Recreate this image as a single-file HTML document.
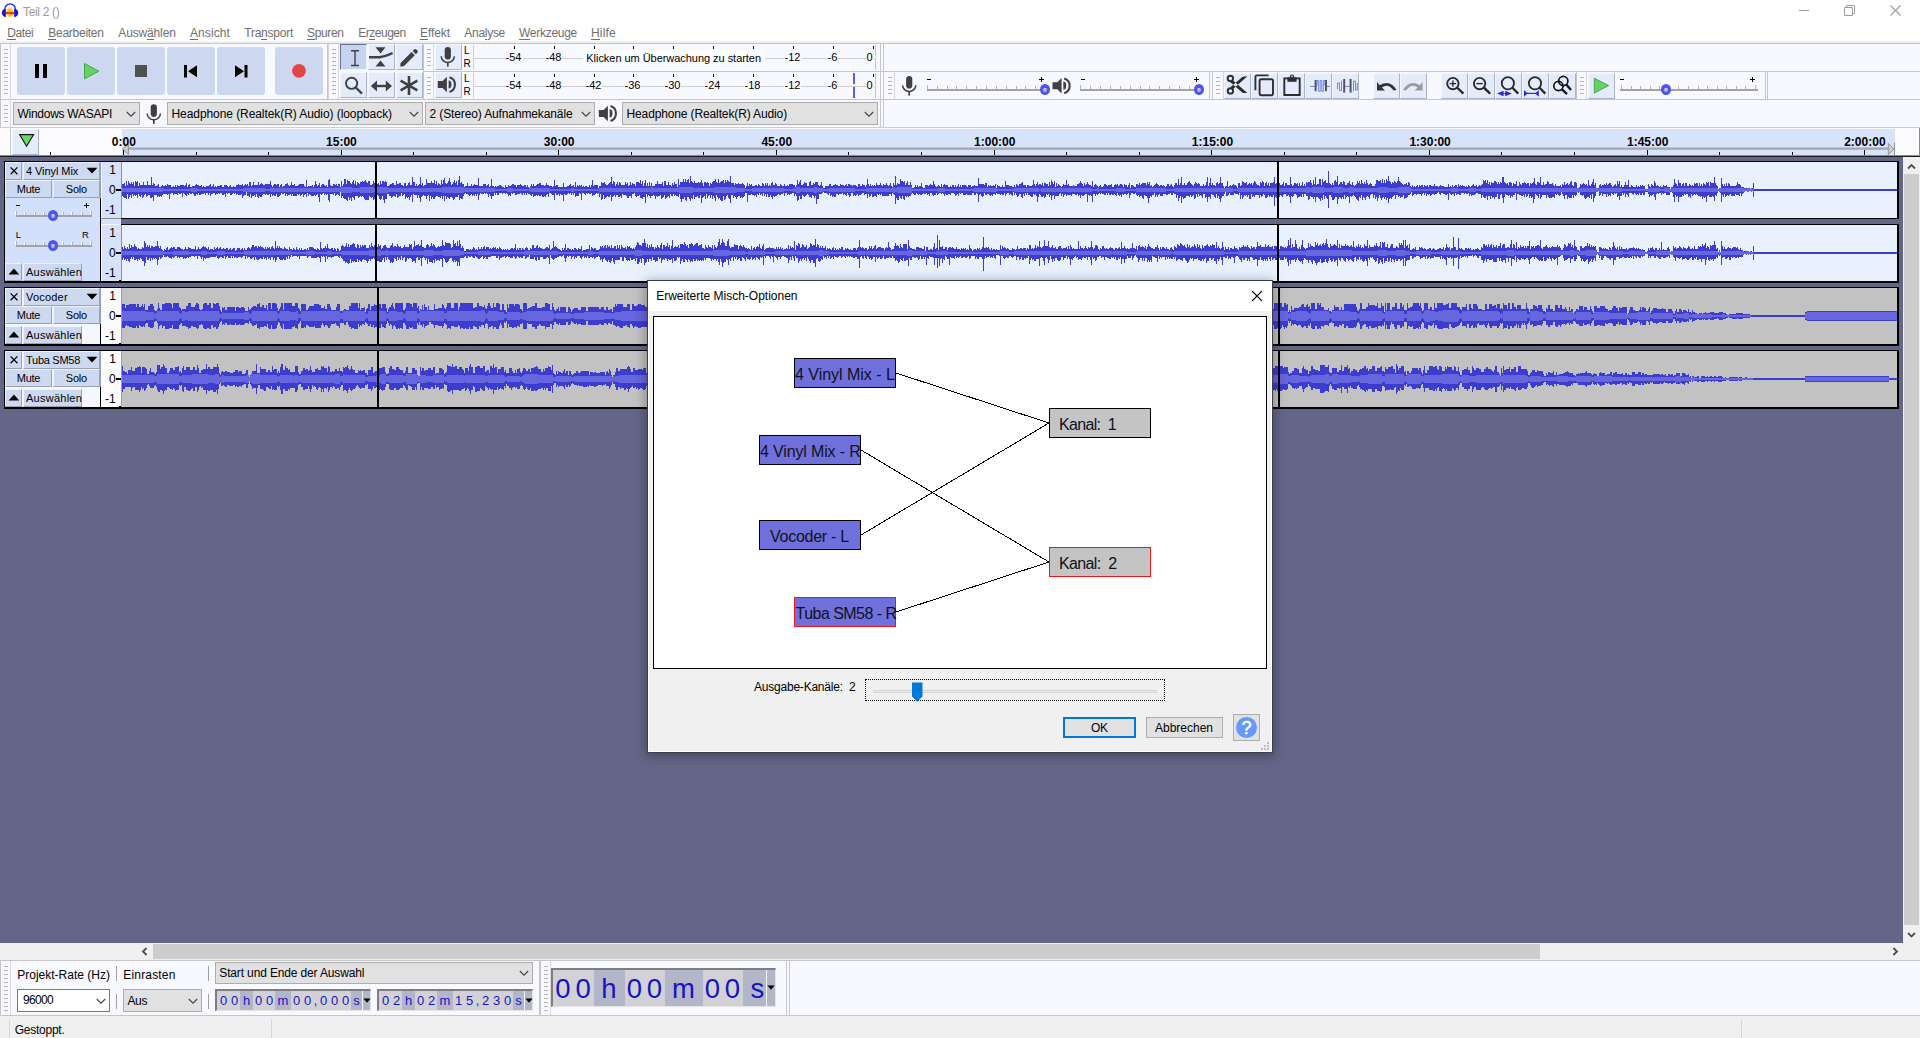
<!DOCTYPE html><html><head><meta charset="utf-8"><title>Teil 2</title><style>
html,body{margin:0;padding:0;}
body{width:1920px;height:1038px;overflow:hidden;position:relative;background:#fff;font-family:"Liberation Sans",sans-serif;}
div,span,svg{position:absolute;box-sizing:border-box;}
span{white-space:pre;}
</style></head><body><div style="left:0px;top:0px;width:1920px;height:23px;background:#fff"></div>
<svg style="left:0;top:0" width="20" height="20" viewBox="0 0 20 20">
<defs><radialGradient id="ag" cx="0.5" cy="0.5" r="0.55"><stop offset="0" stop-color="#f7a21a"/><stop offset="0.6" stop-color="#fbc52c"/><stop offset="1" stop-color="#fff3b0"/></radialGradient></defs>
<ellipse cx="10" cy="12.6" rx="4.4" ry="4.7" fill="url(#ag)"/>
<path d="M5.6 12.2 L8 11.9 L9 12.4 L11 12 L14.4 12.2 V13.9 L11 14.2 L9.4 13.8 L5.6 14 Z" fill="#ff2200"/>
<path d="M4.7 9.6 A5.4 5.8 0 0 1 15.5 9.6" fill="none" stroke="#2222ea" stroke-width="1.25"/>
<path d="M5.9 8.7 V16.9 C3.4 17.4 1.9 14.9 1.9 12.8 C1.9 10.5 3.5 8.5 5.9 8.7 Z" fill="#1414e0"/>
<path d="M14.1 8.7 V16.9 C16.6 17.4 18.2 14.9 18.2 12.8 C18.2 10.5 16.5 8.5 14.1 8.7 Z" fill="#1414e0"/>
</svg>
<span style="left:23px;top:6.34px;font-size:12px;line-height:12px;color:#9a9a9a;font-weight:normal;letter-spacing:-0.338px;">Teil 2 ()</span>
<svg style="left:1790px;top:0" width="130" height="23" viewBox="0 0 130 23">
<path d="M9 10.5 H19" stroke="#9c9c9c" stroke-width="1"/>
<path d="M54.5 7.5 H62.5 V15.5 H54.5 Z M56.5 7.5 V5.5 H64.5 V13.5 H62.5" fill="none" stroke="#9c9c9c" stroke-width="1"/>
<path d="M100.5 5.5 L110.5 15.5 M110.5 5.5 L100.5 15.5" stroke="#9c9c9c" stroke-width="1.1"/>
</svg>
<div style="left:0px;top:23px;width:1920px;height:19px;background:#fff"></div>
<span style="left:7.3px;top:27.24px;font-size:12px;line-height:12px;color:#6e6e6e;font-weight:normal;letter-spacing:-0.403px;">Datei</span>
<div style="left:7.3px;top:38.6px;width:8.3px;height:1px;background:#6e6e6e"></div>
<span style="left:48.3px;top:27.24px;font-size:12px;line-height:12px;color:#6e6e6e;font-weight:normal;letter-spacing:-0.265px;">Bearbeiten</span>
<div style="left:48.3px;top:38.6px;width:7.8px;height:1px;background:#6e6e6e"></div>
<span style="left:118.3px;top:27.24px;font-size:12px;line-height:12px;color:#6e6e6e;font-weight:normal;letter-spacing:-0.147px;">Auswählen</span>
<div style="left:147.1px;top:38.6px;width:6.5px;height:1px;background:#6e6e6e"></div>
<span style="left:190px;top:27.24px;font-size:12px;line-height:12px;color:#6e6e6e;font-weight:normal;letter-spacing:0.092px;">Ansicht</span>
<div style="left:190.0px;top:38.6px;width:8.1px;height:1px;background:#6e6e6e"></div>
<span style="left:244.3px;top:27.24px;font-size:12px;line-height:12px;color:#6e6e6e;font-weight:normal;letter-spacing:-0.245px;">Transport</span>
<div style="left:261.1px;top:38.6px;width:6.4px;height:1px;background:#6e6e6e"></div>
<span style="left:307px;top:27.24px;font-size:12px;line-height:12px;color:#6e6e6e;font-weight:normal;letter-spacing:-0.334px;">Spuren</span>
<div style="left:307.0px;top:38.6px;width:7.7px;height:1px;background:#6e6e6e"></div>
<span style="left:358.3px;top:27.24px;font-size:12px;line-height:12px;color:#6e6e6e;font-weight:normal;letter-spacing:-0.497px;">Erzeugen</span>
<div style="left:369.3px;top:38.6px;width:5.5px;height:1px;background:#6e6e6e"></div>
<span style="left:420px;top:27.24px;font-size:12px;line-height:12px;color:#6e6e6e;font-weight:normal;letter-spacing:-0.078px;">Effekt</span>
<div style="left:420.0px;top:38.6px;width:7.9px;height:1px;background:#6e6e6e"></div>
<span style="left:464.3px;top:27.24px;font-size:12px;line-height:12px;color:#6e6e6e;font-weight:normal;letter-spacing:-0.286px;">Analyse</span>
<div style="left:484.8px;top:38.6px;width:2.4px;height:1px;background:#6e6e6e"></div>
<span style="left:519px;top:27.24px;font-size:12px;line-height:12px;color:#6e6e6e;font-weight:normal;letter-spacing:-0.276px;">Werkzeuge</span>
<div style="left:519.0px;top:38.6px;width:11.1px;height:1px;background:#6e6e6e"></div>
<span style="left:591px;top:27.24px;font-size:12px;line-height:12px;color:#6e6e6e;font-weight:normal;letter-spacing:0.197px;">Hilfe</span>
<div style="left:591.0px;top:38.6px;width:8.9px;height:1px;background:#6e6e6e"></div>
<div style="left:0px;top:42px;width:1920px;height:86px;background:#f8f9fe"></div>
<div style="left:0px;top:41px;width:1920px;height:2px;background:#efefef"></div>
<div style="left:0px;top:43px;width:329px;height:57px;border:1px solid #c6c6c9;background:#f8f9fe"></div>
<div style="left:4px;top:49px;width:4px;height:47px;"><div style="left:0;top:0px;width:4px;height:1px;background:#b4b4b8"></div><div style="left:0;top:4px;width:4px;height:1px;background:#b4b4b8"></div><div style="left:0;top:8px;width:4px;height:1px;background:#b4b4b8"></div><div style="left:0;top:12px;width:4px;height:1px;background:#b4b4b8"></div><div style="left:0;top:16px;width:4px;height:1px;background:#b4b4b8"></div><div style="left:0;top:20px;width:4px;height:1px;background:#b4b4b8"></div><div style="left:0;top:24px;width:4px;height:1px;background:#b4b4b8"></div><div style="left:0;top:28px;width:4px;height:1px;background:#b4b4b8"></div><div style="left:0;top:32px;width:4px;height:1px;background:#b4b4b8"></div><div style="left:0;top:36px;width:4px;height:1px;background:#b4b4b8"></div><div style="left:0;top:40px;width:4px;height:1px;background:#b4b4b8"></div><div style="left:0;top:44px;width:4px;height:1px;background:#b4b4b8"></div></div>
<div style="left:10px;top:44px;width:1px;height:55px;background:#dadade"></div>
<div style="left:17px;top:47px;width:48px;height:48px;background:#cdd8f0;border-radius:3px"></div>
<div style="left:67px;top:47px;width:48px;height:48px;background:#cdd8f0;border-radius:3px"></div>
<div style="left:117px;top:47px;width:48px;height:48px;background:#cdd8f0;border-radius:3px"></div>
<div style="left:167px;top:47px;width:48px;height:48px;background:#cdd8f0;border-radius:3px"></div>
<div style="left:217px;top:47px;width:48px;height:48px;background:#cdd8f0;border-radius:3px"></div>
<div style="left:275px;top:47px;width:48px;height:48px;background:#cdd8f0;border-radius:3px"></div>
<svg style="left:0;top:43px" width="330" height="56" viewBox="0 43 330 56">
<rect x="35" y="64" width="4" height="14" fill="#000"/><rect x="43" y="64" width="4" height="14" fill="#000"/>
<path d="M84.5 63.5 L98.8 71.2 L84.5 78.8 Z" fill="#63d463" stroke="#3f9e3f" stroke-width="0.9" stroke-linejoin="round"/>
<rect x="135" y="65" width="12" height="12" fill="#505050"/>
<rect x="184" y="65" width="3" height="12.5" fill="#000"/><path d="M197 65.2 V77.2 L188 71.2 Z" fill="#000"/>
<rect x="244.5" y="65" width="3" height="12.5" fill="#000"/><path d="M235 65.2 V77.2 L244 71.2 Z" fill="#000"/>
<circle cx="299" cy="70.8" r="6.9" fill="#e04646"/>
</svg>
<div style="left:327px;top:43px;width:97px;height:57px;border:1px solid #c6c6c9;background:#f8f9fe"></div>
<div style="left:332px;top:49px;width:4px;height:47px;"><div style="left:0;top:0px;width:4px;height:1px;background:#b4b4b8"></div><div style="left:0;top:4px;width:4px;height:1px;background:#b4b4b8"></div><div style="left:0;top:8px;width:4px;height:1px;background:#b4b4b8"></div><div style="left:0;top:12px;width:4px;height:1px;background:#b4b4b8"></div><div style="left:0;top:16px;width:4px;height:1px;background:#b4b4b8"></div><div style="left:0;top:20px;width:4px;height:1px;background:#b4b4b8"></div><div style="left:0;top:24px;width:4px;height:1px;background:#b4b4b8"></div><div style="left:0;top:28px;width:4px;height:1px;background:#b4b4b8"></div><div style="left:0;top:32px;width:4px;height:1px;background:#b4b4b8"></div><div style="left:0;top:36px;width:4px;height:1px;background:#b4b4b8"></div><div style="left:0;top:40px;width:4px;height:1px;background:#b4b4b8"></div><div style="left:0;top:44px;width:4px;height:1px;background:#b4b4b8"></div></div>
<div style="left:338px;top:44px;width:1px;height:55px;background:#dadade"></div>
<div style="left:328px;top:44px;width:1px;height:55px;background:#d2d2d6"></div>
<div style="left:340px;top:44px;width:27px;height:26px;background:#c6d4f1;border-top:1px solid #66708f;border-left:1px solid #66708f;border-right:1px solid #eef3fd;border-bottom:1px solid #eef3fd"></div>
<div style="left:368px;top:44px;width:27px;height:26px;background:#e4ecfc;border-top:1px solid #f4f7fe;border-left:1px solid #f4f7fe;border-right:1px solid #a9b3cb;border-bottom:1px solid #a9b3cb"></div>
<div style="left:396px;top:44px;width:27px;height:26px;background:#e4ecfc;border-top:1px solid #f4f7fe;border-left:1px solid #f4f7fe;border-right:1px solid #a9b3cb;border-bottom:1px solid #a9b3cb"></div>
<div style="left:340px;top:72px;width:27px;height:26px;background:#e4ecfc;border-top:1px solid #f4f7fe;border-left:1px solid #f4f7fe;border-right:1px solid #a9b3cb;border-bottom:1px solid #a9b3cb"></div>
<div style="left:368px;top:72px;width:27px;height:26px;background:#e4ecfc;border-top:1px solid #f4f7fe;border-left:1px solid #f4f7fe;border-right:1px solid #a9b3cb;border-bottom:1px solid #a9b3cb"></div>
<div style="left:396px;top:72px;width:27px;height:26px;background:#e4ecfc;border-top:1px solid #f4f7fe;border-left:1px solid #f4f7fe;border-right:1px solid #a9b3cb;border-bottom:1px solid #a9b3cb"></div>
<svg style="left:338px;top:43px" width="90" height="57" viewBox="338 43 90 57">
<g fill="none" stroke="#404040">
<path d="M351 50.8 H359 M351 65.5 H359 M355 50.8 V65.5" stroke-width="1.4"/>
<path d="M369 57.2 H379.5 Q385 56.6 392.6 53" stroke-width="2.4"/>
<circle cx="351.6" cy="83.3" r="5.6" stroke-width="1.9"/><path d="M355.8 87.5 L362 93.6" stroke-width="2.3"/>
<path d="M374 86 H389" stroke-width="2.4"/>
<path d="M409 76 V95 M400.6 80.6 L417.4 90.4 M417.4 80.6 L400.6 90.4" stroke-width="2.6"/>
</g>
<g fill="#404040">
<path d="M375.5 47.2 H385.5 L380.5 53.4 Z M375.5 66.6 H385.5 L380.5 60.4 Z"/>
<path d="M400.6 63 L411.6 52 L414.8 55.2 L403.8 66.2 L400.2 66.6 Z M412.6 51 L414.4 49.3 Q415.4 48.6 416.4 49.5 L417.5 50.6 Q418.3 51.6 417.5 52.5 L415.8 54.2 Z"/>
<path d="M370.8 86 L377 80.6 V91.4 Z M392 86 L385.8 80.6 V91.4 Z"/>
</g></svg>
<div style="left:423px;top:43px;width:458px;height:29px;border:1px solid #c6c6c9;background:#f8f9fe"></div>
<div style="left:427px;top:49px;width:4px;height:19px;"><div style="left:0;top:0px;width:4px;height:1px;background:#b4b4b8"></div><div style="left:0;top:4px;width:4px;height:1px;background:#b4b4b8"></div><div style="left:0;top:8px;width:4px;height:1px;background:#b4b4b8"></div><div style="left:0;top:12px;width:4px;height:1px;background:#b4b4b8"></div><div style="left:0;top:16px;width:4px;height:1px;background:#b4b4b8"></div></div>
<div style="left:433px;top:44px;width:1px;height:27px;background:#dadade"></div>
<div style="left:435px;top:44px;width:27px;height:26px;background:#e4ecfc;border-top:1px solid #f4f7fe;border-left:1px solid #f4f7fe;border-right:1px solid #a9b3cb;border-bottom:1px solid #a9b3cb"></div>
<div style="left:473px;top:45px;width:403px;height:12px;border-left:1px solid #d0d0d4;border-right:1px solid #c4c4c8"></div>
<div style="left:473px;top:58px;width:403px;height:12px;border-top:1px solid #cfcfd3;border-left:1px solid #d0d0d4;border-right:1px solid #c4c4c8"></div>
<span style="left:464px;top:45.73px;font-size:10px;line-height:10px;color:#000;font-weight:normal;">L</span>
<span style="left:463.6px;top:59.13px;font-size:10px;line-height:10px;color:#000;font-weight:normal;">R</span>
<div style="left:514px;top:46px;width:1px;height:3px;background:#000"></div>
<span style="left:505.6px;top:52.29px;font-size:11px;line-height:11px;color:#000;font-weight:normal;background:#f8f9fe;padding:0 1px;margin-left:-1px;">-54</span>
<div style="left:554px;top:46px;width:1px;height:3px;background:#000"></div>
<span style="left:545.5px;top:52.29px;font-size:11px;line-height:11px;color:#000;font-weight:normal;background:#f8f9fe;padding:0 1px;margin-left:-1px;">-48</span>
<div style="left:594px;top:46px;width:1px;height:3px;background:#000"></div>
<div style="left:633px;top:46px;width:1px;height:3px;background:#000"></div>
<div style="left:673px;top:46px;width:1px;height:3px;background:#000"></div>
<div style="left:713px;top:46px;width:1px;height:3px;background:#000"></div>
<div style="left:753px;top:46px;width:1px;height:3px;background:#000"></div>
<div style="left:793px;top:46px;width:1px;height:3px;background:#000"></div>
<span style="left:784.5px;top:52.29px;font-size:11px;line-height:11px;color:#000;font-weight:normal;background:#f8f9fe;padding:0 1px;margin-left:-1px;">-12</span>
<div style="left:833px;top:46px;width:1px;height:3px;background:#000"></div>
<span style="left:827.6px;top:52.29px;font-size:11px;line-height:11px;color:#000;font-weight:normal;background:#f8f9fe;padding:0 1px;margin-left:-1px;">-6</span>
<div style="left:873px;top:46px;width:1px;height:3px;background:#000"></div>
<span style="left:866.5px;top:52.29px;font-size:11px;line-height:11px;color:#000;font-weight:normal;background:#f8f9fe;padding:0 1px;margin-left:-1px;">0</span>
<div style="left:423px;top:71px;width:458px;height:29px;border:1px solid #c6c6c9;background:#f8f9fe"></div>
<div style="left:427px;top:77px;width:4px;height:19px;"><div style="left:0;top:0px;width:4px;height:1px;background:#b4b4b8"></div><div style="left:0;top:4px;width:4px;height:1px;background:#b4b4b8"></div><div style="left:0;top:8px;width:4px;height:1px;background:#b4b4b8"></div><div style="left:0;top:12px;width:4px;height:1px;background:#b4b4b8"></div><div style="left:0;top:16px;width:4px;height:1px;background:#b4b4b8"></div></div>
<div style="left:433px;top:72px;width:1px;height:27px;background:#dadade"></div>
<div style="left:435px;top:72px;width:27px;height:26px;background:#e4ecfc;border-top:1px solid #f4f7fe;border-left:1px solid #f4f7fe;border-right:1px solid #a9b3cb;border-bottom:1px solid #a9b3cb"></div>
<div style="left:473px;top:73px;width:403px;height:12px;border-left:1px solid #d0d0d4;border-right:1px solid #c4c4c8"></div>
<div style="left:473px;top:86px;width:403px;height:12px;border-top:1px solid #cfcfd3;border-left:1px solid #d0d0d4;border-right:1px solid #c4c4c8"></div>
<span style="left:464px;top:73.73px;font-size:10px;line-height:10px;color:#000;font-weight:normal;">L</span>
<span style="left:463.6px;top:87.13px;font-size:10px;line-height:10px;color:#000;font-weight:normal;">R</span>
<div style="left:514px;top:74px;width:1px;height:3px;background:#000"></div>
<span style="left:505.6px;top:80.29px;font-size:11px;line-height:11px;color:#000;font-weight:normal;background:#f8f9fe;padding:0 1px;margin-left:-1px;">-54</span>
<div style="left:554px;top:74px;width:1px;height:3px;background:#000"></div>
<span style="left:545.5px;top:80.29px;font-size:11px;line-height:11px;color:#000;font-weight:normal;background:#f8f9fe;padding:0 1px;margin-left:-1px;">-48</span>
<div style="left:594px;top:74px;width:1px;height:3px;background:#000"></div>
<span style="left:585.5px;top:80.29px;font-size:11px;line-height:11px;color:#000;font-weight:normal;background:#f8f9fe;padding:0 1px;margin-left:-1px;">-42</span>
<div style="left:633px;top:74px;width:1px;height:3px;background:#000"></div>
<span style="left:624.5px;top:80.29px;font-size:11px;line-height:11px;color:#000;font-weight:normal;background:#f8f9fe;padding:0 1px;margin-left:-1px;">-36</span>
<div style="left:673px;top:74px;width:1px;height:3px;background:#000"></div>
<span style="left:664.5px;top:80.29px;font-size:11px;line-height:11px;color:#000;font-weight:normal;background:#f8f9fe;padding:0 1px;margin-left:-1px;">-30</span>
<div style="left:713px;top:74px;width:1px;height:3px;background:#000"></div>
<span style="left:704.5px;top:80.29px;font-size:11px;line-height:11px;color:#000;font-weight:normal;background:#f8f9fe;padding:0 1px;margin-left:-1px;">-24</span>
<div style="left:753px;top:74px;width:1px;height:3px;background:#000"></div>
<span style="left:744.5px;top:80.29px;font-size:11px;line-height:11px;color:#000;font-weight:normal;background:#f8f9fe;padding:0 1px;margin-left:-1px;">-18</span>
<div style="left:793px;top:74px;width:1px;height:3px;background:#000"></div>
<span style="left:784.5px;top:80.29px;font-size:11px;line-height:11px;color:#000;font-weight:normal;background:#f8f9fe;padding:0 1px;margin-left:-1px;">-12</span>
<div style="left:833px;top:74px;width:1px;height:3px;background:#000"></div>
<span style="left:827.6px;top:80.29px;font-size:11px;line-height:11px;color:#000;font-weight:normal;background:#f8f9fe;padding:0 1px;margin-left:-1px;">-6</span>
<div style="left:873px;top:74px;width:1px;height:3px;background:#000"></div>
<span style="left:866.5px;top:80.29px;font-size:11px;line-height:11px;color:#000;font-weight:normal;background:#f8f9fe;padding:0 1px;margin-left:-1px;">0</span>
<svg style="left:435px;top:43px" width="28" height="57" viewBox="435 43 28 57"><g transform="translate(447.8,58) scale(1.0)"><rect x="-3.1" y="-11" width="6.2" height="12.6" rx="3.1" fill="#404040"/><path d="M-6.6 -1.8 A6.6 6.3 0 0 0 6.6 -1.8" fill="none" stroke="#404040" stroke-width="1.5"/><path d="M0 4.4 V8.6" stroke="#404040" stroke-width="1.7"/></g><g transform="translate(446.9,84.6) scale(1.0)"><path d="M-9.1 -3.5 H-4.3 L0 -7.8 V7.7 L-4.3 3.5 H-9.1 Z" fill="#404040"/><path d="M1.7 -4.2 A2.9 4.1 0 0 1 1.7 4.0 Z" fill="#404040"/><path d="M2.6 -7.4 A7.5 7.7 0 0 1 2.6 7.4" fill="none" stroke="#404040" stroke-width="2.1"/></g></svg>
<div style="left:583px;top:50px;width:182px;height:15px;background:#fbfcff"></div>
<span style="left:586.3px;top:52.29px;font-size:11px;line-height:11px;color:#000;font-weight:normal;letter-spacing:-0.042px;background:#fbfcff;padding:1px 2px;margin-left:-2px;">Klicken um Überwachung zu starten</span>
<div style="left:853px;top:73px;width:2px;height:11px;background:#5a5aec"></div>
<div style="left:853px;top:87px;width:2px;height:11px;background:#5a5aec"></div>
<div style="left:881px;top:43px;width:1039px;height:1px;background:none"></div>
<div style="left:883px;top:71px;width:327px;height:29px;border:1px solid #c6c6c9;background:#f8f9fe"></div>
<div style="left:888px;top:77px;width:4px;height:19px;"><div style="left:0;top:0px;width:4px;height:1px;background:#b4b4b8"></div><div style="left:0;top:4px;width:4px;height:1px;background:#b4b4b8"></div><div style="left:0;top:8px;width:4px;height:1px;background:#b4b4b8"></div><div style="left:0;top:12px;width:4px;height:1px;background:#b4b4b8"></div><div style="left:0;top:16px;width:4px;height:1px;background:#b4b4b8"></div></div>
<div style="left:894px;top:72px;width:1px;height:27px;background:#dadade"></div>
<div style="left:927px;top:89px;width:119px;height:2px;background:#a3a3a3"></div>
<div style="left:926px;top:85px;width:1px;height:4px;background:rgba(255,255,255,0.85)"></div>
<div style="left:927px;top:85px;width:1px;height:4px;background:#b4b4b4"></div>
<div style="left:936px;top:86px;width:1px;height:3px;background:rgba(255,255,255,0.85)"></div>
<div style="left:937px;top:86px;width:1px;height:3px;background:#b4b4b4"></div>
<div style="left:946px;top:86px;width:1px;height:3px;background:rgba(255,255,255,0.85)"></div>
<div style="left:947px;top:86px;width:1px;height:3px;background:#b4b4b4"></div>
<div style="left:955px;top:86px;width:1px;height:3px;background:rgba(255,255,255,0.85)"></div>
<div style="left:956px;top:86px;width:1px;height:3px;background:#b4b4b4"></div>
<div style="left:965px;top:86px;width:1px;height:3px;background:rgba(255,255,255,0.85)"></div>
<div style="left:966px;top:86px;width:1px;height:3px;background:#b4b4b4"></div>
<div style="left:975px;top:86px;width:1px;height:3px;background:rgba(255,255,255,0.85)"></div>
<div style="left:976px;top:86px;width:1px;height:3px;background:#b4b4b4"></div>
<div style="left:985px;top:86px;width:1px;height:3px;background:rgba(255,255,255,0.85)"></div>
<div style="left:986px;top:86px;width:1px;height:3px;background:#b4b4b4"></div>
<div style="left:995px;top:86px;width:1px;height:3px;background:rgba(255,255,255,0.85)"></div>
<div style="left:996px;top:86px;width:1px;height:3px;background:#b4b4b4"></div>
<div style="left:1005px;top:86px;width:1px;height:3px;background:rgba(255,255,255,0.85)"></div>
<div style="left:1006px;top:86px;width:1px;height:3px;background:#b4b4b4"></div>
<div style="left:1015px;top:86px;width:1px;height:3px;background:rgba(255,255,255,0.85)"></div>
<div style="left:1016px;top:86px;width:1px;height:3px;background:#b4b4b4"></div>
<div style="left:1024px;top:86px;width:1px;height:3px;background:rgba(255,255,255,0.85)"></div>
<div style="left:1025px;top:86px;width:1px;height:3px;background:#b4b4b4"></div>
<div style="left:1034px;top:86px;width:1px;height:3px;background:rgba(255,255,255,0.85)"></div>
<div style="left:1035px;top:86px;width:1px;height:3px;background:#b4b4b4"></div>
<div style="left:1044px;top:85px;width:1px;height:4px;background:rgba(255,255,255,0.85)"></div>
<div style="left:1045px;top:85px;width:1px;height:4px;background:#b4b4b4"></div>
<div style="left:1039.9px;top:83.9px;width:10.2px;height:11.2px;border-radius:50%;background:#4e54ec"></div>
<div style="left:1043.0px;top:87.6px;width:4.0px;height:4.2px;border-radius:50%;background:linear-gradient(#f0f0f4,#b0b0b8 50%,#b8b8c4)"></div>
<div style="left:927px;top:79px;width:4px;height:1px;background:#000"></div>
<div style="left:1039px;top:79px;width:5px;height:1px;background:#000"></div>
<div style="left:1041px;top:77px;width:1px;height:5px;background:#000"></div>
<div style="left:1080px;top:89px;width:120px;height:2px;background:#a3a3a3"></div>
<div style="left:1079px;top:85px;width:1px;height:4px;background:rgba(255,255,255,0.85)"></div>
<div style="left:1080px;top:85px;width:1px;height:4px;background:#b4b4b4"></div>
<div style="left:1089px;top:86px;width:1px;height:3px;background:rgba(255,255,255,0.85)"></div>
<div style="left:1090px;top:86px;width:1px;height:3px;background:#b4b4b4"></div>
<div style="left:1099px;top:86px;width:1px;height:3px;background:rgba(255,255,255,0.85)"></div>
<div style="left:1100px;top:86px;width:1px;height:3px;background:#b4b4b4"></div>
<div style="left:1109px;top:86px;width:1px;height:3px;background:rgba(255,255,255,0.85)"></div>
<div style="left:1110px;top:86px;width:1px;height:3px;background:#b4b4b4"></div>
<div style="left:1119px;top:86px;width:1px;height:3px;background:rgba(255,255,255,0.85)"></div>
<div style="left:1120px;top:86px;width:1px;height:3px;background:#b4b4b4"></div>
<div style="left:1129px;top:86px;width:1px;height:3px;background:rgba(255,255,255,0.85)"></div>
<div style="left:1130px;top:86px;width:1px;height:3px;background:#b4b4b4"></div>
<div style="left:1139px;top:86px;width:1px;height:3px;background:rgba(255,255,255,0.85)"></div>
<div style="left:1140px;top:86px;width:1px;height:3px;background:#b4b4b4"></div>
<div style="left:1148px;top:86px;width:1px;height:3px;background:rgba(255,255,255,0.85)"></div>
<div style="left:1149px;top:86px;width:1px;height:3px;background:#b4b4b4"></div>
<div style="left:1158px;top:86px;width:1px;height:3px;background:rgba(255,255,255,0.85)"></div>
<div style="left:1159px;top:86px;width:1px;height:3px;background:#b4b4b4"></div>
<div style="left:1168px;top:86px;width:1px;height:3px;background:rgba(255,255,255,0.85)"></div>
<div style="left:1169px;top:86px;width:1px;height:3px;background:#b4b4b4"></div>
<div style="left:1178px;top:86px;width:1px;height:3px;background:rgba(255,255,255,0.85)"></div>
<div style="left:1179px;top:86px;width:1px;height:3px;background:#b4b4b4"></div>
<div style="left:1188px;top:86px;width:1px;height:3px;background:rgba(255,255,255,0.85)"></div>
<div style="left:1189px;top:86px;width:1px;height:3px;background:#b4b4b4"></div>
<div style="left:1198px;top:85px;width:1px;height:4px;background:rgba(255,255,255,0.85)"></div>
<div style="left:1199px;top:85px;width:1px;height:4px;background:#b4b4b4"></div>
<div style="left:1193.9px;top:83.9px;width:10.2px;height:11.2px;border-radius:50%;background:#4e54ec"></div>
<div style="left:1197.0px;top:87.6px;width:4.0px;height:4.2px;border-radius:50%;background:linear-gradient(#f0f0f4,#b0b0b8 50%,#b8b8c4)"></div>
<div style="left:1081px;top:79px;width:4px;height:1px;background:#000"></div>
<div style="left:1194px;top:79px;width:5px;height:1px;background:#000"></div>
<div style="left:1196px;top:77px;width:1px;height:5px;background:#000"></div>
<svg style="left:895px;top:72px" width="200" height="28" viewBox="895 72 200 28"><g transform="translate(909.2,87) scale(1.0)"><rect x="-3.1" y="-11" width="6.2" height="12.6" rx="3.1" fill="#404040"/><path d="M-6.6 -1.8 A6.6 6.3 0 0 0 6.6 -1.8" fill="none" stroke="#404040" stroke-width="1.5"/><path d="M0 4.4 V8.6" stroke="#404040" stroke-width="1.7"/></g><g transform="translate(1061.6,85.8) scale(1.0)"><path d="M-9.1 -3.5 H-4.3 L0 -7.8 V7.7 L-4.3 3.5 H-9.1 Z" fill="#404040"/><path d="M1.7 -4.2 A2.9 4.1 0 0 1 1.7 4.0 Z" fill="#404040"/><path d="M2.6 -7.4 A7.5 7.7 0 0 1 2.6 7.4" fill="none" stroke="#404040" stroke-width="2.1"/></g></svg>
<div style="left:1212px;top:71px;width:366px;height:29px;border:1px solid #c6c6c9;background:#f8f9fe"></div>
<div style="left:1216px;top:77px;width:4px;height:19px;"><div style="left:0;top:0px;width:4px;height:1px;background:#b4b4b8"></div><div style="left:0;top:4px;width:4px;height:1px;background:#b4b4b8"></div><div style="left:0;top:8px;width:4px;height:1px;background:#b4b4b8"></div><div style="left:0;top:12px;width:4px;height:1px;background:#b4b4b8"></div><div style="left:0;top:16px;width:4px;height:1px;background:#b4b4b8"></div></div>
<div style="left:1223px;top:72px;width:1px;height:27px;background:#dadade"></div>
<div style="left:1224px;top:73px;width:27px;height:26px;background:#e4ecfc;border-top:1px solid #f4f7fe;border-left:1px solid #f4f7fe;border-right:1px solid #a9b3cb;border-bottom:1px solid #a9b3cb"></div>
<div style="left:1251px;top:73px;width:27px;height:26px;background:#e4ecfc;border-top:1px solid #f4f7fe;border-left:1px solid #f4f7fe;border-right:1px solid #a9b3cb;border-bottom:1px solid #a9b3cb"></div>
<div style="left:1278px;top:73px;width:27px;height:26px;background:#e4ecfc;border-top:1px solid #f4f7fe;border-left:1px solid #f4f7fe;border-right:1px solid #a9b3cb;border-bottom:1px solid #a9b3cb"></div>
<div style="left:1305px;top:73px;width:27px;height:26px;background:#e4ecfc;border-top:1px solid #f4f7fe;border-left:1px solid #f4f7fe;border-right:1px solid #a9b3cb;border-bottom:1px solid #a9b3cb"></div>
<div style="left:1332px;top:73px;width:27px;height:26px;background:#e4ecfc;border-top:1px solid #f4f7fe;border-left:1px solid #f4f7fe;border-right:1px solid #a9b3cb;border-bottom:1px solid #a9b3cb"></div>
<div style="left:1373px;top:73px;width:27px;height:26px;background:#e4ecfc;border-top:1px solid #f4f7fe;border-left:1px solid #f4f7fe;border-right:1px solid #a9b3cb;border-bottom:1px solid #a9b3cb"></div>
<div style="left:1400px;top:73px;width:27px;height:26px;background:#e4ecfc;border-top:1px solid #f4f7fe;border-left:1px solid #f4f7fe;border-right:1px solid #a9b3cb;border-bottom:1px solid #a9b3cb"></div>
<div style="left:1441px;top:73px;width:27px;height:26px;background:#e4ecfc;border-top:1px solid #f4f7fe;border-left:1px solid #f4f7fe;border-right:1px solid #a9b3cb;border-bottom:1px solid #a9b3cb"></div>
<div style="left:1468px;top:73px;width:27px;height:26px;background:#e4ecfc;border-top:1px solid #f4f7fe;border-left:1px solid #f4f7fe;border-right:1px solid #a9b3cb;border-bottom:1px solid #a9b3cb"></div>
<div style="left:1495px;top:73px;width:27px;height:26px;background:#e4ecfc;border-top:1px solid #f4f7fe;border-left:1px solid #f4f7fe;border-right:1px solid #a9b3cb;border-bottom:1px solid #a9b3cb"></div>
<div style="left:1522px;top:73px;width:27px;height:26px;background:#e4ecfc;border-top:1px solid #f4f7fe;border-left:1px solid #f4f7fe;border-right:1px solid #a9b3cb;border-bottom:1px solid #a9b3cb"></div>
<div style="left:1549px;top:73px;width:27px;height:26px;background:#e4ecfc;border-top:1px solid #f4f7fe;border-left:1px solid #f4f7fe;border-right:1px solid #a9b3cb;border-bottom:1px solid #a9b3cb"></div>
<svg style="left:1211px;top:71px" width="367" height="29" viewBox="1211 71 367 29">
<g fill="none" stroke="#2e2e2e">
<circle cx="1230.4" cy="78.5" r="2.7" stroke-width="1.9"/><circle cx="1230.4" cy="90.9" r="2.7" stroke-width="1.9"/>
</g>
<path d="M1232.6 80 L1247.4 92.9 L1242.8 92.9 L1230.6 82.4 Z M1232.6 89.4 L1247.4 76.3 L1242.6 76.8 L1230.6 87 Z" fill="#2e2e2e"/>
<g fill="none" stroke="#2e2e2e" stroke-width="1.9">
<path d="M1268.6 75.4 H1257 Q1255.4 75.4 1255.4 77 V90.2"/>
<rect x="1259.6" y="79.2" width="13.4" height="16" rx="1.6"/>
<path d="M1284.3 78.4 H1299.7 V95 H1284.3 Z"/>
</g>
<path d="M1287.4 77.4 H1296.6 V81.8 H1287.4 Z" fill="#2e2e2e"/>
<circle cx="1292" cy="76.6" r="2.1" fill="#2e2e2e"/><circle cx="1292" cy="76.4" r="0.8" fill="#e4ecfc"/>
<g fill="none" stroke="#6f86f2" stroke-width="1">
<path d="M1310 86.4 H1315 M1327 86.4 H1330"/>
<path d="M1317 86 V80.5 H1318.6 V91.4 H1320.2 V80.5 H1321.8 V91.4 H1323.4 V80.5 H1325 V86"/>
<path d="M1337.5 89 V83 H1339.5 V90.6 H1341.5 V80.5"/>
<path d="M1345 86.4 H1350"/>
<path d="M1353.5 91.4 V81 H1355.5 V90 H1357.3 V83"/>
</g>
<g fill="#555">
<rect x="1314.6" y="80" width="2" height="11.2"/><rect x="1325" y="80" width="2" height="11.2"/>
<rect x="1343.2" y="79" width="2" height="13.6"/><rect x="1349.6" y="79" width="2" height="13.6"/>
</g>
<path d="M1377 82 V90.6 H1385 L1381.9 87.6 Q1388 82.6 1393.6 90.4 L1396.6 90 Q1390 79 1379.8 85.2 Z" fill="#333"/>
<path d="M1422.6 82 V90.6 H1414.6 L1417.7 87.6 Q1411.6 82.6 1406 90.4 L1403 90 Q1409.6 79 1419.8 85.2 Z" fill="#9a9a9a"/>
<circle cx="1452.9" cy="83.6" r="5.7" fill="none" stroke="#2a2a2a" stroke-width="1.9"/><path d="M1457.0 87.5 L1463.4 93.6" stroke="#2a2a2a" stroke-width="2.4"/>
<path d="M1449.7 83.6 H1456.1 M1452.9 80.4 V86.8" stroke="#2a2a2a" stroke-width="1.4"/>
<circle cx="1479.6" cy="83.6" r="5.7" fill="none" stroke="#2a2a2a" stroke-width="1.9"/><path d="M1483.7 87.5 L1490.2 93.6" stroke="#2a2a2a" stroke-width="2.4"/>
<path d="M1476.4 83.6 H1482.8" stroke="#2a2a2a" stroke-width="1.4"/>
<circle cx="1507.9" cy="83.2" r="6.1" fill="none" stroke="#2a2a2a" stroke-width="1.8"/><path d="M1512.2 87.5 L1518.2 93.6" stroke="#2a2a2a" stroke-width="2.3"/>
<circle cx="1535" cy="83.2" r="6.1" fill="none" stroke="#2a2a2a" stroke-width="1.8"/><path d="M1539.3 87.5 L1545.3 93.6" stroke="#2a2a2a" stroke-width="2.3"/>
<path d="M1497 93.5 L1503.6 90.8 V96.2 Z M1511.8 93.5 L1505.2 90.8 V96.2 Z" fill="#2a2ad2"/>
<path d="M1500 93.5 H1509" stroke="#2a2ad2" stroke-width="1"/>
<path d="M1524 90 L1527.6 93.4 L1524 96.8 Z M1538.8 90 L1535.2 93.4 L1538.8 96.8 Z" fill="#2a2ad2"/>
<path d="M1526 93.4 H1537" stroke="#2a2ad2" stroke-width="1.2"/>
<circle cx="1563.3" cy="81" r="4.6" fill="none" stroke="#111" stroke-width="1.7"/><path d="M1566.3 84.5 L1571 90" stroke="#111" stroke-width="2.3"/>
<circle cx="1558.4" cy="86" r="4.6" fill="none" stroke="#111" stroke-width="1.7"/><path d="M1561.7 89.2 L1567 94.2" stroke="#111" stroke-width="2.3"/>
</svg>
<div style="left:1576px;top:71px;width:190px;height:29px;border:1px solid #c6c6c9;background:#f8f9fe"></div>
<div style="left:1580px;top:77px;width:4px;height:19px;"><div style="left:0;top:0px;width:4px;height:1px;background:#b4b4b8"></div><div style="left:0;top:4px;width:4px;height:1px;background:#b4b4b8"></div><div style="left:0;top:8px;width:4px;height:1px;background:#b4b4b8"></div><div style="left:0;top:12px;width:4px;height:1px;background:#b4b4b8"></div><div style="left:0;top:16px;width:4px;height:1px;background:#b4b4b8"></div></div>
<div style="left:1586px;top:72px;width:1px;height:27px;background:#dadade"></div>
<div style="left:1588px;top:73px;width:27px;height:26px;background:#e4ecfc;border-top:1px solid #f4f7fe;border-left:1px solid #f4f7fe;border-right:1px solid #a9b3cb;border-bottom:1px solid #a9b3cb"></div>
<svg style="left:1588px;top:72px" width="27" height="27" viewBox="1588 72 27 27"><path d="M1594.3 78.2 L1608.6 85.6 L1594.3 93 Z" fill="#63d463" stroke="#3f9e3f" stroke-width="0.9" stroke-linejoin="round"/></svg>
<div style="left:1620px;top:89px;width:138px;height:2px;background:#a3a3a3"></div>
<div style="left:1620px;top:85px;width:1px;height:4px;background:rgba(255,255,255,0.85)"></div>
<div style="left:1621px;top:85px;width:1px;height:4px;background:#b4b4b4"></div>
<div style="left:1630px;top:86px;width:1px;height:3px;background:rgba(255,255,255,0.85)"></div>
<div style="left:1631px;top:86px;width:1px;height:3px;background:#b4b4b4"></div>
<div style="left:1639px;top:86px;width:1px;height:3px;background:rgba(255,255,255,0.85)"></div>
<div style="left:1640px;top:86px;width:1px;height:3px;background:#b4b4b4"></div>
<div style="left:1649px;top:86px;width:1px;height:3px;background:rgba(255,255,255,0.85)"></div>
<div style="left:1650px;top:86px;width:1px;height:3px;background:#b4b4b4"></div>
<div style="left:1658px;top:86px;width:1px;height:3px;background:rgba(255,255,255,0.85)"></div>
<div style="left:1659px;top:86px;width:1px;height:3px;background:#b4b4b4"></div>
<div style="left:1668px;top:86px;width:1px;height:3px;background:rgba(255,255,255,0.85)"></div>
<div style="left:1669px;top:86px;width:1px;height:3px;background:#b4b4b4"></div>
<div style="left:1677px;top:86px;width:1px;height:3px;background:rgba(255,255,255,0.85)"></div>
<div style="left:1678px;top:86px;width:1px;height:3px;background:#b4b4b4"></div>
<div style="left:1687px;top:86px;width:1px;height:3px;background:rgba(255,255,255,0.85)"></div>
<div style="left:1688px;top:86px;width:1px;height:3px;background:#b4b4b4"></div>
<div style="left:1697px;top:86px;width:1px;height:3px;background:rgba(255,255,255,0.85)"></div>
<div style="left:1698px;top:86px;width:1px;height:3px;background:#b4b4b4"></div>
<div style="left:1706px;top:86px;width:1px;height:3px;background:rgba(255,255,255,0.85)"></div>
<div style="left:1707px;top:86px;width:1px;height:3px;background:#b4b4b4"></div>
<div style="left:1716px;top:86px;width:1px;height:3px;background:rgba(255,255,255,0.85)"></div>
<div style="left:1717px;top:86px;width:1px;height:3px;background:#b4b4b4"></div>
<div style="left:1725px;top:86px;width:1px;height:3px;background:rgba(255,255,255,0.85)"></div>
<div style="left:1726px;top:86px;width:1px;height:3px;background:#b4b4b4"></div>
<div style="left:1735px;top:86px;width:1px;height:3px;background:rgba(255,255,255,0.85)"></div>
<div style="left:1736px;top:86px;width:1px;height:3px;background:#b4b4b4"></div>
<div style="left:1744px;top:86px;width:1px;height:3px;background:rgba(255,255,255,0.85)"></div>
<div style="left:1745px;top:86px;width:1px;height:3px;background:#b4b4b4"></div>
<div style="left:1754px;top:85px;width:1px;height:4px;background:rgba(255,255,255,0.85)"></div>
<div style="left:1755px;top:85px;width:1px;height:4px;background:#b4b4b4"></div>
<div style="left:1660.9px;top:83.9px;width:10.2px;height:11.2px;border-radius:50%;background:#4e54ec"></div>
<div style="left:1664.0px;top:87.6px;width:4.0px;height:4.2px;border-radius:50%;background:linear-gradient(#f0f0f4,#b0b0b8 50%,#b8b8c4)"></div>
<div style="left:1620px;top:79px;width:4px;height:1px;background:#000"></div>
<div style="left:1750px;top:79px;width:5px;height:1px;background:#000"></div>
<div style="left:1752px;top:77px;width:1px;height:5px;background:#000"></div>
<div style="left:1767px;top:71px;width:153px;height:29px;border:1px solid #c6c6c9;border-right:none;background:#f8f9fe"></div>
<div style="left:883px;top:43px;width:1037px;height:29px;border:1px solid #c6c6c9;border-right:none;background:#f8f9fe"></div>
<div style="left:0px;top:99px;width:881px;height:29px;border:1px solid #c6c6c9;background:#f8f9fe"></div>
<div style="left:4px;top:105px;width:4px;height:19px;"><div style="left:0;top:0px;width:4px;height:1px;background:#b4b4b8"></div><div style="left:0;top:4px;width:4px;height:1px;background:#b4b4b8"></div><div style="left:0;top:8px;width:4px;height:1px;background:#b4b4b8"></div><div style="left:0;top:12px;width:4px;height:1px;background:#b4b4b8"></div><div style="left:0;top:16px;width:4px;height:1px;background:#b4b4b8"></div></div>
<div style="left:10px;top:100px;width:1px;height:27px;background:#dadade"></div>
<div style="left:883px;top:99px;width:1037px;height:29px;border:1px solid #c6c6c9;border-right:none;background:#f8f9fe"></div>
<div style="left:13px;top:102px;width:127px;height:23px;background:#e1e1e1;border:1px solid #adadad"></div>
<svg style="left:124.5px;top:109.8px" width="12" height="8" viewBox="-6 -4 12 8"><path d="M-4.2 -2 L0 2.2 L4.2 -2" fill="none" stroke="#444" stroke-width="1.1"/></svg>
<span style="left:17.5px;top:107.74px;font-size:12px;line-height:12px;color:#000;font-weight:normal;letter-spacing:-0.268px;">Windows WASAPI</span>
<div style="left:167px;top:102px;width:256px;height:23px;background:#e1e1e1;border:1px solid #adadad"></div>
<svg style="left:407.5px;top:109.8px" width="12" height="8" viewBox="-6 -4 12 8"><path d="M-4.2 -2 L0 2.2 L4.2 -2" fill="none" stroke="#444" stroke-width="1.1"/></svg>
<span style="left:171.5px;top:107.74px;font-size:12px;line-height:12px;color:#000;font-weight:normal;letter-spacing:-0.076px;">Headphone (Realtek(R) Audio) (loopback)</span>
<div style="left:425px;top:102px;width:170px;height:23px;background:#e1e1e1;border:1px solid #adadad"></div>
<svg style="left:579.5px;top:109.8px" width="12" height="8" viewBox="-6 -4 12 8"><path d="M-4.2 -2 L0 2.2 L4.2 -2" fill="none" stroke="#444" stroke-width="1.1"/></svg>
<span style="left:429.5px;top:107.74px;font-size:12px;line-height:12px;color:#000;font-weight:normal;letter-spacing:-0.124px;">2 (Stereo) Aufnahmekanäle</span>
<div style="left:622px;top:102px;width:256px;height:23px;background:#e1e1e1;border:1px solid #adadad"></div>
<svg style="left:862.5px;top:109.8px" width="12" height="8" viewBox="-6 -4 12 8"><path d="M-4.2 -2 L0 2.2 L4.2 -2" fill="none" stroke="#444" stroke-width="1.1"/></svg>
<span style="left:626.5px;top:107.74px;font-size:12px;line-height:12px;color:#000;font-weight:normal;letter-spacing:-0.128px;">Headphone (Realtek(R) Audio)</span>
<svg style="left:140px;top:100px" width="490" height="27" viewBox="140 100 490 27"><g transform="translate(153.8,115.3) scale(1.0)"><rect x="-3.1" y="-11" width="6.2" height="12.6" rx="3.1" fill="#404040"/><path d="M-6.6 -1.8 A6.6 6.3 0 0 0 6.6 -1.8" fill="none" stroke="#404040" stroke-width="1.5"/><path d="M0 4.4 V8.6" stroke="#404040" stroke-width="1.7"/></g><g transform="translate(607.9,113.5) scale(1.0)"><path d="M-9.1 -3.5 H-4.3 L0 -7.8 V7.7 L-4.3 3.5 H-9.1 Z" fill="#404040"/><path d="M1.7 -4.2 A2.9 4.1 0 0 1 1.7 4.0 Z" fill="#404040"/><path d="M2.6 -7.4 A7.5 7.7 0 0 1 2.6 7.4" fill="none" stroke="#404040" stroke-width="2.1"/></g></svg>
<div style="left:881px;top:43px;width:2px;height:1px;background:#c6c6c9"></div>
<div style="left:881px;top:71px;width:2px;height:1px;background:#c6c6c9"></div>
<div style="left:881px;top:99px;width:2px;height:1px;background:#c6c6c9"></div>
<div style="left:0px;top:128px;width:1920px;height:27px;background:#fbfbfe"></div>
<div style="left:0px;top:127px;width:1920px;height:1px;background:#cdcdd0"></div>
<div style="left:1919px;top:128px;width:1px;height:27px;background:#8a8a8a"></div>
<div style="left:122px;top:129px;width:1773px;height:26px;background:#d7e3fb"></div>
<div style="left:10px;top:128px;width:1px;height:27px;background:#c9c9cc"></div>
<div style="left:12px;top:129px;width:27px;height:26px;background:#e4ecfc;border-right:1px solid #a9b3cb;border-bottom:1px solid #a9b3cb;border-top:1px solid #f4f7fe;border-left:1px solid #f4f7fe"></div>
<svg style="left:12px;top:129px" width="27" height="26" viewBox="12 129 27 26"><path d="M19.6 134.6 H33.6 L26.6 146.2 Z" fill="#6ad66a" stroke="#151515" stroke-width="1.1" stroke-linejoin="miter"/></svg>
<div style="left:128px;top:147px;width:1762px;height:1px;background:#c4c4c9"></div>
<div style="left:128px;top:148px;width:1762px;height:1px;background:#a6a6a6"></div>
<div style="left:128px;top:149px;width:1762px;height:1px;background:#b6b6ba"></div>
<svg style="left:118px;top:143px" width="14" height="13" viewBox="118 143 14 13"><path d="M122.5 149 L128.5 144 V154.5 Z" fill="#c9c9c9" stroke="#8a8a8a" stroke-width="0.8"/></svg>
<svg style="left:1884px;top:141px" width="16" height="15" viewBox="1884 141 16 15"><path d="M1894 149 L1888.3 143.4 V154.6 Z" fill="#c9c9c9" stroke="#8a8a8a" stroke-width="0.8"/><path d="M1894.5 142.5 V155" stroke="#8a8a8a" stroke-width="0.9"/></svg>
<div style="left:50px;top:152px;width:1px;height:3px;background:#000"></div>
<div style="left:123px;top:150px;width:1px;height:5px;background:#000"></div>
<div style="left:196px;top:152px;width:1px;height:3px;background:#000"></div>
<div style="left:268px;top:152px;width:1px;height:3px;background:#000"></div>
<div style="left:341px;top:150px;width:1px;height:5px;background:#000"></div>
<div style="left:413px;top:152px;width:1px;height:3px;background:#000"></div>
<div style="left:486px;top:152px;width:1px;height:3px;background:#000"></div>
<div style="left:558px;top:150px;width:1px;height:5px;background:#000"></div>
<div style="left:631px;top:152px;width:1px;height:3px;background:#000"></div>
<div style="left:703px;top:152px;width:1px;height:3px;background:#000"></div>
<div style="left:776px;top:150px;width:1px;height:5px;background:#000"></div>
<div style="left:848px;top:152px;width:1px;height:3px;background:#000"></div>
<div style="left:921px;top:152px;width:1px;height:3px;background:#000"></div>
<div style="left:994px;top:150px;width:1px;height:5px;background:#000"></div>
<div style="left:1066px;top:152px;width:1px;height:3px;background:#000"></div>
<div style="left:1139px;top:152px;width:1px;height:3px;background:#000"></div>
<div style="left:1211px;top:150px;width:1px;height:5px;background:#000"></div>
<div style="left:1284px;top:152px;width:1px;height:3px;background:#000"></div>
<div style="left:1356px;top:152px;width:1px;height:3px;background:#000"></div>
<div style="left:1429px;top:150px;width:1px;height:5px;background:#000"></div>
<div style="left:1501px;top:152px;width:1px;height:3px;background:#000"></div>
<div style="left:1574px;top:152px;width:1px;height:3px;background:#000"></div>
<div style="left:1647px;top:150px;width:1px;height:5px;background:#000"></div>
<div style="left:1719px;top:152px;width:1px;height:3px;background:#000"></div>
<div style="left:1792px;top:152px;width:1px;height:3px;background:#000"></div>
<div style="left:1864px;top:150px;width:1px;height:5px;background:#000"></div>
<span style="left:111.8px;top:136.04px;font-size:12px;line-height:12px;color:#000;font-weight:bold;">0:00</span>
<span style="left:326.1px;top:136.04px;font-size:12px;line-height:12px;color:#000;font-weight:bold;">15:00</span>
<span style="left:543.8px;top:136.04px;font-size:12px;line-height:12px;color:#000;font-weight:bold;">30:00</span>
<span style="left:761.4px;top:136.04px;font-size:12px;line-height:12px;color:#000;font-weight:bold;">45:00</span>
<span style="left:974.1px;top:136.04px;font-size:12px;line-height:12px;color:#000;font-weight:bold;">1:00:00</span>
<span style="left:1191.8px;top:136.04px;font-size:12px;line-height:12px;color:#000;font-weight:bold;">1:15:00</span>
<span style="left:1409.4px;top:136.04px;font-size:12px;line-height:12px;color:#000;font-weight:bold;">1:30:00</span>
<span style="left:1627.0px;top:136.04px;font-size:12px;line-height:12px;color:#000;font-weight:bold;">1:45:00</span>
<span style="left:1844.2px;top:136.04px;font-size:12px;line-height:12px;color:#000;font-weight:bold;">2:00:00</span>
<div style="left:0px;top:155px;width:1920px;height:2px;background:#1c1c1c"></div>
<div style="left:0px;top:155px;width:1920px;height:1px;background:#8c8c8c"></div>
<div style="left:0px;top:157px;width:1903px;height:786px;background:#646688"></div>
<div style="left:1903px;top:157px;width:17px;height:786px;background:#f0f0f0"></div>
<div style="left:1904px;top:174px;width:15px;height:751px;background:#cdcdcd"></div>
<svg style="left:1903px;top:157px" width="17" height="786" viewBox="0 0 17 786"><path d="M5 11.5 L8.5 8 L12 11.5" fill="none" stroke="#505050" stroke-width="1.8"/><path d="M5 776 L8.5 779.5 L12 776" fill="none" stroke="#505050" stroke-width="1.8"/></svg>
<div style="left:4px;top:161px;width:1895px;height:122px;background:#000"></div>
<div style="left:5px;top:162px;width:96px;height:119px;background:#d3e0fb"></div>
<div style="left:5px;top:162px;width:17px;height:18px;background:#cdd9f1;border-top:1px solid #eef2fc;border-left:1px solid #eef2fc;border-right:1px solid #9aa1b5;border-bottom:1px solid #9aa1b5"></div>
<svg style="left:5px;top:162px" width="17" height="18" viewBox="0 0 17 18"><path d="M5.6 5.4 L12.4 12.2 M12.4 5.4 L5.6 12.2" stroke="#000" stroke-width="1.3"/></svg>
<div style="left:23px;top:162px;width:77px;height:18px;background:#cdd9f1;border-top:1px solid #eef2fc;border-left:1px solid #eef2fc;border-right:1px solid #9aa1b5;border-bottom:1px solid #9aa1b5"></div>
<span style="left:26px;top:165.69px;font-size:11px;line-height:11px;color:#000;font-weight:normal;letter-spacing:-0.071px;">4 Vinyl Mix</span>
<svg style="left:86px;top:167px" width="12" height="8" viewBox="0 0 12 8"><path d="M0.6 0.8 H11.4 L6 6.6 Z" fill="#000"/></svg>
<div style="left:5px;top:180px;width:47px;height:18px;background:#cdd9f1;border-top:1px solid #eef2fc;border-left:1px solid #eef2fc;border-right:1px solid #9aa1b5;border-bottom:1px solid #9aa1b5"></div>
<span style="left:16.8px;top:183.89px;font-size:11px;line-height:11px;color:#000;font-weight:normal;letter-spacing:-0.317px;">Mute</span>
<div style="left:53px;top:180px;width:47px;height:18px;background:#cdd9f1;border-top:1px solid #eef2fc;border-left:1px solid #eef2fc;border-right:1px solid #9aa1b5;border-bottom:1px solid #9aa1b5"></div>
<span style="left:65.8px;top:183.89px;font-size:11px;line-height:11px;color:#000;font-weight:normal;letter-spacing:-0.258px;">Solo</span>
<div style="left:100px;top:198px;width:1px;height:83px;background:#000"></div>
<div style="left:100px;top:162px;width:1px;height:36px;background:#9aa1b5"></div>
<div style="left:5px;top:263px;width:17px;height:18px;background:#cdd9f1;border-top:1px solid #eef2fc;border-left:1px solid #eef2fc;border-right:1px solid #9aa1b5;border-bottom:1px solid #9aa1b5"></div>
<svg style="left:5px;top:263px" width="17" height="18" viewBox="0 0 17 18"><path d="M3.6 11.6 H14.2 L8.9 5.6 Z" fill="#000"/></svg>
<div style="left:23px;top:263px;width:59px;height:18px;background:#cdd9f1;border-top:1px solid #eef2fc;border-left:1px solid #eef2fc;border-right:1px solid #9aa1b5;border-bottom:1px solid #9aa1b5"><span style="left:2px;top:2.4px;font-size:11px;line-height:12px;letter-spacing:0.25px;color:#000">Auswählen</span></div>
<div style="left:16px;top:215px;width:76px;height:2px;background:#a3a3a3"></div>
<div style="left:15px;top:211px;width:1px;height:4px;background:rgba(255,255,255,0.85)"></div>
<div style="left:16px;top:211px;width:1px;height:4px;background:#b4b4b4"></div>
<div style="left:24px;top:212px;width:1px;height:3px;background:rgba(255,255,255,0.85)"></div>
<div style="left:25px;top:212px;width:1px;height:3px;background:#b4b4b4"></div>
<div style="left:34px;top:212px;width:1px;height:3px;background:rgba(255,255,255,0.85)"></div>
<div style="left:35px;top:212px;width:1px;height:3px;background:#b4b4b4"></div>
<div style="left:43px;top:212px;width:1px;height:3px;background:rgba(255,255,255,0.85)"></div>
<div style="left:44px;top:212px;width:1px;height:3px;background:#b4b4b4"></div>
<div style="left:53px;top:212px;width:1px;height:3px;background:rgba(255,255,255,0.85)"></div>
<div style="left:54px;top:212px;width:1px;height:3px;background:#b4b4b4"></div>
<div style="left:62px;top:212px;width:1px;height:3px;background:rgba(255,255,255,0.85)"></div>
<div style="left:63px;top:212px;width:1px;height:3px;background:#b4b4b4"></div>
<div style="left:71px;top:212px;width:1px;height:3px;background:rgba(255,255,255,0.85)"></div>
<div style="left:72px;top:212px;width:1px;height:3px;background:#b4b4b4"></div>
<div style="left:81px;top:212px;width:1px;height:3px;background:rgba(255,255,255,0.85)"></div>
<div style="left:82px;top:212px;width:1px;height:3px;background:#b4b4b4"></div>
<div style="left:90px;top:211px;width:1px;height:4px;background:rgba(255,255,255,0.85)"></div>
<div style="left:91px;top:211px;width:1px;height:4px;background:#b4b4b4"></div>
<div style="left:47.9px;top:209.9px;width:10.2px;height:11.2px;border-radius:50%;background:#4e54ec"></div>
<div style="left:51.0px;top:213.6px;width:4.0px;height:4.2px;border-radius:50%;background:linear-gradient(#f0f0f4,#b0b0b8 50%,#b8b8c4)"></div>
<div style="left:16px;top:205px;width:4px;height:1px;background:#000"></div>
<div style="left:84px;top:205px;width:5px;height:1px;background:#000"></div>
<div style="left:86px;top:203px;width:1px;height:5px;background:#000"></div>
<div style="left:16px;top:245px;width:76px;height:2px;background:#a3a3a3"></div>
<div style="left:15px;top:241px;width:1px;height:4px;background:rgba(255,255,255,0.85)"></div>
<div style="left:16px;top:241px;width:1px;height:4px;background:#b4b4b4"></div>
<div style="left:24px;top:242px;width:1px;height:3px;background:rgba(255,255,255,0.85)"></div>
<div style="left:25px;top:242px;width:1px;height:3px;background:#b4b4b4"></div>
<div style="left:34px;top:242px;width:1px;height:3px;background:rgba(255,255,255,0.85)"></div>
<div style="left:35px;top:242px;width:1px;height:3px;background:#b4b4b4"></div>
<div style="left:43px;top:242px;width:1px;height:3px;background:rgba(255,255,255,0.85)"></div>
<div style="left:44px;top:242px;width:1px;height:3px;background:#b4b4b4"></div>
<div style="left:53px;top:242px;width:1px;height:3px;background:rgba(255,255,255,0.85)"></div>
<div style="left:54px;top:242px;width:1px;height:3px;background:#b4b4b4"></div>
<div style="left:62px;top:242px;width:1px;height:3px;background:rgba(255,255,255,0.85)"></div>
<div style="left:63px;top:242px;width:1px;height:3px;background:#b4b4b4"></div>
<div style="left:71px;top:242px;width:1px;height:3px;background:rgba(255,255,255,0.85)"></div>
<div style="left:72px;top:242px;width:1px;height:3px;background:#b4b4b4"></div>
<div style="left:81px;top:242px;width:1px;height:3px;background:rgba(255,255,255,0.85)"></div>
<div style="left:82px;top:242px;width:1px;height:3px;background:#b4b4b4"></div>
<div style="left:90px;top:241px;width:1px;height:4px;background:rgba(255,255,255,0.85)"></div>
<div style="left:91px;top:241px;width:1px;height:4px;background:#b4b4b4"></div>
<div style="left:47.9px;top:239.9px;width:10.2px;height:11.2px;border-radius:50%;background:#4e54ec"></div>
<div style="left:51.0px;top:243.6px;width:4.0px;height:4.2px;border-radius:50%;background:linear-gradient(#f0f0f4,#b0b0b8 50%,#b8b8c4)"></div>
<span style="left:15.8px;top:229.76px;font-size:9.5px;line-height:9.5px;color:#000;font-weight:normal;">L</span>
<span style="left:82px;top:229.76px;font-size:9.5px;line-height:9.5px;color:#000;font-weight:normal;">R</span>
<div style="left:101px;top:162px;width:20px;height:119px;background:#d6e2fb"></div>
<div style="left:101px;top:218px;width:20px;height:7px;background:#d6e2fb"></div>
<div style="left:101px;top:162px;width:21px;height:56px;background:#d6e2fb"></div>
<span style="left:109.3px;top:163.64px;font-size:12px;line-height:12px;color:#000;font-weight:normal;">1</span>
<span style="left:109px;top:184.44px;font-size:12px;line-height:12px;color:#000;font-weight:normal;">0</span>
<span style="left:105px;top:203.64px;font-size:12px;line-height:12px;color:#000;font-weight:normal;">-1</span>
<div style="left:116px;top:189px;width:5px;height:2px;background:#000"></div>
<div style="left:101px;top:225px;width:21px;height:56px;background:#d6e2fb"></div>
<span style="left:109.3px;top:226.64px;font-size:12px;line-height:12px;color:#000;font-weight:normal;">1</span>
<span style="left:109px;top:247.44px;font-size:12px;line-height:12px;color:#000;font-weight:normal;">0</span>
<span style="left:105px;top:266.64px;font-size:12px;line-height:12px;color:#000;font-weight:normal;">-1</span>
<div style="left:116px;top:252px;width:5px;height:2px;background:#000"></div>
<div style="left:119px;top:280px;width:2px;height:1px;background:#000"></div>
<div style="left:121px;top:162px;width:1px;height:56px;background:#909090"></div>
<div style="left:121px;top:225px;width:1px;height:56px;background:#909090"></div>
<div style="left:122px;top:162px;width:1775px;height:56px;background:#e9f0fe"></div>
<div style="left:122px;top:225px;width:1775px;height:56px;background:#e9f0fe"></div>
<div style="left:121px;top:219px;width:1778px;height:5px;background:#646688"></div>
<div style="left:101px;top:218px;width:20px;height:1px;background:#8c8c8c"></div>
<div style="left:101px;top:224px;width:20px;height:1px;background:#f4f8ff"></div>
<div style="left:101px;top:162px;width:1px;height:56px;background:#f4f8ff"></div>
<div style="left:101px;top:225px;width:1px;height:56px;background:#f4f8ff"></div>
<svg style="left:122px;top:162px" width="1775" height="56" viewBox="0 0 1775 56" shape-rendering="crispEdges"><path d="M0 28V22h1h1V21h1V24h1V19h1V23h1V19h1V21h1V22h1V20h1V22h1V20h1V24h1V19h1V20h1V19h1V24h1V21h1V23h1h1h1V20h1V23h1h1h1V19h1V23h1h1h1V15h1V23h1V21h1V22h1V24h1h1V23h1V22h1V25h1h1V24h1V23h1V24h1h1V23h1V24h1V22h1V23h1h1h1V25h1h1V24h1V25h1V23h1V25h1V23h1V24h1h1V23h1h1h1h1V24h1V23h1V21h1V25h1V23h1V22h1V25h1h1V24h1h1h1V23h1V22h1V23h1h1V24h1h1V23h1V25h1V24h1V25h1h1V24h1h1h1V23h1V22h1V25h1V24h1V22h1V25h1V24h1V25h1V24h1h1h1V23h1h1V25h1h1V23h1h1h1V24h1V25h1V24h1V23h1V25h1h1V24h1V25h1h1V23h1h1V22h1V23h1h1h1V22h1V24h1V23h1V22h1V23h1V22h1V24h1V20h1h1V24h1V23h1V20h1V23h1h1h1h1V20h1V23h1V22h1V21h1V22h1V23h1h1V22h1h1h1h1h1V19h1V23h1V25h1V23h1V22h1h1V23h1V22h1h1V25h1V23h1V22h1V25h1V24h1h1V22h1h1V21h1V23h1V24h1V23h1V20h1V23h1h1V22h1V24h1h1h1V23h1V22h1h1h1h1h1V24h1V25h1V18h1V25h1V24h1h1h1h1V23h1V25h1V23h1V19h1V22h1V24h1V23h1V21h1V25h1V23h1V22h1h1V23h1V24h1V23h1V25h1V18h1V17h1V23h1V24h1h1V22h1h1V23h1V22h1V24h1V22h1h1V25h1V19h1V24h1V22h1V17h1h1V22h1V18h1V19h1h1V21h1V22h1V20h1V18h1V22h1V19h1V23h1V20h1V21h1V22h1V20h1h1V19h1V20h1V19h1V18h1V20h1V21h1V19h1h1V23h1h1V22h1V19h1V21h1h1V14h1V22h1V21h1V23h1V19h1V22h1V19h1h1V20h1V19h1V20h1V24h1h1V23h1V22h1h1V21h1h1V23h1h1V19h1V22h1h1V21h1h1V23h1h1V24h1V21h1h1V24h1V23h1V21h1V20h1V23h1h1V15h1V20h1h1V24h1V22h1V24h1V23h1V22h1V15h1V23h1V21h1V24h1V23h1h1V17h1V21h1h1h1h1V19h1V21h1h1V18h1V22h1V19h1V23h1V21h1V22h1V23h1V18h1V22h1V18h1V16h1V21h1V22h1V21h1V19h1V16h1V20h1V23h1V22h1V20h1V18h1V21h1V19h1V23h1V18h1V14h1V21h1V20h1V22h1h1V25h1V24h1h1V21h1V24h1h1h1V22h1V24h1V23h1V22h1V23h1h1h1V16h1V24h1h1h1h1V22h1h1h1V24h1V23h1V22h1V25h1V24h1V17h1V24h1h1V25h1V24h1V25h1V24h1h1V23h1h1V24h1V25h1h1V26h1V23h1V25h1h1V23h1V24h1h1V23h1V22h1h1V23h1h1V25h1V23h1h1h1V22h1V23h1V24h1h1V23h1h1V25h1V23h1V25h1V26h1V24h1V22h1V24h1V22h1V24h1h1V23h1V22h1h1V21h1h1V23h1h1h1V24h1V23h1V21h1V23h1h1V24h1h1h1V25h1V24h1V18h1V24h1V23h1h1V25h1h1h1h1h1V21h1V25h1h1h1V24h1h1V23h1V22h1V24h1h1V23h1V25h1V20h1V25h1V23h1V24h1V23h1V24h1V23h1V25h1V24h1V25h1V24h1h1V25h1h1V23h1V25h1V23h1V18h1V24h1V23h1h1h1h1V26h1V24h1h1V20h1V21h1h1V20h1V22h1V23h1h1V22h1V21h1V20h1V15h1V22h1V19h1V20h1V24h1V22h1V20h1V23h1V20h1V21h1V23h1h1h1h1V20h1V22h1V21h1V24h1V23h1V20h1V23h1V21h1V22h1h1V24h1V20h1h1h1V21h1V18h1V22h1V19h1V24h1V21h1V18h1V24h1V21h1V24h1V20h1V24h1V21h1V24h1h1h1V22h1h1V19h1V22h1h1h1h1V20h1V24h1V19h1h1V23h1h1V20h1V23h1h1V24h1V21h1V23h1V20h1V22h1h1V25h1V17h1V23h1V20h1h1h1V17h1V20h1V17h1V20h1V18h1V17h1V21h1V14h1V19h1V20h1V21h1V19h1V21h1h1h1V20h1V21h1V20h1V18h1V21h1V24h1V20h1h1V21h1V20h1V21h1V24h1V21h1V22h1V20h1V19h1h1V17h1V20h1V21h1V17h1V21h1V20h1V19h1h1V18h1V21h1V18h1V20h1V18h1V19h1V20h1V14h1V21h1h1h1V23h1V21h1V22h1h1V21h1V22h1h1h1V21h1V22h1V23h1V26h1V24h1V21h1V24h1V22h1V23h1V22h1V24h1h1h1V23h1h1V24h1V22h1V23h1V24h1h1V21h1V22h1V24h1V21h1V23h1V21h1V24h1V23h1V24h1V21h1V20h1V23h1h1V21h1V22h1V24h1h1h1V22h1V23h1V24h1h1V22h1V24h1h1V23h1V24h1V22h1h1h1h1V23h1h1V25h1V23h1V18h1V22h1V20h1V18h1V23h1h1V22h1V20h1V21h1h1V24h1h1V20h1V19h1V23h1h1V21h1V22h1V20h1h1h1V23h1V24h1V23h1V20h1V24h1V26h1h1V24h1h1h1h1V22h1h1V24h1h1V23h1h1V22h1V23h1h1V24h1h1V22h1V23h1h1h1V24h1V23h1V22h1V24h1V22h1h1V23h1h1V24h1V23h1h1h1V24h1V25h1V22h1h1V24h1h1V22h1V23h1h1V25h1V23h1V17h1V22h1V24h1V22h1V24h1V23h1V24h1V23h1V24h1V21h1V23h1h1h1V21h1V23h1V24h1V22h1V23h1h1V21h1V23h1V24h1V23h1V21h1V24h1V25h1V21h1V23h1V14h1V23h1V21h1V22h1h1V17h1V19h1h1V20h1V19h1V23h1V21h1V19h1V23h1h1V20h1V23h1V26h1h1V25h1V23h1V25h1V23h1V25h1V24h1h1V21h1V25h1V26h1h1V23h1h1h1V24h1V23h1V22h1V23h1h1V19h1V22h1V24h1V25h1V24h1V23h1V24h1V25h1V22h1V25h1V23h1V22h1V23h1h1h1V25h1h1V24h1V25h1V23h1h1V25h1V23h1V25h1V24h1V22h1V25h1V23h1V25h1V23h1h1h1h1V24h1V25h1V23h1h1h1V25h1V24h1h1V23h1V24h1h1h1V16h1V22h1h1h1h1h1V23h1V21h1h1V25h1V23h1V24h1V23h1V24h1h1V23h1V24h1V22h1V26h1V23h1V24h1h1V25h1h1V23h1V25h1h1V19h1V23h1h1h1V24h1h1h1V25h1h1V23h1V25h1V22h1V23h1V24h1V22h1h1V21h1V20h1V23h1h1h1V25h1V23h1h1V24h1h1h1V23h1V18h1V22h1V24h1V22h1V20h1V23h1V22h1h1V23h1V21h1V24h1V21h1h1V22h1h1V24h1V20h1V23h1V18h1V20h1V22h1V19h1V25h1V21h1V24h1V22h1V23h1V24h1V25h1V24h1V22h1V23h1h1V18h1V23h1V22h1V24h1h1h1h1V23h1V24h1h1h1V22h1h1V21h1V19h1V21h1V22h1V24h1V21h1V23h1V22h1V20h1V22h1V23h1h1V24h1V19h1V25h1V23h1V22h1V23h1V24h1V25h1V24h1V23h1V25h1h1V24h1V22h1h1V23h1V24h1V23h1h1h1V22h1V25h1h1V23h1V22h1V23h1V22h1V24h1V23h1V22h1h1V23h1V25h1V22h1V23h1h1V25h1V23h1V21h1V26h1V23h1h1V24h1V25h1h1V22h1h1V23h1V21h1V23h1V22h1V21h1h1h1h1V23h1V20h1V22h1V20h1V24h1V23h1V25h1V24h1V23h1V22h1V21h1V22h1V23h1V24h1V23h1h1V24h1V23h1V24h1V25h1V24h1V22h1h1V24h1V23h1V22h1V24h1V25h1V23h1V21h1h1V23h1V17h1V23h1V21h1V15h1V23h1h1V21h1V23h1h1V21h1V20h1V19h1V21h1V22h1V23h1V24h1V22h1V20h1V21h1V22h1V21h1V22h1V24h1h1h1V22h1V24h1V23h1V20h1V15h1V24h1V21h1V16h1V23h1V21h1V23h1h1V24h1V21h1V20h1V22h1V21h1V15h1V21h1h1V24h1V26h1V24h1h1V19h1V25h1V24h1V23h1V24h1V23h1V22h1V23h1h1V24h1V26h1V21h1h1V24h1V23h1V19h1V20h1V21h1h1V20h1V23h1V22h1V21h1V22h1V21h1V23h1V21h1V19h1V20h1V22h1V23h1h1V24h1V20h1V21h1V19h1V20h1V24h1V21h1V20h1V23h1V21h1V24h1V21h1h1h1V20h1V15h1V22h1V21h1V22h1V20h1V21h1V23h1h1V22h1V20h1V24h1V21h1h1V23h1h1h1V15h1V22h1V24h1V23h1V21h1h1V22h1V21h1V24h1V21h1V24h1V23h1V20h1V24h1V22h1V24h1V20h1V21h1V20h1h1V18h1V21h1V23h1V18h1V22h1V15h1V23h1V22h1h1V17h1h1V23h1V17h1V20h1V19h1V18h1V21h1h1V9h1V21h1V22h1V23h1V21h1V23h1V19h1V18h1V20h1V14h1V23h1V22h1V20h1h1V22h1V19h1V20h1V23h1h1V21h1h1V19h1V22h1V23h1V20h1V23h1V24h1V23h1V22h1V19h1V21h1V19h1V22h1V18h1V21h1V22h1V20h1V22h1V18h1V21h1V23h1V22h1V21h1V22h1V24h1h1h1V22h1V18h1h1V19h1h1V18h1V21h1V17h1V21h1V18h1V21h1V17h1V19h1V14h1V19h1V20h1V22h1V20h1V21h1V19h1V20h1V21h1V19h1V15h1V19h1V20h1V21h1V22h1V23h1V22h1h1V21h1V23h1V20h1V21h1V24h1V25h1V23h1V25h1V24h1V25h1V24h1V23h1V25h1V23h1V24h1V23h1h1V25h1V23h1V24h1h1V23h1V25h1V23h1h1V24h1h1h1V22h1V24h1h1h1V25h1V24h1V23h1V24h1h1h1V25h1h1h1h1V22h1V25h1V24h1V25h1V23h1V25h1V24h1V23h1h1V25h1V22h1V24h1V23h1V24h1V23h1V24h1h1V25h1V24h1V25h1V23h1V24h1V25h1V24h1V23h1V22h1V24h1h1V23h1V25h1V24h1V23h1V24h1V23h1V22h1V18h1V19h1V18h1V21h1V18h1V22h1V20h1V23h1V20h1V21h1h1V19h1h1V20h1V22h1V20h1V22h1V20h1V21h1V15h1h1V20h1V21h1V22h1V21h1V23h1V20h1h1V21h1V24h1V21h1V22h1h1V19h1V24h1h1V20h1V22h1V23h1V21h1h1V20h1V21h1V22h1V21h1h1V24h1V21h1V22h1V21h1V20h1V16h1V22h1V23h1V20h1h1V21h1V15h1V23h1h1V20h1V23h1V22h1h1V19h1V20h1V22h1h1h1V21h1V23h1V24h1V22h1V24h1h1h1h1V23h1V25h1V22h1V23h1V20h1V23h1V22h1V21h1V23h1V22h1V20h1V19h1V23h1V24h1V20h1h1V21h1V26h1h1V25h1V22h1V23h1V22h1V21h1V22h1V23h1V22h1V24h1V18h1V23h1V24h1V22h1V20h1V17h1V23h1V21h1V26h1h1h1V23h1V22h1V24h1V23h1h1V22h1V23h1V21h1V23h1V22h1V21h1h1V23h1V25h1V24h1V23h1V22h1V24h1V19h1V22h1V19h1V25h1V23h1V25h1h1V23h1V20h1V23h1h1V18h1V25h1h1V23h1V24h1V25h1h1h1V23h1V25h1V24h1V25h1V23h1V24h1V23h1V24h1h1V27h1h1h1V22h1V24h1V25h1V22h1V23h1V24h1V19h1V21h1V24h1V23h1V24h1V25h1V24h1V25h1h1V23h1V24h1h1V23h1V25h1h1h1V27h1V25h1h1V23h1V17h1V21h1V22h1V24h1V18h1V21h1h1V24h1V22h1V21h1V24h1V21h1h1V24h1h1V22h1V23h1V24h1V23h1V24h1V21h1V22h1V21h1h1V24h1V21h1V24h1V22h1V24h1V21h1V22h1V23h1V20h1V21h1V20h1V24h1V20h1V21h1h1h1V15h1V21h1V23h1V24h1V27h1V26h1h1V16h1V22h1V24h1V22h1V24h1V21h1V24h1V21h1V22h1V24h1h1h1h1h1h1V23h1V20h1V22h1h1V23h1V25h1h1h1V26h1h1h1h1h1h1V27h1V26h1h1V21h1V27h1h1h1h1h1h1h1h1h1h1h1h1h1h1h1h1h1h1h1h1h1h1h1h1h1h1h1h1h1h1h1h1h1h1h1h1h1h1h1h1h1h1h1h1h1h1h1h1h1h1h1h1h1h1h1h1h1h1h1h1h1h1h1h1h1h1h1h1h1h1h1h1h1h1h1h1h1h1h1h1h1h1h1h1h1h1h1h1h1h1h1h1h1h1h1h1h1h1h1h1h1h1h1h1h1h1h1h1h1h1h1h1h1h1h1h1h1h1h1h1h1h1h1h1h1h1h1h1h1h1h1h1h1h1h1h1h1h1h1h1h1h1h1V28V29h-1h-1h-1h-1h-1h-1h-1h-1h-1h-1h-1h-1h-1h-1h-1h-1h-1h-1h-1h-1h-1h-1h-1h-1h-1h-1h-1h-1h-1h-1h-1h-1h-1h-1h-1h-1h-1h-1h-1h-1h-1h-1h-1h-1h-1h-1h-1h-1h-1h-1h-1h-1h-1h-1h-1h-1h-1h-1h-1h-1h-1h-1h-1h-1h-1h-1h-1h-1h-1h-1h-1h-1h-1h-1h-1h-1h-1h-1h-1h-1h-1h-1h-1h-1h-1h-1h-1h-1h-1h-1h-1h-1h-1h-1h-1h-1h-1h-1h-1h-1h-1h-1h-1h-1h-1h-1h-1h-1h-1h-1h-1h-1h-1h-1h-1h-1h-1h-1h-1h-1h-1h-1h-1h-1h-1h-1h-1h-1h-1h-1h-1h-1h-1h-1h-1h-1h-1h-1h-1h-1h-1h-1h-1V35h-1V29h-1V30h-1V29h-1h-1V30h-1h-1V29h-1h-1V30h-1V31h-1V32h-1V34h-1V31h-1V34h-1V33h-1h-1h-1V32h-1V34h-1h-1h-1h-1V32h-1V33h-1V34h-1V33h-1V34h-1V35h-1V32h-1V35h-1V33h-1V40h-1V31h-1V30h-1V29h-1V31h-1V34h-1V33h-1V39h-1V35h-1V34h-1V35h-1h-1h-1V33h-1V34h-1V40h-1V35h-1V36h-1V35h-1V37h-1V34h-1V35h-1V34h-1h-1V33h-1V32h-1V33h-1V32h-1V33h-1V34h-1V32h-1V36h-1V34h-1V35h-1V32h-1h-1V33h-1V32h-1V34h-1V33h-1V35h-1h-1h-1V40h-1V34h-1V35h-1V33h-1V40h-1V35h-1V31h-1V30h-1h-1V33h-1h-1h-1h-1V31h-1h-1V32h-1V31h-1V33h-1V31h-1h-1V32h-1V31h-1V32h-1V38h-1V35h-1V32h-1V33h-1V34h-1V33h-1V35h-1V32h-1V30h-1h-1h-1V33h-1h-1V31h-1V33h-1h-1V31h-1V33h-1V32h-1V33h-1V32h-1V31h-1V33h-1V32h-1V31h-1h-1h-1V35h-1V33h-1V32h-1V35h-1V31h-1V33h-1V31h-1V34h-1h-1V38h-1V34h-1V35h-1V31h-1V32h-1V31h-1V33h-1V32h-1V31h-1V34h-1V33h-1V34h-1V32h-1V35h-1V32h-1h-1h-1V34h-1V31h-1V33h-1V34h-1V29h-1V30h-1h-1V34h-1V36h-1V40h-1V32h-1V37h-1V33h-1V36h-1V35h-1h-1V36h-1V37h-1V36h-1V33h-1V34h-1V33h-1h-1V30h-1V31h-1V30h-1V33h-1V34h-1V33h-1V36h-1V33h-1V36h-1h-1h-1V35h-1V37h-1V33h-1h-1V37h-1V34h-1V32h-1V30h-1V33h-1V34h-1V33h-1V32h-1V33h-1V32h-1V36h-1V35h-1h-1V36h-1h-1h-1V35h-1V33h-1V36h-1V33h-1h-1h-1h-1V35h-1V37h-1V32h-1V36h-1V34h-1V33h-1V32h-1V37h-1V41h-1V35h-1V36h-1V34h-1V36h-1V32h-1V34h-1V35h-1V32h-1V35h-1V33h-1V34h-1h-1V33h-1h-1V32h-1h-1V38h-1V31h-1V33h-1h-1V35h-1V34h-1V36h-1V33h-1V34h-1V33h-1h-1V32h-1V35h-1V41h-1V36h-1V32h-1V33h-1V37h-1h-1V32h-1V35h-1h-1V37h-1V35h-1V36h-1V34h-1V37h-1V34h-1h-1V38h-1V34h-1V36h-1h-1V35h-1V33h-1V36h-1V32h-1h-1h-1V31h-1h-1V32h-1V33h-1h-1h-1V34h-1V32h-1V34h-1V31h-1V32h-1h-1V31h-1V32h-1V31h-1h-1h-1V33h-1h-1V32h-1h-1V33h-1V31h-1V34h-1V32h-1h-1V33h-1V32h-1V31h-1V38h-1V32h-1V33h-1h-1V32h-1h-1V31h-1h-1V33h-1V32h-1V30h-1V31h-1V32h-1h-1V33h-1V32h-1h-1V33h-1V34h-1V32h-1V33h-1V32h-1V34h-1V31h-1V33h-1V31h-1V32h-1V34h-1V32h-1h-1h-1h-1V33h-1V32h-1h-1V33h-1V34h-1V30h-1V32h-1V33h-1h-1V35h-1V36h-1h-1V37h-1V33h-1V35h-1h-1V36h-1V34h-1V35h-1V33h-1h-1V37h-1V33h-1V34h-1V35h-1V37h-1V36h-1V37h-1V41h-1V36h-1V38h-1V35h-1V37h-1V35h-1V36h-1V38h-1V36h-1V33h-1V36h-1V39h-1V35h-1V37h-1V33h-1V36h-1V32h-1h-1V33h-1V37h-1V35h-1V34h-1V35h-1V38h-1V36h-1V35h-1V38h-1V33h-1V36h-1V35h-1V39h-1V38h-1V37h-1V35h-1V34h-1V33h-1V34h-1V35h-1V34h-1V41h-1V35h-1V34h-1V35h-1V37h-1V33h-1V37h-1V35h-1V37h-1V36h-1V35h-1V37h-1V42h-1V35h-1h-1V37h-1V38h-1h-1V35h-1V33h-1h-1V46h-1V37h-1V36h-1V34h-1V37h-1V33h-1V38h-1V36h-1V39h-1V37h-1V36h-1V35h-1h-1V40h-1V35h-1V37h-1V35h-1h-1V34h-1V37h-1V38h-1V34h-1h-1V32h-1h-1V35h-1V32h-1V35h-1V34h-1V35h-1h-1V36h-1V33h-1V32h-1h-1V34h-1V35h-1V34h-1V41h-1V35h-1V33h-1V34h-1h-1V32h-1h-1V33h-1V35h-1V34h-1V33h-1V35h-1V36h-1V34h-1V36h-1V35h-1V44h-1V33h-1V35h-1h-1V34h-1V35h-1V33h-1V35h-1V36h-1h-1V33h-1V32h-1V34h-1V35h-1V33h-1V36h-1V33h-1h-1h-1h-1V35h-1V34h-1V35h-1V32h-1V37h-1h-1V33h-1V35h-1V33h-1V34h-1V33h-1V35h-1V37h-1V33h-1V37h-1V31h-1V33h-1V32h-1h-1h-1V31h-1V33h-1h-1h-1h-1V31h-1V33h-1V34h-1h-1V30h-1V32h-1V34h-1h-1V36h-1V40h-1V37h-1V34h-1V36h-1V32h-1V36h-1V35h-1V33h-1h-1V32h-1V37h-1V35h-1h-1V40h-1V35h-1V36h-1V32h-1h-1V36h-1V34h-1V33h-1V34h-1V32h-1V35h-1V32h-1V36h-1V37h-1V33h-1V34h-1V35h-1V33h-1V35h-1V34h-1h-1h-1V36h-1h-1V37h-1V35h-1V41h-1V34h-1V36h-1V39h-1V33h-1V36h-1V32h-1h-1V31h-1V33h-1h-1V31h-1V32h-1h-1V33h-1h-1V32h-1h-1h-1V34h-1h-1h-1V32h-1V33h-1V35h-1V33h-1V35h-1V31h-1V33h-1h-1V35h-1V34h-1V36h-1V41h-1V36h-1V34h-1h-1V33h-1V37h-1V36h-1V34h-1h-1V35h-1V33h-1V34h-1V33h-1V31h-1V32h-1h-1V31h-1h-1V33h-1V36h-1V31h-1V32h-1V33h-1V32h-1h-1V33h-1V32h-1V35h-1V33h-1V34h-1V33h-1V31h-1V34h-1V33h-1V32h-1V33h-1h-1V32h-1V33h-1h-1V31h-1V33h-1V31h-1V33h-1h-1V32h-1h-1V31h-1V32h-1V31h-1V32h-1V33h-1V32h-1V34h-1V32h-1h-1V40h-1V34h-1V33h-1V34h-1V33h-1V40h-1V32h-1h-1V33h-1V34h-1h-1V33h-1V36h-1V33h-1V34h-1V32h-1V33h-1h-1V32h-1h-1h-1V34h-1V33h-1h-1h-1h-1V34h-1V32h-1V33h-1V35h-1V32h-1V34h-1V31h-1V32h-1V34h-1h-1h-1h-1V37h-1V33h-1V34h-1V38h-1V33h-1V35h-1V32h-1V33h-1V32h-1V35h-1V36h-1V34h-1V35h-1h-1V33h-1V32h-1V35h-1V40h-1V34h-1V32h-1V33h-1V32h-1V35h-1h-1V34h-1V33h-1h-1V31h-1V33h-1V31h-1V34h-1V32h-1V36h-1V35h-1V32h-1h-1V34h-1V35h-1V33h-1V31h-1V33h-1V30h-1V34h-1V33h-1V32h-1V33h-1V31h-1h-1V32h-1V34h-1V31h-1V33h-1h-1V32h-1V33h-1V32h-1h-1h-1V31h-1V33h-1V32h-1h-1V34h-1V33h-1V34h-1V33h-1V32h-1h-1V33h-1h-1V31h-1V34h-1V35h-1V34h-1V32h-1V33h-1V40h-1V32h-1V31h-1V33h-1h-1V31h-1h-1V33h-1h-1h-1h-1h-1V32h-1V33h-1h-1h-1V31h-1h-1V32h-1V31h-1V34h-1V32h-1V33h-1V34h-1V32h-1V31h-1h-1h-1V33h-1V32h-1h-1V33h-1h-1V32h-1V34h-1V32h-1V31h-1V32h-1V31h-1h-1V32h-1V33h-1V31h-1V33h-1h-1V34h-1V33h-1V31h-1h-1V34h-1V32h-1V33h-1V31h-1V32h-1h-1V31h-1V32h-1V33h-1h-1V32h-1V33h-1V32h-1V31h-1V33h-1h-1V32h-1V31h-1V32h-1V34h-1h-1V35h-1V34h-1V35h-1V34h-1V38h-1V37h-1V34h-1V37h-1V36h-1V34h-1V38h-1h-1V36h-1V42h-1V33h-1V32h-1V31h-1V34h-1V32h-1h-1V34h-1h-1h-1h-1h-1h-1h-1V32h-1V33h-1V32h-1V33h-1V32h-1V35h-1V34h-1h-1V35h-1h-1V32h-1V34h-1V35h-1V32h-1V36h-1V32h-1h-1V33h-1V31h-1h-1V32h-1V33h-1h-1V34h-1V32h-1V33h-1V34h-1V33h-1V34h-1V31h-1h-1V34h-1V35h-1V33h-1V31h-1V34h-1V33h-1V32h-1V33h-1V31h-1V32h-1h-1h-1V33h-1V32h-1h-1V35h-1h-1V34h-1V35h-1V33h-1V34h-1V31h-1V33h-1V32h-1V31h-1h-1h-1V30h-1V31h-1V32h-1h-1h-1V37h-1h-1V42h-1V34h-1V36h-1V34h-1V33h-1V36h-1V35h-1h-1V33h-1V32h-1V33h-1V34h-1V35h-1V34h-1V33h-1V37h-1h-1V34h-1V38h-1V39h-1V34h-1V32h-1V34h-1V31h-1h-1V32h-1h-1V33h-1V32h-1V33h-1V31h-1h-1V34h-1V31h-1V32h-1h-1V33h-1h-1V32h-1V33h-1V34h-1h-1V35h-1V34h-1V37h-1V35h-1V33h-1V35h-1h-1V32h-1V35h-1V32h-1V34h-1V31h-1V34h-1V32h-1V33h-1V31h-1V33h-1V32h-1V35h-1V33h-1V34h-1V33h-1h-1V32h-1V33h-1h-1h-1V40h-1V31h-1h-1V34h-1V35h-1V36h-1V35h-1V36h-1V34h-1h-1V35h-1V37h-1V35h-1V34h-1V36h-1V33h-1h-1V41h-1V37h-1V36h-1V33h-1V34h-1V37h-1V38h-1V34h-1V39h-1h-1V38h-1V36h-1V37h-1V35h-1V33h-1V39h-1V36h-1V34h-1V37h-1V33h-1V36h-1V33h-1V34h-1V36h-1V32h-1V37h-1V34h-1V35h-1V36h-1V41h-1V33h-1V36h-1h-1V34h-1V35h-1h-1V37h-1V33h-1V37h-1V36h-1V39h-1V37h-1V35h-1h-1V39h-1V38h-1V35h-1V37h-1h-1V40h-1V37h-1V32h-1V35h-1V34h-1h-1V33h-1V34h-1V32h-1V34h-1h-1V32h-1V36h-1V34h-1V35h-1V36h-1V37h-1V33h-1V35h-1V36h-1V37h-1V33h-1V34h-1h-1V35h-1V34h-1V37h-1V34h-1V33h-1V34h-1h-1V36h-1V34h-1V33h-1V35h-1V32h-1V41h-1V35h-1h-1V37h-1V36h-1h-1V33h-1V34h-1h-1V35h-1V34h-1V31h-1V32h-1h-1V36h-1V34h-1h-1V36h-1h-1V34h-1V33h-1h-1h-1V32h-1V36h-1V34h-1V35h-1h-1V33h-1h-1V35h-1V33h-1V34h-1V35h-1V39h-1V33h-1V35h-1h-1V34h-1V35h-1V36h-1V37h-1V33h-1V37h-1V38h-1V32h-1V35h-1V31h-1V32h-1V31h-1V32h-1V33h-1h-1V34h-1V31h-1V32h-1h-1V31h-1V32h-1V31h-1V33h-1V32h-1V31h-1h-1V38h-1V32h-1V31h-1V34h-1h-1h-1V35h-1V31h-1V33h-1V31h-1V33h-1V31h-1V32h-1V31h-1V32h-1V33h-1h-1V32h-1V39h-1V33h-1h-1V32h-1V34h-1V32h-1V33h-1h-1V31h-1V38h-1V33h-1h-1V32h-1V31h-1h-1V35h-1V32h-1V33h-1V35h-1V34h-1V35h-1h-1V33h-1V34h-1h-1V33h-1V34h-1V33h-1V34h-1h-1V35h-1V32h-1V34h-1V33h-1V32h-1h-1V31h-1V33h-1V31h-1V33h-1V31h-1V33h-1V32h-1V31h-1V32h-1h-1h-1V33h-1h-1V31h-1h-1V32h-1V31h-1V34h-1V33h-1V34h-1V32h-1V31h-1V32h-1V31h-1h-1V32h-1V31h-1h-1h-1V33h-1h-1V31h-1V33h-1V31h-1V34h-1h-1V37h-1V34h-1V32h-1V35h-1V32h-1V31h-1V32h-1V31h-1V32h-1h-1h-1V31h-1V33h-1V38h-1V32h-1V34h-1V32h-1V34h-1V33h-1V34h-1V32h-1V33h-1V34h-1V33h-1V32h-1h-1V31h-1V32h-1V34h-1V37h-1h-1V36h-1V38h-1V33h-1V35h-1h-1h-1V37h-1V38h-1V36h-1V35h-1h-1V37h-1V36h-1V35h-1V37h-1V34h-1V39h-1V34h-1V37h-1V34h-1V36h-1V35h-1h-1V34h-1h-1V35h-1V37h-1h-1V35h-1V37h-1V34h-1V39h-1V33h-1V34h-1V37h-1V34h-1h-1V33h-1V34h-1V35h-1V40h-1V36h-1V33h-1V36h-1V33h-1h-1h-1V32h-1V40h-1V33h-1V35h-1V38h-1V35h-1V36h-1V35h-1V37h-1V32h-1V33h-1V34h-1V31h-1V34h-1h-1V35h-1V36h-1V32h-1V35h-1V34h-1h-1V35h-1V36h-1V34h-1h-1V32h-1h-1V37h-1h-1V41h-1V38h-1V34h-1V37h-1V38h-1V37h-1V34h-1V33h-1V41h-1V37h-1h-1V38h-1V35h-1V36h-1V35h-1V34h-1V38h-1h-1h-1h-1V37h-1V35h-1V34h-1V35h-1V34h-1V35h-1V36h-1V34h-1h-1h-1V38h-1V36h-1V35h-1V39h-1V36h-1V38h-1V35h-1V39h-1V38h-1V37h-1h-1V36h-1V34h-1V36h-1V30h-1V34h-1V33h-1V32h-1V33h-1V34h-1V31h-1V33h-1V32h-1h-1h-1V40h-1V38h-1V32h-1V33h-1V32h-1V33h-1V31h-1V32h-1V33h-1V32h-1V40h-1V35h-1V32h-1V33h-1V34h-1V33h-1V34h-1h-1h-1V33h-1V32h-1V34h-1V31h-1V35h-1V32h-1V33h-1V35h-1V32h-1V33h-1V34h-1V32h-1V33h-1V32h-1V34h-1h-1h-1h-1V32h-1V34h-1V32h-1V33h-1h-1V34h-1V32h-1V34h-1V31h-1V32h-1h-1V31h-1V33h-1V34h-1V35h-1h-1V32h-1V34h-1h-1V33h-1V34h-1V32h-1V35h-1V32h-1V33h-1h-1V32h-1V33h-1V32h-1h-1V33h-1V35h-1h-1V34h-1V36h-1V35h-1V32h-1V35h-1V33h-1V34h-1h-1V36h-1V32h-1V35h-1V34h-1h-1V30h-1V33h-1h-1V34h-1V36h-1V32h-1V33h-1h-1h-1V32h-1V33h-1V31h-1V32h-1V31h-1V32h-1V33h-1h-1V31h-1h-1V32h-1V31h-1V35h-1V32h-1V33h-1h-1V31h-1h-1V32h-1V31h-1V32h-1h-1V33h-1V31h-1h-1V32h-1h-1V34h-1V31h-1V33h-1V31h-1h-1V33h-1V31h-1V32h-1h-1h-1V33h-1h-1V31h-1V33h-1V32h-1V34h-1h-1V32h-1V31h-1V32h-1h-1V31h-1V33h-1V32h-1V34h-1V33h-1V32h-1V31h-1V35h-1V31h-1V32h-1h-1V31h-1V33h-1V32h-1h-1h-1V33h-1V31h-1h-1V32h-1V37h-1V32h-1V33h-1V32h-1h-1h-1h-1V33h-1V35h-1V34h-1V35h-1V34h-1V35h-1V33h-1h-1h-1V39h-1V35h-1V36h-1h-1V33h-1h-1V34h-1V35h-1V32h-1V33h-1V35h-1V36h-1V33h-1V35h-1V34h-1V32h-1V36h-1V33h-1V34h-1V33h-1V34h-1V32h-1V36h-1V33h-1V35h-1V37h-1V32h-1V37h-1V36h-1h-1V35h-1V34h-1Z" fill="#3c3cce"/><path d="M0 28V26h1h1h1h1h1h1h1h1h1h1h1h1h1h1h1h1h1h1h1h1h1h1h1h1h1h1h1h1h1h1h1h1h1h1h1h1h1h1h1h1h1V27h1h1h1h1h1h1h1h1h1h1h1h1h1h1h1h1h1h1h1h1h1h1h1h1h1h1h1h1V26h1h1h1h1h1h1V27h1h1h1h1h1h1h1h1h1h1h1h1h1h1h1h1h1h1h1h1h1h1h1h1h1h1h1h1h1h1h1h1h1h1h1h1h1h1h1h1h1h1h1h1h1h1V26h1h1h1h1h1h1h1h1h1h1h1h1h1h1h1h1h1h1h1h1h1h1V27h1h1h1h1h1V26h1h1h1h1h1h1h1h1h1h1h1h1h1h1h1h1h1h1h1h1h1h1h1h1h1h1h1h1h1h1h1h1h1h1h1h1h1h1h1h1h1h1h1h1h1h1h1h1h1h1h1h1h1h1h1h1h1h1h1h1h1h1h1h1h1h1h1h1h1h1h1V25h1h1h1h1h1h1h1h1h1h1h1V26h1h1h1h1h1h1h1h1V25h1h1h1h1h1h1h1h1h1h1h1h1h1h1V26h1V25h1h1h1h1h1h1h1h1h1h1h1h1h1V26h1h1h1h1h1h1h1h1h1h1h1h1h1h1h1h1h1h1h1h1h1h1h1h1h1h1h1h1h1h1h1h1h1h1h1h1h1h1h1h1h1h1h1h1h1h1h1h1h1h1h1h1h1h1V25h1h1h1h1h1h1h1h1h1h1h1h1h1h1h1h1h1h1h1h1h1h1V26h1h1h1h1h1h1h1h1h1h1h1h1h1h1h1h1h1h1h1h1h1h1h1h1h1h1h1h1h1h1h1V27h1h1h1h1h1h1h1h1h1h1h1h1V26h1h1h1h1h1h1V27h1h1h1h1h1h1h1h1h1h1h1h1h1h1h1h1h1V26h1h1h1h1h1h1h1h1h1h1h1h1h1h1h1h1h1h1h1h1V27h1h1h1h1h1h1h1h1h1h1h1h1h1h1h1h1h1h1h1h1h1V26h1h1h1V27h1h1h1h1h1h1h1h1h1h1h1h1h1h1h1h1h1h1h1h1h1h1h1h1h1V26h1h1h1h1h1h1h1h1h1h1h1h1h1h1h1h1h1h1h1h1h1h1h1h1h1h1h1h1h1h1h1h1h1h1h1h1h1h1h1h1h1h1h1h1h1h1h1h1h1h1h1h1V25h1h1V26h1h1h1h1h1h1h1h1h1h1h1h1h1h1h1h1h1h1h1h1h1h1h1h1h1h1V25h1h1h1h1h1h1h1h1h1h1h1h1h1h1V26h1h1h1h1h1h1h1h1h1h1h1h1h1h1h1h1h1h1h1h1h1V25h1h1h1h1h1h1h1h1h1h1h1h1h1h1h1h1h1h1h1h1h1h1V26h1h1h1h1h1h1h1h1h1V27h1h1h1h1h1h1h1V26h1h1h1h1h1h1h1h1h1h1h1h1h1h1h1h1h1h1h1h1h1h1h1h1h1h1h1h1h1h1h1h1V27h1h1h1h1h1h1h1h1h1V26h1h1h1V25h1h1h1h1V26h1h1h1h1h1h1h1h1h1h1h1h1h1h1V25h1h1h1V26h1h1h1h1h1h1V27h1h1h1h1h1h1V26h1h1h1h1h1h1h1h1h1h1h1h1h1h1h1h1h1h1h1h1h1h1h1h1h1h1V27h1h1h1h1h1h1h1h1h1h1h1V26h1h1h1h1h1h1h1h1h1h1h1h1h1h1h1h1h1h1h1h1h1h1h1h1h1h1h1V25h1h1V26h1h1V25h1h1h1h1h1h1h1h1h1h1h1h1h1h1h1V27h1h1h1h1h1h1h1h1h1h1h1h1h1h1h1h1h1h1h1h1h1h1h1h1h1h1V26h1h1h1h1h1h1h1V27h1h1h1h1h1h1h1h1h1h1h1h1h1h1h1h1h1h1h1h1h1h1h1h1h1h1h1h1V26h1h1h1h1h1h1h1h1h1h1h1h1h1h1h1h1h1h1h1h1h1h1h1h1V27h1h1h1h1h1h1h1h1h1h1h1h1h1h1h1h1h1V26h1h1h1h1h1h1h1h1h1h1h1h1h1h1h1h1h1h1h1h1h1h1h1h1h1V27h1h1V26h1h1h1h1h1h1h1h1h1h1h1h1h1h1h1h1h1h1h1h1h1h1h1h1h1h1h1h1h1h1h1h1h1h1h1h1h1h1h1h1h1h1h1h1h1h1h1h1h1h1h1V27h1h1h1h1h1V26h1h1V27h1h1h1h1h1h1h1h1h1h1h1h1h1h1h1h1h1V26h1h1h1h1h1h1h1h1h1V27h1h1h1h1h1h1h1h1h1h1h1V26h1h1h1h1h1h1h1h1h1h1h1h1h1h1h1h1h1h1h1h1h1h1h1h1h1h1h1h1h1h1V27h1h1h1h1h1h1h1h1V26h1h1h1h1h1h1h1h1h1h1h1h1h1h1h1h1h1h1h1h1h1h1h1h1h1h1h1h1h1h1h1h1h1h1h1h1h1h1h1h1h1h1h1h1h1h1h1h1h1h1h1h1h1h1h1h1h1h1h1V27h1h1h1h1h1V26h1h1h1h1h1h1h1h1h1h1h1h1h1h1h1h1h1h1h1h1h1h1h1h1h1h1h1h1h1h1h1h1h1h1h1h1h1h1h1h1h1h1h1h1h1h1h1h1h1h1h1h1h1h1h1h1h1h1h1h1h1h1h1h1h1h1h1h1V25h1h1h1V26h1h1h1V25h1h1h1h1h1h1h1h1h1h1h1h1V26h1h1h1h1h1h1h1h1h1V25h1h1h1h1h1h1h1h1h1h1V26h1h1h1h1h1h1V25h1h1h1h1h1V26h1h1h1h1h1h1h1h1h1h1h1h1h1h1h1h1h1h1h1h1h1h1h1h1V25h1h1h1h1h1h1h1h1h1h1V26h1h1h1h1h1h1h1h1h1h1V25h1h1h1h1h1h1h1h1h1h1h1h1V26h1V27h1h1h1h1h1h1h1h1h1h1h1h1h1h1h1h1h1h1h1h1h1h1h1h1h1h1h1h1h1h1h1h1h1h1h1h1h1h1h1h1V26h1h1h1h1h1h1h1V27h1h1h1h1h1h1h1h1h1h1h1V26h1h1h1h1h1h1h1V27h1h1h1h1h1V26h1h1h1h1h1h1h1h1h1h1h1h1h1h1h1h1h1h1h1h1h1h1h1h1h1h1h1h1h1h1h1h1h1h1h1h1h1h1h1h1h1h1h1h1h1h1h1h1h1h1h1h1h1h1h1h1h1h1h1h1h1h1h1h1h1h1h1h1h1h1h1h1h1h1h1h1h1h1h1h1h1h1h1h1h1h1h1h1h1h1h1h1h1h1h1h1h1h1h1h1h1h1h1h1h1h1h1h1h1h1h1h1h1h1h1h1h1V27h1V26h1h1h1h1h1h1h1h1h1h1h1h1h1h1h1h1h1h1h1h1h1h1h1V27h1h1h1h1h1h1h1h1h1h1h1h1h1h1h1h1h1h1h1h1h1h1h1h1h1h1V26h1h1h1h1h1h1h1h1h1h1h1h1V27h1h1h1h1V26h1h1h1h1h1h1V27h1V26h1h1h1h1h1h1h1h1h1h1h1h1h1h1h1h1h1h1h1h1h1h1h1h1h1h1h1h1h1h1h1h1h1h1h1h1h1h1h1h1h1h1h1h1h1h1h1V27h1V26h1h1h1h1h1h1h1h1h1h1h1h1h1h1h1h1h1h1h1h1h1h1h1h1h1h1V27h1h1V26h1h1V27h1h1V26h1V27h1V26h1V28h1h1h1h1h1h1h1h1h1h1h1h1h1h1h1h1h1h1h1h1h1h1h1h1h1h1h1h1h1h1h1h1h1h1h1h1h1h1h1h1h1h1h1h1h1h1h1h1h1h1h1h1h1h1h1h1h1h1h1h1h1h1h1h1h1h1h1h1h1h1h1h1h1h1h1h1h1h1h1h1h1h1h1h1h1h1h1h1h1h1h1h1h1h1h1h1h1h1h1h1h1h1h1h1h1h1h1h1h1h1h1h1h1h1h1h1h1h1h1h1h1h1h1h1h1h1h1h1h1h1h1h1h1h1h1h1h1h1h1h1h1h1h1V28V28h-1h-1h-1h-1h-1h-1h-1h-1h-1h-1h-1h-1h-1h-1h-1h-1h-1h-1h-1h-1h-1h-1h-1h-1h-1h-1h-1h-1h-1h-1h-1h-1h-1h-1h-1h-1h-1h-1h-1h-1h-1h-1h-1h-1h-1h-1h-1h-1h-1h-1h-1h-1h-1h-1h-1h-1h-1h-1h-1h-1h-1h-1h-1h-1h-1h-1h-1h-1h-1h-1h-1h-1h-1h-1h-1h-1h-1h-1h-1h-1h-1h-1h-1h-1h-1h-1h-1h-1h-1h-1h-1h-1h-1h-1h-1h-1h-1h-1h-1h-1h-1h-1h-1h-1h-1h-1h-1h-1h-1h-1h-1h-1h-1h-1h-1h-1h-1h-1h-1h-1h-1h-1h-1h-1h-1h-1h-1h-1h-1h-1h-1h-1h-1h-1h-1h-1h-1h-1h-1h-1h-1h-1h-1V30h-1V29h-1V30h-1V29h-1h-1V30h-1h-1V29h-1h-1V30h-1h-1h-1h-1h-1h-1h-1h-1h-1h-1h-1h-1h-1h-1h-1h-1h-1h-1h-1h-1h-1h-1h-1h-1h-1h-1V29h-1V30h-1h-1h-1h-1h-1h-1h-1h-1h-1h-1h-1h-1h-1h-1h-1h-1h-1h-1h-1h-1h-1h-1h-1h-1h-1h-1h-1h-1h-1h-1h-1h-1h-1h-1h-1h-1h-1h-1h-1h-1h-1h-1h-1h-1h-1h-1h-1V29h-1V30h-1h-1h-1h-1h-1h-1V29h-1h-1h-1h-1V30h-1h-1h-1h-1h-1h-1h-1h-1h-1h-1h-1h-1V29h-1h-1h-1h-1h-1h-1h-1h-1h-1h-1h-1h-1h-1h-1h-1h-1h-1h-1h-1h-1h-1h-1h-1h-1h-1h-1V30h-1h-1h-1h-1h-1h-1h-1h-1h-1h-1h-1h-1h-1h-1h-1h-1h-1h-1h-1h-1h-1h-1h-1V29h-1V30h-1h-1h-1h-1h-1h-1h-1h-1h-1h-1h-1h-1h-1h-1h-1h-1h-1h-1h-1h-1h-1h-1h-1h-1h-1h-1h-1h-1h-1h-1h-1h-1h-1h-1h-1h-1h-1h-1h-1h-1h-1h-1h-1h-1h-1h-1h-1h-1h-1h-1h-1h-1h-1h-1h-1h-1h-1h-1h-1h-1h-1h-1h-1h-1h-1h-1h-1h-1h-1h-1h-1h-1h-1h-1h-1h-1h-1h-1h-1h-1h-1h-1h-1h-1h-1h-1h-1h-1h-1h-1h-1h-1h-1h-1h-1h-1h-1h-1h-1h-1h-1h-1h-1h-1h-1h-1h-1h-1h-1h-1h-1h-1h-1h-1h-1h-1h-1V29h-1h-1h-1h-1h-1V30h-1h-1h-1h-1h-1h-1h-1V29h-1h-1h-1h-1h-1h-1h-1h-1h-1h-1h-1V30h-1h-1h-1h-1h-1h-1h-1V29h-1h-1h-1h-1h-1h-1h-1h-1h-1h-1h-1h-1h-1h-1h-1h-1h-1h-1h-1h-1h-1h-1h-1h-1h-1h-1h-1h-1h-1h-1h-1h-1h-1h-1h-1h-1h-1h-1h-1h-1V30h-1V31h-1h-1h-1h-1h-1h-1h-1h-1h-1h-1h-1h-1V30h-1h-1h-1h-1h-1h-1h-1h-1h-1h-1V31h-1h-1h-1h-1h-1h-1h-1h-1h-1h-1V30h-1h-1h-1h-1h-1h-1h-1h-1h-1h-1h-1h-1h-1h-1h-1h-1h-1h-1h-1h-1h-1h-1h-1h-1V31h-1h-1h-1h-1h-1V30h-1h-1h-1h-1h-1h-1V31h-1h-1h-1h-1h-1h-1h-1h-1h-1h-1V30h-1h-1h-1h-1h-1h-1h-1h-1h-1V31h-1h-1h-1h-1h-1h-1h-1h-1h-1h-1h-1h-1V30h-1h-1h-1V31h-1h-1h-1V30h-1h-1h-1h-1h-1h-1h-1h-1h-1h-1h-1h-1h-1h-1h-1h-1h-1h-1h-1h-1h-1h-1h-1h-1h-1h-1h-1h-1h-1h-1h-1h-1h-1h-1h-1h-1h-1h-1h-1h-1h-1h-1h-1h-1h-1h-1h-1h-1h-1h-1h-1h-1h-1h-1h-1h-1h-1h-1h-1h-1h-1h-1h-1h-1h-1h-1h-1h-1V29h-1h-1h-1h-1h-1V30h-1h-1h-1h-1h-1h-1h-1h-1h-1h-1h-1h-1h-1h-1h-1h-1h-1h-1h-1h-1h-1h-1h-1h-1h-1h-1h-1h-1h-1h-1h-1h-1h-1h-1h-1h-1h-1h-1h-1h-1h-1h-1h-1h-1h-1h-1h-1h-1h-1h-1h-1h-1h-1h-1h-1h-1h-1h-1h-1V29h-1h-1h-1h-1h-1h-1h-1h-1V30h-1h-1h-1h-1h-1h-1h-1h-1h-1h-1h-1h-1h-1h-1h-1h-1h-1h-1h-1h-1h-1h-1h-1h-1h-1h-1h-1h-1h-1h-1V29h-1h-1h-1h-1h-1h-1h-1h-1h-1h-1h-1V30h-1h-1h-1h-1h-1h-1h-1h-1h-1V29h-1h-1h-1h-1h-1h-1h-1h-1h-1h-1h-1h-1h-1h-1h-1h-1h-1V30h-1h-1V29h-1h-1h-1h-1h-1V30h-1h-1h-1h-1h-1h-1h-1h-1h-1h-1h-1h-1h-1h-1h-1h-1h-1h-1h-1h-1h-1h-1h-1h-1h-1h-1h-1h-1h-1h-1h-1h-1h-1h-1h-1h-1h-1h-1h-1h-1h-1h-1h-1h-1h-1h-1h-1h-1h-1h-1h-1V29h-1h-1V30h-1h-1h-1h-1h-1h-1h-1h-1h-1h-1h-1h-1h-1h-1h-1h-1h-1h-1h-1h-1h-1h-1h-1h-1h-1V29h-1h-1h-1h-1h-1h-1h-1h-1h-1h-1h-1h-1h-1h-1h-1h-1h-1V30h-1h-1h-1h-1h-1h-1h-1h-1h-1h-1h-1h-1h-1h-1h-1h-1h-1h-1h-1h-1h-1h-1h-1h-1V29h-1h-1h-1h-1h-1h-1h-1h-1h-1h-1h-1h-1h-1h-1h-1h-1h-1h-1h-1h-1h-1h-1h-1h-1h-1h-1h-1h-1V30h-1h-1h-1h-1h-1h-1h-1V29h-1h-1h-1h-1h-1h-1h-1h-1h-1h-1h-1h-1h-1h-1h-1h-1h-1h-1h-1h-1h-1h-1h-1h-1h-1h-1V31h-1h-1h-1h-1h-1h-1h-1h-1h-1h-1h-1h-1h-1h-1h-1V30h-1h-1V31h-1h-1V30h-1h-1h-1h-1h-1h-1h-1h-1h-1h-1h-1h-1h-1h-1h-1h-1h-1h-1h-1h-1h-1h-1h-1h-1h-1h-1h-1V29h-1h-1h-1h-1h-1h-1h-1h-1h-1h-1h-1V30h-1h-1h-1h-1h-1h-1h-1h-1h-1h-1h-1h-1h-1h-1h-1h-1h-1h-1h-1h-1h-1h-1h-1h-1h-1h-1V29h-1h-1h-1h-1h-1h-1V30h-1h-1h-1h-1h-1h-1V31h-1h-1h-1V30h-1h-1h-1h-1h-1h-1h-1h-1h-1h-1h-1h-1h-1h-1V31h-1h-1h-1h-1V30h-1h-1h-1V29h-1h-1h-1h-1h-1h-1h-1h-1h-1V30h-1h-1h-1h-1h-1h-1h-1h-1h-1h-1h-1h-1h-1h-1h-1h-1h-1h-1h-1h-1h-1h-1h-1h-1h-1h-1h-1h-1h-1h-1h-1h-1V29h-1h-1h-1h-1h-1h-1h-1V30h-1h-1h-1h-1h-1h-1h-1h-1h-1V31h-1h-1h-1h-1h-1h-1h-1h-1h-1h-1h-1h-1h-1h-1h-1h-1h-1h-1h-1h-1h-1h-1V30h-1h-1h-1h-1h-1h-1h-1h-1h-1h-1h-1h-1h-1h-1h-1h-1h-1h-1h-1h-1h-1V31h-1h-1h-1h-1h-1h-1h-1h-1h-1h-1h-1h-1h-1h-1V30h-1h-1h-1h-1h-1h-1h-1h-1h-1h-1h-1h-1h-1h-1h-1h-1h-1h-1h-1h-1h-1h-1h-1h-1h-1h-1V31h-1h-1V30h-1h-1h-1h-1h-1h-1h-1h-1h-1h-1h-1h-1h-1h-1h-1h-1h-1h-1h-1h-1h-1h-1h-1h-1h-1h-1h-1h-1h-1h-1h-1h-1h-1h-1h-1h-1h-1h-1h-1h-1h-1h-1h-1h-1h-1h-1h-1h-1h-1h-1h-1h-1V29h-1h-1h-1h-1h-1h-1h-1h-1h-1h-1h-1h-1h-1h-1h-1h-1h-1h-1h-1h-1h-1h-1h-1h-1h-1V30h-1h-1h-1V29h-1h-1h-1h-1h-1h-1h-1h-1h-1h-1h-1h-1h-1h-1h-1h-1h-1h-1h-1h-1h-1V30h-1h-1h-1h-1h-1h-1h-1h-1h-1h-1h-1h-1h-1h-1h-1h-1h-1h-1h-1h-1V29h-1h-1h-1h-1h-1h-1h-1h-1h-1h-1h-1h-1h-1h-1h-1h-1h-1V30h-1h-1h-1h-1h-1h-1V29h-1h-1h-1h-1h-1h-1h-1h-1h-1h-1h-1h-1V30h-1h-1h-1h-1h-1h-1h-1h-1h-1h-1h-1h-1h-1h-1h-1h-1h-1h-1h-1h-1h-1h-1h-1h-1h-1h-1h-1h-1h-1h-1h-1V31h-1h-1h-1h-1h-1h-1h-1h-1h-1h-1h-1h-1h-1h-1h-1h-1h-1h-1h-1h-1h-1h-1V30h-1h-1h-1h-1h-1h-1h-1h-1h-1h-1h-1h-1h-1h-1h-1h-1h-1h-1h-1h-1h-1h-1h-1h-1h-1h-1h-1h-1h-1h-1h-1h-1h-1h-1h-1h-1h-1h-1h-1h-1h-1h-1h-1h-1h-1h-1h-1h-1h-1h-1h-1h-1h-1h-1V31h-1h-1h-1h-1h-1h-1h-1h-1h-1h-1h-1h-1h-1V30h-1V31h-1h-1h-1h-1h-1h-1h-1h-1h-1h-1h-1h-1h-1h-1V30h-1h-1h-1h-1h-1h-1h-1h-1V31h-1h-1h-1h-1h-1h-1h-1h-1h-1h-1h-1V30h-1h-1h-1h-1h-1h-1h-1h-1h-1h-1h-1h-1h-1h-1h-1h-1h-1h-1h-1h-1h-1h-1h-1h-1h-1h-1h-1h-1h-1h-1h-1h-1h-1h-1h-1h-1h-1h-1h-1h-1h-1h-1h-1h-1h-1h-1h-1h-1h-1h-1h-1h-1h-1h-1h-1h-1h-1h-1h-1h-1h-1h-1h-1h-1h-1h-1h-1h-1h-1h-1h-1V29h-1h-1h-1h-1h-1V30h-1h-1h-1h-1h-1h-1h-1h-1h-1h-1h-1h-1h-1h-1h-1h-1h-1h-1h-1h-1h-1h-1V29h-1h-1h-1h-1h-1h-1h-1h-1h-1h-1h-1h-1h-1h-1h-1h-1h-1h-1h-1h-1h-1h-1h-1h-1h-1h-1h-1h-1h-1h-1h-1h-1h-1h-1h-1h-1h-1h-1h-1h-1h-1h-1h-1h-1h-1h-1V30h-1h-1h-1h-1h-1h-1V29h-1h-1h-1h-1h-1h-1h-1h-1h-1h-1h-1h-1h-1h-1h-1h-1h-1h-1h-1h-1h-1h-1h-1h-1h-1h-1h-1h-1V30h-1h-1h-1h-1h-1h-1h-1h-1h-1h-1h-1h-1h-1h-1h-1h-1h-1h-1h-1h-1h-1h-1h-1h-1h-1h-1h-1h-1h-1h-1h-1h-1h-1h-1h-1h-1h-1h-1h-1h-1h-1Z" fill="#6666de"/><rect x="253" y="0" width="2" height="56" fill="#000"/><rect x="1155" y="0" width="2" height="56" fill="#000"/></svg>
<svg style="left:122px;top:225px" width="1775" height="56" viewBox="0 0 1775 56" shape-rendering="crispEdges"><path d="M0 28V22h1V24h1V21h1V23h1V24h1V22h1V24h1V19h1V23h1V20h1V22h1h1V19h1V21h1V22h1V24h1V23h1V24h1h1h1V22h1V23h1V16h1V18h1V22h1V20h1V22h1V20h1V23h1V21h1h1V22h1h1V21h1h1V16h1V21h1V23h1V21h1V24h1V25h1V26h1V24h1V25h1V23h1V22h1V25h1V24h1V23h1V22h1V23h1V22h1h1V24h1h1V22h1h1h1V23h1V24h1h1V25h1V24h1V22h1V24h1h1V22h1V23h1h1V24h1h1h1h1V21h1V25h1V24h1V22h1V24h1h1V23h1V22h1V21h1V22h1h1V23h1V24h1V22h1V25h1V24h1h1h1V25h1V22h1V24h1V23h1V22h1V24h1V23h1V22h1V24h1h1V23h1V24h1h1V23h1h1V25h1V24h1V23h1V25h1V24h1V23h1h1V26h1V25h1V23h1h1h1V25h1V24h1V23h1V25h1V23h1V25h1h1V23h1V22h1V23h1V24h1V22h1V20h1h1V22h1V21h1h1V23h1V21h1V22h1V21h1V22h1h1V23h1V24h1V22h1V24h1V22h1V23h1V22h1V24h1V22h1V21h1V23h1V24h1V16h1V23h1V21h1V23h1V21h1V23h1h1V24h1h1V22h1V23h1V24h1h1V25h1V22h1V24h1h1V25h1V23h1V24h1V25h1V22h1V24h1V25h1V23h1V25h1V23h1V25h1h1V24h1h1V25h1V23h1V25h1V22h1h1h1h1V23h1V24h1h1V25h1V23h1V24h1V25h1V17h1V23h1V24h1V23h1h1V21h1V23h1V19h1V23h1V24h1h1V23h1h1V25h1V23h1V24h1V26h1V23h1V24h1V26h1V25h1V21h1V20h1V21h1V22h1V21h1V18h1V22h1V19h1V22h1V20h1h1V19h1V18h1V19h1V22h1V23h1V19h1V20h1V23h1V20h1V22h1V20h1V21h1V20h1h1V23h1h1h1V20h1V22h1V18h1V21h1V22h1V20h1h1V21h1V22h1V19h1V21h1V20h1V24h1V23h1V21h1V20h1h1V22h1V23h1h1h1V21h1V20h1V18h1V22h1V21h1h1V22h1V19h1V21h1V22h1V21h1V23h1h1V22h1V20h1V22h1h1h1h1V19h1V20h1V19h1V24h1V22h1V16h1V21h1V20h1h1V19h1V21h1V20h1V15h1V22h1h1V23h1h1V20h1V19h1V20h1V22h1V21h1V18h1V21h1V19h1V20h1V22h1V23h1V22h1V21h1V22h1V21h1h1V15h1V20h1V21h1V17h1V18h1h1h1h1V19h1V23h1V22h1V15h1V19h1V18h1V21h1V16h1V21h1V15h1V19h1V23h1V21h1V23h1V26h1h1V24h1h1h1V25h1V24h1V25h1V24h1V22h1V23h1V25h1V24h1V25h1V22h1V24h1h1V22h1V24h1V22h1V21h1V24h1V22h1h1h1V24h1V23h1V24h1V23h1V22h1V23h1V22h1V24h1V23h1V24h1V22h1V23h1V24h1V25h1V24h1V25h1V24h1V25h1V24h1V25h1h1V24h1V23h1h1V24h1V23h1V19h1V25h1V23h1V25h1V23h1h1V25h1V23h1V24h1V25h1V23h1V22h1V23h1V25h1h1V23h1V24h1V20h1h1V23h1h1V21h1V20h1V23h1V22h1V23h1h1V24h1h1h1V23h1V22h1h1V23h1V20h1V25h1V24h1V23h1V16h1V22h1V21h1V22h1V23h1V24h1h1V25h1V26h1V23h1V25h1V23h1V19h1V25h1V23h1h1V24h1h1V25h1V24h1V25h1V23h1h1V24h1V25h1V23h1V24h1h1V21h1V26h1V25h1h1h1V24h1h1h1V20h1V25h1V22h1V23h1V24h1V23h1h1V25h1h1h1V24h1V21h1V22h1V21h1V23h1V21h1V20h1V23h1V20h1V22h1V21h1V23h1V20h1V23h1h1V21h1h1V24h1V20h1V23h1V20h1V24h1V20h1V22h1V23h1h1V22h1V24h1V21h1V22h1V21h1V23h1h1V24h1V23h1V24h1V22h1V20h1V17h1V18h1V20h1h1V21h1V18h1h1V14h1V18h1V22h1V19h1V23h1V20h1V22h1V19h1V22h1h1V24h1V22h1V23h1V20h1V22h1V23h1V20h1V18h1V24h1V20h1h1V22h1V21h1V18h1V22h1V20h1V24h1V21h1V15h1V23h1V22h1V21h1V22h1h1V20h1V23h1V19h1h1h1V20h1V17h1V19h1V21h1V20h1V23h1V19h1h1V18h1V19h1V21h1V20h1V19h1V18h1h1V21h1V20h1h1V19h1V23h1h1V24h1V20h1V22h1V23h1V20h1V22h1h1V23h1V20h1V24h1V20h1V22h1V23h1V21h1V17h1V14h1V20h1V18h1V14h1V17h1V18h1V21h1h1V16h1V14h1V21h1V23h1V22h1h1h1V19h1V20h1h1h1V24h1V21h1V20h1V21h1V22h1V20h1V22h1V23h1h1V24h1V23h1V24h1V25h1V21h1V25h1V23h1V22h1V24h1V22h1V21h1V22h1V19h1V23h1V24h1V21h1V19h1V25h1V24h1V23h1h1h1V22h1V23h1h1h1h1V24h1h1V22h1V24h1V22h1V24h1V22h1V24h1V23h1V25h1V24h1h1V23h1V24h1V20h1V24h1V21h1V23h1V22h1V23h1V16h1V25h1V20h1V21h1V18h1V19h1V23h1V22h1V19h1V20h1V22h1h1V20h1V24h1V23h1V22h1V18h1V19h1V21h1V20h1h1V14h1V22h1V19h1V20h1V23h1V21h1V23h1V21h1V23h1h1V21h1V25h1V23h1V24h1V23h1V24h1V25h1V23h1V22h1V25h1V23h1V25h1V24h1V25h1V23h1V24h1V22h1h1V25h1h1V23h1V24h1V23h1V24h1V25h1V24h1V25h1h1V23h1h1h1V25h1V23h1V22h1V15h1V22h1V23h1V22h1V23h1V24h1V23h1h1V25h1V24h1V21h1V23h1V21h1V24h1V23h1V21h1V20h1V24h1V23h1V22h1h1h1V23h1h1h1V25h1V23h1V22h1V23h1V17h1V22h1V23h1V25h1V24h1h1V21h1V18h1V21h1V20h1V21h1V23h1V19h1V22h1V23h1V19h1h1h1h1V24h1V15h1V21h1V23h1h1V24h1h1h1V25h1V22h1h1h1V23h1h1h1V24h1h1V21h1V26h1V22h1h1V25h1h1V24h1h1V25h1V22h1V18h1V24h1V23h1V10h1V25h1V15h1V22h1h1V21h1V24h1h1V22h1h1V25h1V23h1V22h1h1V23h1V22h1V23h1V24h1h1V22h1V24h1h1h1V25h1V23h1V24h1V23h1V24h1V23h1V25h1V24h1V25h1V20h1V23h1V24h1V26h1V25h1V24h1h1V25h1V23h1V24h1V23h1V25h1V24h1V22h1V12h1V23h1h1V22h1V23h1V22h1V24h1V25h1V23h1V25h1V24h1h1V25h1V24h1V25h1h1h1V20h1V24h1V21h1V23h1V22h1V23h1V24h1V23h1V24h1V25h1h1h1V23h1V24h1h1V25h1V24h1V21h1V24h1h1V23h1h1V24h1V23h1h1h1V25h1V23h1V24h1V20h1h1V24h1V23h1V24h1V23h1V20h1V23h1V21h1V22h1V16h1V22h1V23h1V22h1V21h1V15h1V21h1h1h1V16h1V22h1V23h1V22h1V20h1V23h1h1V22h1V24h1h1V22h1V21h1h1V23h1V24h1V23h1h1h1V22h1V24h1V21h1V24h1V20h1V22h1V24h1V23h1V24h1h1h1h1V16h1V24h1V21h1V23h1h1V24h1V23h1V21h1V23h1V24h1V22h1V23h1V22h1V16h1V22h1V24h1V23h1V20h1h1V21h1V24h1V25h1V23h1V24h1V21h1h1V23h1V24h1V23h1V24h1h1V23h1V22h1V23h1h1V24h1V25h1V23h1h1V24h1V23h1V22h1V24h1V17h1V23h1h1V21h1V23h1V24h1V23h1V24h1h1V23h1h1V18h1V23h1h1V24h1V21h1V25h1V21h1V20h1V22h1h1V21h1V22h1V23h1V21h1V24h1V22h1V19h1V21h1V22h1V23h1h1V24h1h1V22h1h1V20h1V23h1V25h1V22h1V24h1V22h1h1V23h1V24h1V22h1V24h1h1V25h1V23h1V22h1V24h1V25h1V21h1V22h1V23h1V19h1V20h1V21h1V18h1V19h1V20h1V21h1V20h1V22h1V23h1V19h1V22h1V20h1V23h1V22h1V21h1V22h1V19h1V21h1V23h1V19h1V22h1V20h1V23h1V24h1V20h1V23h1V21h1h1V20h1V19h1V21h1V22h1V20h1V21h1V19h1V20h1h1V23h1V17h1V23h1V21h1V23h1V24h1V23h1V17h1V22h1V25h1V22h1V24h1h1V22h1V25h1V23h1h1V24h1h1V21h1V23h1h1V24h1V25h1V22h1V23h1V22h1h1V20h1V22h1V21h1V22h1V20h1V22h1V23h1V24h1V21h1V23h1V22h1h1V24h1V22h1V17h1V21h1h1V20h1V22h1h1h1h1V19h1V22h1V21h1V20h1V22h1h1h1V21h1V24h1V21h1h1h1V23h1h1V24h1V21h1h1V22h1h1V23h1V22h1V23h1V21h1V15h1V20h1V13h1V23h1V19h1V22h1h1V15h1V19h1V23h1V24h1V22h1V24h1V20h1V15h1V22h1V23h1V24h1V23h1h1V18h1V22h1V19h1V21h1h1V22h1h1V17h1V20h1V18h1V21h1V20h1V19h1V21h1V19h1V18h1V20h1V18h1V14h1V19h1V22h1V23h1V19h1V21h1h1V20h1V19h1V20h1V21h1V15h1V23h1V19h1V23h1V20h1V21h1h1h1V19h1V21h1V20h1V21h1V22h1V21h1V20h1V22h1V16h1V22h1V23h1V21h1V22h1V19h1V22h1V20h1V23h1V22h1V23h1V19h1V21h1h1V15h1V23h1V20h1V22h1h1h1h1V20h1V21h1V18h1V21h1V22h1V21h1V17h1V23h1V17h1V18h1V17h1V22h1h1V19h1V23h1h1V21h1V19h1h1V23h1h1h1V21h1V22h1V23h1V18h1V20h1V18h1V20h1V15h1V23h1V15h1V21h1V20h1V23h1V19h1V25h1h1V24h1V23h1V24h1V22h1V25h1h1h1V22h1V23h1V22h1V23h1V24h1V23h1V24h1V25h1V24h1h1V23h1h1V25h1V24h1V23h1V24h1V25h1h1V24h1h1V23h1h1V24h1h1V22h1V25h1V23h1V19h1V22h1V23h1V22h1V25h1V23h1h1V12h1V22h1h1V25h1h1V13h1V23h1V24h1V23h1V24h1V25h1h1V23h1h1V24h1V23h1V24h1V23h1V25h1h1V24h1V25h1V24h1h1V23h1V24h1V25h1h1V22h1V23h1V19h1h1V21h1V20h1V22h1V19h1V22h1V20h1V19h1V23h1V20h1V22h1h1V20h1V23h1V21h1h1V18h1V23h1V20h1V19h1h1V23h1h1V22h1h1V23h1V19h1V15h1V23h1V19h1V20h1V23h1V17h1V24h1V22h1V23h1V20h1V22h1h1V21h1V23h1V21h1V23h1V21h1h1V16h1V24h1V21h1V22h1V21h1V23h1V21h1h1V20h1h1V21h1V15h1V23h1V24h1V22h1h1V21h1V20h1V22h1V23h1V22h1V23h1V22h1V21h1V22h1h1h1h1V20h1V22h1V21h1V23h1V25h1h1V23h1V19h1V20h1V22h1V21h1V18h1V19h1V18h1V22h1V20h1V23h1V15h1V21h1V22h1V25h1h1V26h1V21h1h1V23h1h1V22h1V21h1h1V18h1V21h1V19h1V22h1V20h1V22h1V21h1V22h1V21h1V25h1V27h1h1V22h1h1V23h1V24h1V23h1V24h1V23h1V24h1h1V25h1V22h1V23h1V25h1V22h1V17h1V21h1V23h1V24h1V22h1V25h1V21h1V24h1V22h1V24h1h1h1h1V23h1V25h1V24h1V23h1h1h1h1V22h1V23h1V24h1V23h1V24h1V23h1V24h1h1V25h1V24h1V25h1h1V27h1h1V26h1V23h1V25h1V23h1h1V22h1V24h1V25h1V23h1h1V25h1h1V23h1V25h1V17h1V25h1V24h1V25h1h1h1V23h1V22h1V24h1V27h1V26h1h1V21h1V23h1V22h1V24h1V23h1h1V21h1V22h1V23h1V24h1V22h1V23h1h1V24h1V23h1V21h1V22h1V24h1h1V23h1V24h1V21h1V24h1h1h1V21h1V22h1V21h1V22h1V19h1V21h1V20h1V18h1V23h1V21h1V22h1V24h1V20h1V21h1V20h1h1V16h1V20h1V24h1V23h1V27h1V25h1V27h1V16h1V21h1V24h1V22h1V24h1h1V23h1V22h1V23h1h1V24h1V23h1V22h1h1h1V23h1V22h1V24h1V25h1V23h1V25h1h1V26h1h1h1h1h1h1V27h1V26h1h1V27h1V21h1V27h1h1h1h1h1h1h1h1h1h1h1h1h1h1h1h1h1h1h1h1h1h1h1h1h1h1h1h1h1h1h1h1h1h1h1h1h1h1h1h1h1h1h1h1h1h1h1h1h1h1h1h1h1h1h1h1h1h1h1h1h1h1h1h1h1h1h1h1h1h1h1h1h1h1h1h1h1h1h1h1h1h1h1h1h1h1h1h1h1h1h1h1h1h1h1h1h1h1h1h1h1h1h1h1h1h1h1h1h1h1h1h1h1h1h1h1h1h1h1h1h1h1h1h1h1h1h1h1h1h1h1h1h1h1h1h1h1h1h1h1h1h1h1V28V29h-1h-1h-1h-1h-1h-1h-1h-1h-1h-1h-1h-1h-1h-1h-1h-1h-1h-1h-1h-1h-1h-1h-1h-1h-1h-1h-1h-1h-1h-1h-1h-1h-1h-1h-1h-1h-1h-1h-1h-1h-1h-1h-1h-1h-1h-1h-1h-1h-1h-1h-1h-1h-1h-1h-1h-1h-1h-1h-1h-1h-1h-1h-1h-1h-1h-1h-1h-1h-1h-1h-1h-1h-1h-1h-1h-1h-1h-1h-1h-1h-1h-1h-1h-1h-1h-1h-1h-1h-1h-1h-1h-1h-1h-1h-1h-1h-1h-1h-1h-1h-1h-1h-1h-1h-1h-1h-1h-1h-1h-1h-1h-1h-1h-1h-1h-1h-1h-1h-1h-1h-1h-1h-1h-1h-1h-1h-1h-1h-1h-1h-1h-1h-1h-1h-1h-1h-1h-1h-1h-1h-1h-1h-1V35h-1V29h-1h-1V30h-1V29h-1V30h-1V29h-1V30h-1V29h-1h-1V30h-1V32h-1h-1h-1h-1V33h-1V32h-1V33h-1h-1V32h-1h-1V33h-1V32h-1V35h-1h-1V32h-1V33h-1V34h-1h-1V32h-1h-1V33h-1V40h-1V30h-1V31h-1V30h-1V33h-1V32h-1V34h-1h-1V36h-1V34h-1V35h-1V34h-1V36h-1V35h-1V32h-1V35h-1V40h-1V34h-1h-1h-1V37h-1V34h-1h-1V35h-1h-1V32h-1V34h-1V33h-1V35h-1h-1V32h-1V33h-1V34h-1V35h-1h-1V34h-1V33h-1V34h-1h-1V35h-1V32h-1V33h-1V34h-1V33h-1h-1V32h-1V36h-1V33h-1V32h-1V30h-1h-1V29h-1V33h-1V31h-1V32h-1h-1V33h-1h-1h-1V32h-1h-1V34h-1h-1V33h-1V32h-1V31h-1V33h-1h-1V31h-1h-1h-1V33h-1V31h-1V33h-1V29h-1h-1h-1V31h-1h-1V32h-1V31h-1V33h-1h-1V32h-1V31h-1V33h-1V32h-1V31h-1V34h-1V31h-1V33h-1V32h-1V33h-1h-1V32h-1V33h-1h-1h-1V32h-1h-1V33h-1h-1V34h-1V32h-1h-1h-1V35h-1h-1V40h-1V33h-1h-1V35h-1V34h-1V33h-1h-1V32h-1V31h-1h-1V33h-1V35h-1h-1V31h-1V33h-1V30h-1V29h-1V30h-1V36h-1V33h-1V35h-1V37h-1V34h-1V36h-1V37h-1V39h-1V34h-1V35h-1V36h-1V37h-1V36h-1V34h-1V36h-1V33h-1V31h-1h-1V30h-1V34h-1V36h-1h-1V32h-1V34h-1h-1V38h-1V33h-1h-1V34h-1V35h-1h-1V36h-1V33h-1V30h-1h-1V31h-1V32h-1h-1V40h-1V33h-1V34h-1V35h-1V34h-1V33h-1V36h-1V34h-1V32h-1V34h-1V33h-1V35h-1V36h-1h-1V32h-1V36h-1h-1V35h-1V36h-1V35h-1V34h-1V33h-1V32h-1V34h-1V32h-1h-1V33h-1V34h-1V39h-1V35h-1V33h-1h-1V34h-1V35h-1V34h-1h-1V33h-1V35h-1h-1V34h-1V33h-1V37h-1V31h-1V35h-1V34h-1h-1V41h-1V33h-1h-1V37h-1V33h-1h-1V38h-1V35h-1h-1V37h-1V36h-1V33h-1V36h-1V33h-1h-1V37h-1h-1h-1h-1V34h-1V35h-1h-1h-1V34h-1h-1V37h-1V34h-1V36h-1V38h-1V35h-1h-1V31h-1h-1V33h-1h-1V31h-1V30h-1V31h-1V32h-1V30h-1V31h-1h-1h-1h-1V33h-1V31h-1V32h-1V31h-1V32h-1h-1V33h-1V31h-1V34h-1V44h-1V32h-1V33h-1h-1h-1V41h-1V33h-1V34h-1V32h-1V33h-1h-1V32h-1V40h-1V35h-1V34h-1V33h-1V34h-1V31h-1V34h-1V32h-1h-1h-1h-1h-1V31h-1V33h-1h-1h-1V34h-1V32h-1V33h-1V34h-1V31h-1V34h-1V32h-1h-1V33h-1h-1V34h-1V32h-1V31h-1h-1h-1V32h-1h-1V33h-1V34h-1V31h-1h-1V35h-1h-1h-1V36h-1V41h-1V33h-1V41h-1V34h-1V35h-1V36h-1V34h-1h-1V36h-1h-1V34h-1V37h-1V35h-1V34h-1V37h-1V33h-1V36h-1V37h-1V33h-1V36h-1h-1V38h-1V33h-1V39h-1V37h-1V35h-1V38h-1V39h-1V33h-1V36h-1V37h-1V35h-1V34h-1V32h-1V33h-1V32h-1V35h-1V33h-1V41h-1V36h-1V34h-1V36h-1V37h-1V36h-1V34h-1V35h-1V32h-1V35h-1V34h-1V36h-1V32h-1V33h-1V37h-1V36h-1V35h-1V34h-1V35h-1V36h-1V34h-1V33h-1V37h-1V36h-1V35h-1V33h-1h-1V36h-1V35h-1V33h-1V41h-1V35h-1V36h-1V37h-1V34h-1V36h-1V37h-1V35h-1V33h-1V36h-1V38h-1V37h-1V34h-1V37h-1h-1V38h-1h-1V34h-1V37h-1h-1V38h-1V40h-1V38h-1V36h-1V35h-1V39h-1V37h-1V35h-1h-1V38h-1V35h-1h-1V34h-1V33h-1V35h-1V39h-1V36h-1V37h-1V36h-1V35h-1V33h-1V35h-1V37h-1V34h-1V35h-1h-1h-1V39h-1V35h-1V41h-1V37h-1V33h-1V34h-1V32h-1V35h-1h-1h-1h-1V33h-1V34h-1h-1V35h-1h-1V33h-1V34h-1V35h-1V32h-1V36h-1V34h-1V32h-1V36h-1V34h-1V36h-1V34h-1V36h-1V35h-1h-1V32h-1V35h-1h-1V41h-1V34h-1h-1V35h-1h-1V33h-1V32h-1h-1V36h-1V34h-1V36h-1V33h-1h-1V35h-1h-1V33h-1V37h-1V35h-1V34h-1V32h-1V31h-1h-1V32h-1V38h-1V33h-1V32h-1h-1V34h-1V33h-1V34h-1V31h-1V33h-1h-1V32h-1h-1V40h-1V35h-1V32h-1V34h-1V36h-1V34h-1V39h-1V36h-1h-1V33h-1V34h-1V35h-1V33h-1h-1V36h-1h-1V38h-1V33h-1V34h-1V36h-1V34h-1V36h-1h-1V35h-1h-1V33h-1V34h-1h-1h-1V36h-1V33h-1V34h-1V33h-1V35h-1V37h-1V38h-1V36h-1V35h-1V33h-1h-1V36h-1V35h-1h-1V34h-1h-1V35h-1V36h-1V32h-1V34h-1V32h-1V34h-1h-1V33h-1V34h-1V32h-1V34h-1V32h-1V35h-1V32h-1h-1h-1V33h-1V32h-1V34h-1V31h-1V37h-1V33h-1h-1V32h-1h-1V31h-1V37h-1V35h-1V37h-1V35h-1V37h-1V33h-1h-1V36h-1V33h-1V36h-1V33h-1h-1V35h-1V37h-1V33h-1V32h-1V30h-1V31h-1V33h-1V35h-1V31h-1V33h-1h-1h-1V31h-1V34h-1h-1V38h-1V34h-1h-1V39h-1V32h-1V34h-1V33h-1V35h-1h-1V32h-1V34h-1V32h-1V33h-1V32h-1V34h-1h-1V33h-1h-1V32h-1h-1V35h-1V32h-1h-1V33h-1V31h-1h-1V32h-1h-1V35h-1V36h-1V33h-1V34h-1V32h-1V40h-1V35h-1V32h-1h-1V35h-1V32h-1V33h-1h-1V32h-1V33h-1V35h-1V34h-1h-1V35h-1V32h-1V33h-1V31h-1V32h-1V33h-1V35h-1V34h-1V40h-1V34h-1V32h-1V34h-1V31h-1V33h-1h-1V35h-1V32h-1h-1V35h-1V36h-1h-1V35h-1V33h-1h-1V36h-1V34h-1V37h-1V34h-1V31h-1V35h-1V38h-1V34h-1V32h-1V33h-1V40h-1V36h-1V33h-1V32h-1V33h-1V41h-1V34h-1h-1h-1V36h-1h-1V34h-1V35h-1V33h-1V35h-1V39h-1V31h-1V33h-1h-1V34h-1V33h-1V35h-1h-1V32h-1V34h-1V35h-1V32h-1h-1V35h-1V31h-1h-1V32h-1V33h-1V32h-1V31h-1h-1V33h-1h-1V32h-1V33h-1V34h-1V33h-1V31h-1h-1V40h-1V31h-1V30h-1h-1h-1V34h-1V33h-1V31h-1V33h-1V32h-1V33h-1V31h-1V32h-1h-1V33h-1V31h-1V34h-1V46h-1V34h-1V32h-1h-1h-1V34h-1h-1V32h-1V34h-1V31h-1h-1h-1h-1V33h-1V34h-1V31h-1V32h-1V33h-1h-1V32h-1h-1V33h-1h-1V31h-1V32h-1V33h-1V32h-1V33h-1V31h-1V34h-1V33h-1h-1h-1V32h-1V40h-1V34h-1h-1V32h-1V31h-1V35h-1V34h-1V38h-1V33h-1V34h-1V41h-1V33h-1V43h-1V33h-1h-1V40h-1V33h-1V32h-1h-1h-1V31h-1V34h-1V33h-1V40h-1V32h-1V34h-1V32h-1V34h-1h-1V31h-1V34h-1V35h-1V33h-1V32h-1V33h-1h-1V32h-1h-1V35h-1h-1V33h-1V41h-1V35h-1h-1V36h-1h-1V33h-1V36h-1V35h-1V34h-1V37h-1V38h-1V36h-1V35h-1V36h-1V33h-1h-1V31h-1V33h-1h-1V32h-1V33h-1h-1h-1V34h-1h-1V31h-1V33h-1V34h-1h-1V32h-1V33h-1V34h-1V32h-1V37h-1V32h-1h-1V34h-1V35h-1V33h-1V34h-1V32h-1V31h-1V34h-1V33h-1V31h-1V34h-1V33h-1V31h-1V32h-1V43h-1V34h-1h-1V32h-1h-1V33h-1h-1V32h-1h-1V31h-1V32h-1V31h-1V32h-1V31h-1V33h-1V32h-1V31h-1V32h-1V33h-1V31h-1h-1V32h-1V33h-1V32h-1h-1V31h-1V34h-1V32h-1V33h-1V34h-1V31h-1V33h-1V31h-1V34h-1V32h-1V33h-1V31h-1V35h-1V34h-1V36h-1V37h-1V36h-1V33h-1V34h-1V42h-1V38h-1h-1V35h-1h-1V38h-1V36h-1V34h-1V32h-1V36h-1V33h-1V35h-1V33h-1V34h-1V36h-1V34h-1V36h-1V38h-1V33h-1h-1V31h-1V36h-1V33h-1V31h-1V35h-1V32h-1V35h-1V38h-1V33h-1h-1V32h-1h-1V31h-1h-1V32h-1V34h-1V32h-1h-1V35h-1V33h-1V32h-1V31h-1V37h-1V32h-1V31h-1V34h-1V32h-1V31h-1h-1h-1V33h-1V31h-1V40h-1V32h-1V33h-1V32h-1V35h-1V34h-1V33h-1V32h-1V35h-1V33h-1V34h-1V35h-1V32h-1V34h-1V35h-1V34h-1h-1V32h-1V36h-1V34h-1V33h-1V32h-1V36h-1h-1V33h-1V34h-1V35h-1V32h-1V34h-1V32h-1V36h-1V32h-1V33h-1V36h-1V34h-1V40h-1V35h-1V34h-1V37h-1h-1V38h-1V42h-1V37h-1V34h-1V40h-1V37h-1V34h-1V36h-1V34h-1h-1V35h-1V34h-1V36h-1V34h-1V33h-1h-1h-1h-1V35h-1V33h-1V36h-1V35h-1V36h-1V35h-1V36h-1V35h-1V36h-1V34h-1V36h-1h-1V34h-1V37h-1V36h-1V37h-1V35h-1V34h-1V37h-1V35h-1V34h-1V37h-1h-1V34h-1V36h-1V39h-1V32h-1V33h-1V32h-1V35h-1V36h-1h-1V33h-1V38h-1V34h-1V35h-1h-1V34h-1V36h-1V34h-1V33h-1V35h-1V34h-1V35h-1V38h-1V33h-1V34h-1V32h-1V36h-1h-1V37h-1V35h-1h-1V32h-1V36h-1V34h-1h-1V37h-1V34h-1V37h-1V38h-1V40h-1V34h-1V33h-1V38h-1V34h-1V37h-1V39h-1h-1V33h-1V36h-1V34h-1h-1V35h-1h-1V33h-1V36h-1V35h-1V36h-1V35h-1V33h-1V32h-1V36h-1h-1V32h-1h-1V35h-1h-1h-1h-1h-1V39h-1V37h-1V33h-1V36h-1V38h-1V37h-1V35h-1V37h-1V36h-1V35h-1V33h-1V34h-1V37h-1V34h-1V35h-1V32h-1V31h-1V32h-1h-1V33h-1V34h-1V32h-1V33h-1V32h-1h-1V33h-1h-1V31h-1V33h-1V32h-1V33h-1V31h-1V32h-1V34h-1V33h-1V31h-1h-1h-1V33h-1V32h-1V34h-1V31h-1V32h-1V34h-1V31h-1h-1V32h-1V31h-1V33h-1V37h-1V33h-1V30h-1V31h-1V32h-1V31h-1h-1V32h-1h-1V33h-1h-1V34h-1V35h-1V34h-1V33h-1V30h-1V39h-1V33h-1V32h-1V33h-1V34h-1h-1h-1V32h-1h-1h-1V35h-1h-1V32h-1V36h-1V35h-1V32h-1V34h-1h-1h-1h-1V30h-1V32h-1h-1V33h-1V34h-1V31h-1h-1V33h-1h-1V32h-1V33h-1V32h-1V31h-1V33h-1V34h-1V32h-1V31h-1V33h-1h-1h-1V32h-1h-1V31h-1V32h-1V33h-1V31h-1V32h-1h-1V33h-1h-1V35h-1V31h-1V33h-1h-1V31h-1h-1h-1h-1h-1V32h-1h-1h-1V34h-1h-1V32h-1V33h-1V34h-1V31h-1V32h-1V33h-1V34h-1h-1V33h-1V32h-1V31h-1V33h-1h-1V32h-1V31h-1V32h-1h-1V31h-1V33h-1h-1V31h-1V32h-1V33h-1h-1h-1h-1V41h-1V37h-1V41h-1V36h-1V37h-1V35h-1V37h-1V36h-1V33h-1h-1V34h-1V36h-1V37h-1V38h-1V37h-1V34h-1V33h-1V42h-1V34h-1h-1V36h-1V35h-1h-1V36h-1V34h-1V38h-1V35h-1V38h-1V37h-1h-1h-1V34h-1V39h-1V33h-1V35h-1V33h-1V32h-1V33h-1V41h-1V33h-1V35h-1h-1V32h-1V33h-1V38h-1V36h-1h-1V37h-1V34h-1V33h-1h-1V34h-1V33h-1V36h-1V37h-1V32h-1V33h-1V35h-1V31h-1V35h-1V33h-1V35h-1V32h-1V36h-1V34h-1V33h-1V37h-1V38h-1V37h-1V38h-1V35h-1V34h-1V32h-1V35h-1V32h-1V37h-1V33h-1V35h-1V37h-1h-1h-1V36h-1h-1h-1V38h-1V34h-1V33h-1V34h-1h-1V36h-1V34h-1V36h-1V38h-1V36h-1V35h-1h-1V34h-1V35h-1V37h-1V36h-1V35h-1V37h-1V34h-1V37h-1h-1V36h-1V37h-1V36h-1V38h-1V34h-1V38h-1V39h-1V38h-1V37h-1V38h-1V36h-1h-1V34h-1V33h-1V31h-1V33h-1V32h-1V31h-1h-1h-1h-1V32h-1h-1V33h-1V32h-1h-1h-1V34h-1V31h-1V37h-1V32h-1V31h-1V32h-1V31h-1V37h-1V33h-1V32h-1h-1V33h-1h-1h-1h-1h-1h-1V31h-1h-1V32h-1V33h-1V31h-1h-1h-1h-1h-1h-1h-1V34h-1V31h-1V32h-1V31h-1h-1h-1h-1V32h-1V30h-1V32h-1V34h-1V31h-1V34h-1V32h-1V35h-1h-1V34h-1V35h-1h-1h-1V34h-1V32h-1h-1V35h-1V37h-1V33h-1V35h-1V32h-1h-1V35h-1V33h-1V34h-1V32h-1V35h-1V33h-1V34h-1V32h-1V34h-1h-1V33h-1V34h-1V35h-1h-1V34h-1V32h-1V35h-1V32h-1V33h-1V34h-1h-1V32h-1h-1V33h-1V31h-1V34h-1V31h-1h-1V32h-1V33h-1V32h-1h-1h-1V33h-1h-1V32h-1V33h-1V31h-1V33h-1V31h-1V33h-1h-1h-1V31h-1V32h-1V34h-1V31h-1V33h-1h-1V32h-1h-1V33h-1V34h-1V33h-1V31h-1V32h-1h-1h-1h-1h-1h-1V33h-1h-1h-1h-1V34h-1V33h-1V36h-1V32h-1V34h-1V32h-1V31h-1h-1V34h-1V31h-1h-1V32h-1V31h-1h-1h-1V32h-1h-1V33h-1V32h-1V33h-1V34h-1V33h-1V34h-1V32h-1h-1h-1V33h-1V32h-1V33h-1V31h-1h-1V32h-1V33h-1V32h-1V34h-1V33h-1h-1V32h-1V31h-1V32h-1h-1h-1V30h-1V32h-1V33h-1V34h-1V32h-1V35h-1V40h-1V34h-1V33h-1V34h-1V33h-1V35h-1V33h-1V36h-1V33h-1V35h-1h-1V32h-1V38h-1V41h-1V36h-1h-1V34h-1V33h-1V35h-1V34h-1V36h-1V34h-1V35h-1h-1V32h-1V34h-1V32h-1V34h-1V37h-1V36h-1V34h-1V36h-1V34h-1V35h-1V33h-1V35h-1Z" fill="#3c3cce"/><path d="M0 28V26h1h1h1h1h1h1h1h1h1h1h1h1h1h1h1h1h1h1h1h1h1h1h1h1h1h1h1h1h1h1h1h1h1h1h1h1h1h1h1h1h1V27h1h1h1h1h1h1h1h1h1h1V26h1h1h1h1h1h1h1h1h1h1h1h1h1h1h1h1V27h1h1h1h1h1h1h1h1h1h1h1h1V26h1h1h1h1h1h1V27h1h1h1h1h1h1h1h1h1h1V26h1h1h1h1h1h1h1h1V27h1h1h1h1h1h1h1h1h1h1h1h1h1h1h1h1h1h1h1V26h1h1h1h1h1h1h1h1h1h1h1h1h1h1h1h1h1h1h1h1h1h1h1h1h1h1h1h1h1h1h1h1h1h1h1h1h1h1h1h1h1h1h1h1h1h1h1V27h1h1h1h1h1h1h1h1h1h1h1h1h1h1h1V26h1h1h1h1h1h1h1h1V27h1h1h1h1h1h1h1h1h1h1h1h1h1V26h1h1h1h1h1V27h1h1h1h1h1h1h1h1h1V26h1h1h1h1h1h1h1h1h1h1h1h1h1h1h1h1h1h1h1h1h1h1h1h1h1h1h1h1V25h1h1h1h1h1h1h1h1h1h1h1h1V26h1h1h1h1h1V25h1h1V26h1h1h1h1h1h1h1h1h1h1h1h1h1h1h1h1h1h1h1h1h1h1h1h1h1h1h1h1h1h1h1h1h1h1h1h1V25h1h1h1h1h1h1h1h1h1V26h1h1h1h1h1h1h1h1h1h1V25h1h1h1h1h1h1h1h1h1h1h1h1h1h1h1h1h1V26h1h1h1h1V27h1h1h1h1h1h1h1h1h1h1h1h1h1h1V26h1h1h1h1h1h1h1h1h1h1h1h1V27h1h1h1h1h1h1h1h1h1h1h1h1h1h1h1h1h1h1h1h1h1h1h1h1h1h1h1h1h1h1h1h1h1h1V26h1h1h1h1h1h1h1h1h1h1h1h1h1h1h1h1h1h1h1h1h1h1h1h1h1h1V27h1V26h1h1h1h1h1h1h1V27h1h1h1h1h1h1h1h1h1h1h1h1h1h1h1h1h1h1h1h1h1h1h1h1h1h1h1h1h1h1V26h1h1h1h1h1V27h1h1h1h1h1h1V26h1h1h1h1h1h1h1h1h1h1h1h1h1h1h1h1h1h1h1h1h1h1h1h1h1h1h1h1h1h1h1h1h1h1h1h1V25h1h1h1h1h1h1h1V26h1h1h1h1h1h1h1h1h1h1h1h1h1h1h1h1h1h1h1h1h1h1h1h1h1h1h1h1h1h1h1h1h1h1h1h1h1h1h1h1h1h1h1h1h1h1h1h1h1h1h1h1h1h1h1h1h1h1h1h1h1h1h1h1h1h1h1h1h1h1h1V25h1h1h1h1h1h1h1h1h1h1h1h1h1h1h1h1V26h1h1h1h1h1h1h1h1h1h1h1h1h1h1h1h1V27h1h1h1V26h1h1h1h1h1h1h1h1h1h1h1h1h1h1h1h1h1V27h1h1h1h1h1h1h1h1h1h1V26h1h1h1h1h1h1h1h1h1h1h1h1h1h1h1h1h1h1h1h1V27h1V26h1h1h1h1h1h1h1h1h1h1h1h1h1h1h1h1h1h1h1h1h1h1h1V25h1h1h1h1V26h1h1h1h1h1h1V27h1h1h1h1h1h1h1h1h1h1h1h1h1h1h1h1h1h1h1h1h1h1h1h1h1h1h1h1h1V26h1h1h1h1h1h1h1V27h1V26h1h1h1h1h1h1h1h1h1h1h1h1h1h1h1h1h1h1h1h1h1h1h1h1h1h1h1h1h1h1h1h1h1h1h1h1h1h1h1h1h1V25h1h1h1h1h1V26h1h1h1h1h1h1h1h1h1h1h1h1h1h1h1V27h1h1h1h1h1h1h1h1h1V26h1h1h1h1h1h1h1h1h1h1h1h1V27h1h1h1h1h1h1h1h1h1h1h1h1h1h1h1h1h1h1h1h1h1h1h1h1h1h1h1h1h1h1h1h1h1h1h1h1h1h1h1h1h1h1h1h1h1h1h1h1h1h1h1h1V26h1h1h1h1h1h1h1h1h1V27h1h1h1h1h1V26h1h1h1h1h1h1h1h1h1h1h1h1h1h1h1h1h1h1h1h1h1h1h1h1h1h1h1h1h1h1h1h1h1h1h1h1h1h1h1h1h1h1h1h1h1h1h1h1h1h1h1h1h1h1h1h1h1h1h1h1h1h1h1h1h1h1h1h1h1h1h1h1h1h1h1h1h1h1h1h1h1h1h1h1h1h1h1h1h1h1h1h1h1h1h1h1h1h1V27h1V26h1h1h1h1h1h1h1h1h1h1h1h1h1h1V27h1h1h1h1h1h1h1h1h1V26h1h1h1h1h1h1h1h1h1h1h1h1h1h1h1h1h1h1h1h1h1h1h1h1h1h1h1h1h1h1h1h1h1h1h1V27h1h1h1V26h1h1h1h1h1h1h1h1h1h1h1h1h1h1h1h1h1h1h1h1h1h1h1h1h1h1h1h1h1h1h1h1h1h1h1h1h1h1h1h1h1h1h1h1h1h1h1h1h1h1V27h1h1h1h1h1h1h1h1h1h1h1h1h1h1V26h1h1h1h1h1h1h1h1h1h1h1h1h1h1h1h1h1h1h1h1h1h1h1h1h1h1h1h1h1h1h1h1h1h1h1h1h1h1h1h1h1h1h1h1h1h1h1h1h1h1h1h1h1h1h1h1h1h1h1h1h1h1h1h1h1h1h1h1V25h1h1h1h1h1h1h1h1h1h1h1h1h1h1h1h1h1h1h1h1h1h1h1h1h1h1h1h1h1h1h1h1h1h1h1h1h1h1h1h1h1h1h1h1h1h1V26h1h1h1h1h1h1h1h1h1h1h1h1h1h1h1h1h1h1h1h1h1h1h1h1h1h1V25h1h1h1h1h1h1h1h1h1V26h1h1h1h1h1h1h1h1h1V25h1h1h1h1h1h1h1h1h1V26h1h1h1h1h1V27h1h1h1h1h1h1V26h1h1h1h1h1h1h1h1h1h1h1h1h1h1h1V27h1h1h1h1h1h1h1h1h1h1V26h1h1h1h1h1h1h1h1h1h1h1h1h1h1h1h1h1h1h1V27h1h1h1h1h1h1h1h1h1h1h1h1h1h1h1h1h1h1h1h1h1V26h1h1h1h1h1h1h1h1h1h1h1h1h1h1h1h1h1h1h1h1h1h1h1h1h1h1V25h1h1h1h1h1h1h1V26h1h1h1h1h1h1h1h1h1h1h1h1h1h1h1h1h1h1h1h1h1h1h1h1h1h1h1h1h1h1h1h1h1h1h1h1h1h1h1h1h1h1h1h1h1h1h1h1h1h1h1h1h1h1h1h1V25h1h1h1h1V26h1h1h1h1h1h1h1h1h1h1h1h1V25h1h1h1h1h1h1h1h1h1h1V26h1V27h1h1V26h1h1h1h1h1h1h1h1h1h1h1h1h1h1h1h1h1h1h1h1h1h1h1h1V27h1h1h1h1h1h1V26h1h1h1h1h1h1h1h1h1h1h1h1h1h1h1h1V27h1h1h1h1h1h1h1h1h1h1h1V26h1h1h1h1h1h1h1h1h1h1h1h1h1h1V27h1V26h1h1h1h1h1h1h1h1h1h1h1h1h1h1h1h1h1h1h1h1h1h1h1h1h1h1h1h1h1h1h1h1h1h1h1h1h1h1h1h1h1h1h1h1h1h1h1V27h1V26h1V27h1V26h1h1h1h1h1h1h1h1h1h1h1h1h1h1h1h1h1h1h1h1h1h1h1V27h1h1V26h1V27h1V26h1V27h1V26h1V27h1h1V26h1V28h1h1h1h1h1h1h1h1h1h1h1h1h1h1h1h1h1h1h1h1h1h1h1h1h1h1h1h1h1h1h1h1h1h1h1h1h1h1h1h1h1h1h1h1h1h1h1h1h1h1h1h1h1h1h1h1h1h1h1h1h1h1h1h1h1h1h1h1h1h1h1h1h1h1h1h1h1h1h1h1h1h1h1h1h1h1h1h1h1h1h1h1h1h1h1h1h1h1h1h1h1h1h1h1h1h1h1h1h1h1h1h1h1h1h1h1h1h1h1h1h1h1h1h1h1h1h1h1h1h1h1h1h1h1h1h1h1h1h1h1h1h1h1V28V28h-1h-1h-1h-1h-1h-1h-1h-1h-1h-1h-1h-1h-1h-1h-1h-1h-1h-1h-1h-1h-1h-1h-1h-1h-1h-1h-1h-1h-1h-1h-1h-1h-1h-1h-1h-1h-1h-1h-1h-1h-1h-1h-1h-1h-1h-1h-1h-1h-1h-1h-1h-1h-1h-1h-1h-1h-1h-1h-1h-1h-1h-1h-1h-1h-1h-1h-1h-1h-1h-1h-1h-1h-1h-1h-1h-1h-1h-1h-1h-1h-1h-1h-1h-1h-1h-1h-1h-1h-1h-1h-1h-1h-1h-1h-1h-1h-1h-1h-1h-1h-1h-1h-1h-1h-1h-1h-1h-1h-1h-1h-1h-1h-1h-1h-1h-1h-1h-1h-1h-1h-1h-1h-1h-1h-1h-1h-1h-1h-1h-1h-1h-1h-1h-1h-1h-1h-1h-1h-1h-1h-1h-1h-1V30h-1V29h-1h-1V30h-1V29h-1V30h-1V29h-1V30h-1V29h-1h-1V30h-1h-1h-1h-1h-1h-1h-1h-1h-1h-1h-1h-1h-1h-1h-1h-1h-1h-1h-1h-1h-1h-1h-1V29h-1V30h-1V29h-1V30h-1h-1h-1h-1h-1h-1h-1h-1h-1h-1h-1h-1h-1h-1h-1h-1h-1h-1h-1h-1h-1h-1h-1h-1h-1h-1h-1h-1h-1h-1h-1h-1h-1h-1h-1h-1h-1h-1h-1h-1h-1h-1h-1h-1h-1h-1h-1V29h-1V30h-1h-1h-1h-1h-1h-1h-1h-1h-1h-1h-1h-1h-1h-1V29h-1h-1h-1h-1h-1h-1h-1h-1h-1h-1h-1V30h-1h-1h-1h-1h-1h-1h-1h-1h-1h-1h-1h-1h-1h-1h-1h-1V29h-1h-1h-1h-1h-1h-1V30h-1h-1h-1h-1h-1h-1h-1h-1h-1h-1h-1h-1h-1h-1h-1h-1h-1h-1h-1h-1h-1h-1h-1h-1V29h-1h-1V30h-1V31h-1h-1h-1h-1h-1h-1h-1h-1h-1h-1V30h-1h-1h-1h-1h-1h-1h-1h-1h-1h-1h-1h-1V31h-1h-1h-1h-1V30h-1h-1h-1h-1h-1h-1h-1h-1h-1h-1h-1h-1h-1h-1h-1h-1h-1h-1h-1h-1h-1h-1h-1h-1h-1h-1h-1h-1h-1h-1h-1h-1h-1h-1h-1h-1h-1h-1h-1h-1h-1h-1h-1h-1h-1h-1h-1h-1h-1h-1h-1h-1h-1h-1h-1h-1V31h-1h-1h-1h-1h-1h-1h-1V30h-1h-1h-1h-1h-1h-1h-1h-1h-1h-1h-1h-1h-1h-1h-1h-1h-1h-1h-1h-1h-1h-1h-1h-1h-1h-1V29h-1h-1h-1h-1h-1h-1h-1h-1h-1h-1h-1h-1h-1h-1h-1h-1h-1h-1h-1h-1h-1V30h-1h-1h-1h-1h-1h-1h-1h-1h-1h-1h-1h-1h-1h-1h-1h-1h-1h-1h-1V29h-1h-1h-1h-1h-1h-1h-1h-1h-1h-1V30h-1h-1h-1h-1h-1h-1h-1h-1h-1h-1h-1h-1h-1h-1h-1V29h-1h-1h-1h-1h-1h-1V30h-1h-1h-1h-1h-1V31h-1h-1h-1h-1h-1h-1h-1h-1h-1V30h-1h-1h-1h-1h-1h-1h-1h-1h-1V31h-1h-1h-1h-1h-1h-1h-1h-1h-1V30h-1h-1h-1h-1h-1h-1h-1h-1h-1h-1h-1h-1h-1h-1h-1h-1h-1h-1h-1h-1h-1h-1h-1h-1h-1h-1V31h-1h-1h-1h-1h-1h-1h-1h-1h-1h-1h-1h-1h-1h-1h-1h-1h-1h-1h-1h-1h-1h-1h-1h-1h-1h-1h-1h-1h-1h-1h-1h-1h-1h-1h-1h-1h-1h-1h-1h-1h-1h-1h-1h-1h-1h-1V30h-1h-1h-1h-1h-1h-1h-1h-1h-1h-1h-1h-1h-1h-1h-1h-1h-1h-1h-1h-1h-1h-1h-1h-1h-1h-1h-1h-1h-1h-1h-1h-1h-1h-1h-1h-1h-1h-1h-1h-1h-1h-1h-1h-1h-1h-1h-1h-1h-1h-1h-1h-1h-1h-1h-1h-1h-1h-1h-1h-1h-1h-1h-1h-1h-1h-1h-1h-1V29h-1h-1h-1h-1h-1h-1h-1h-1h-1h-1h-1h-1h-1h-1V30h-1h-1h-1h-1h-1h-1h-1h-1h-1h-1h-1h-1h-1h-1h-1h-1h-1h-1h-1h-1h-1h-1h-1h-1h-1h-1h-1h-1h-1h-1h-1h-1h-1h-1h-1h-1h-1h-1h-1h-1h-1h-1h-1h-1h-1h-1h-1h-1h-1h-1V29h-1h-1h-1V30h-1h-1h-1h-1h-1h-1h-1h-1h-1h-1h-1h-1h-1h-1h-1h-1h-1h-1h-1h-1h-1h-1h-1h-1h-1h-1h-1h-1h-1h-1h-1h-1h-1h-1h-1V29h-1h-1h-1h-1h-1h-1h-1h-1h-1V30h-1h-1h-1h-1h-1h-1h-1h-1h-1h-1h-1h-1h-1h-1V29h-1V30h-1h-1h-1h-1h-1h-1h-1h-1h-1h-1h-1h-1h-1h-1h-1h-1h-1h-1h-1h-1h-1h-1h-1h-1h-1h-1h-1h-1h-1h-1h-1h-1h-1h-1h-1h-1h-1h-1h-1h-1h-1h-1h-1h-1h-1h-1h-1h-1h-1h-1h-1h-1h-1h-1h-1h-1h-1h-1h-1h-1h-1h-1h-1h-1h-1h-1h-1h-1h-1h-1h-1h-1h-1h-1h-1h-1h-1h-1h-1h-1h-1h-1h-1h-1h-1h-1h-1h-1h-1h-1h-1h-1h-1h-1h-1h-1h-1h-1V29h-1h-1h-1h-1h-1V30h-1h-1h-1h-1h-1h-1h-1h-1h-1V29h-1h-1h-1h-1h-1h-1h-1h-1h-1h-1h-1h-1h-1h-1h-1h-1h-1h-1h-1h-1h-1h-1h-1h-1h-1h-1h-1h-1h-1h-1h-1h-1h-1h-1h-1h-1h-1h-1h-1h-1h-1h-1h-1h-1h-1h-1h-1h-1h-1h-1h-1h-1V30h-1h-1h-1h-1h-1h-1h-1h-1h-1h-1h-1h-1V29h-1h-1h-1h-1h-1h-1h-1h-1h-1V30h-1h-1h-1h-1h-1h-1h-1h-1h-1h-1h-1h-1h-1h-1h-1V31h-1h-1h-1h-1h-1V30h-1h-1h-1h-1h-1h-1h-1h-1h-1h-1h-1h-1h-1h-1h-1h-1h-1h-1h-1h-1h-1h-1h-1h-1h-1h-1h-1h-1h-1h-1h-1h-1h-1h-1h-1h-1h-1h-1h-1h-1h-1V29h-1V30h-1h-1h-1h-1h-1h-1h-1V29h-1h-1h-1h-1h-1h-1h-1h-1h-1h-1h-1h-1h-1h-1h-1h-1h-1h-1h-1h-1h-1h-1h-1h-1h-1h-1h-1h-1h-1V30h-1h-1h-1h-1h-1h-1V31h-1h-1h-1h-1V30h-1h-1h-1h-1h-1h-1h-1h-1h-1h-1h-1h-1h-1h-1h-1h-1h-1h-1h-1h-1h-1h-1h-1V29h-1V30h-1h-1h-1h-1h-1h-1h-1h-1h-1h-1h-1h-1h-1h-1h-1h-1h-1h-1h-1h-1V29h-1h-1h-1h-1h-1h-1h-1h-1h-1h-1V30h-1h-1h-1h-1h-1h-1h-1h-1h-1h-1h-1h-1h-1h-1h-1h-1h-1V29h-1h-1h-1V30h-1h-1h-1h-1h-1h-1h-1h-1h-1h-1h-1h-1h-1h-1h-1h-1V31h-1h-1h-1h-1h-1h-1h-1h-1h-1h-1h-1h-1h-1h-1h-1h-1V30h-1h-1h-1h-1h-1h-1h-1h-1h-1h-1h-1h-1h-1h-1h-1h-1h-1h-1h-1h-1h-1h-1h-1h-1h-1h-1h-1h-1h-1h-1h-1h-1h-1h-1h-1h-1h-1h-1h-1h-1h-1h-1h-1h-1h-1h-1h-1h-1h-1h-1h-1h-1h-1h-1h-1h-1h-1h-1h-1h-1h-1h-1h-1h-1h-1h-1h-1h-1h-1h-1h-1V31h-1h-1h-1h-1h-1h-1h-1V30h-1h-1h-1h-1h-1h-1h-1h-1h-1h-1h-1h-1h-1h-1h-1h-1h-1h-1h-1h-1h-1h-1h-1h-1h-1h-1h-1h-1h-1h-1h-1h-1h-1h-1h-1h-1V29h-1h-1h-1h-1h-1h-1V30h-1h-1h-1h-1h-1V29h-1h-1h-1h-1h-1h-1h-1h-1h-1h-1h-1h-1h-1h-1h-1h-1h-1h-1h-1h-1h-1h-1h-1h-1h-1h-1h-1h-1h-1h-1V30h-1h-1h-1h-1h-1h-1h-1V29h-1V30h-1h-1h-1h-1h-1h-1h-1h-1h-1h-1h-1h-1h-1h-1h-1h-1h-1h-1h-1h-1h-1h-1h-1h-1h-1h-1V29h-1h-1h-1h-1h-1h-1h-1h-1h-1h-1h-1h-1h-1h-1h-1h-1h-1h-1h-1h-1h-1h-1h-1h-1h-1h-1h-1h-1h-1h-1h-1h-1h-1h-1V30h-1h-1h-1h-1h-1h-1h-1h-1h-1h-1h-1h-1V29h-1h-1h-1h-1h-1h-1h-1h-1h-1h-1h-1h-1h-1h-1V30h-1h-1h-1h-1V31h-1h-1h-1h-1h-1h-1h-1h-1h-1h-1h-1h-1h-1h-1h-1h-1h-1V30h-1h-1h-1h-1h-1h-1h-1h-1h-1h-1V31h-1h-1h-1h-1h-1h-1h-1h-1h-1V30h-1h-1h-1h-1h-1h-1h-1h-1h-1h-1h-1h-1h-1h-1h-1h-1h-1h-1h-1h-1h-1h-1h-1h-1h-1h-1h-1h-1h-1h-1h-1h-1h-1h-1h-1h-1V31h-1h-1V30h-1h-1h-1h-1h-1V31h-1h-1h-1h-1h-1h-1h-1h-1h-1h-1h-1h-1V30h-1h-1h-1h-1h-1h-1h-1h-1h-1h-1h-1h-1h-1h-1h-1h-1h-1h-1h-1h-1h-1h-1h-1h-1h-1h-1h-1h-1V29h-1h-1h-1h-1h-1h-1h-1h-1h-1V30h-1h-1h-1h-1h-1V29h-1h-1h-1h-1h-1h-1h-1h-1h-1h-1h-1h-1h-1V30h-1h-1h-1h-1h-1h-1h-1h-1V29h-1h-1h-1h-1h-1h-1h-1h-1h-1h-1h-1h-1h-1h-1h-1V30h-1h-1h-1h-1h-1h-1h-1h-1h-1h-1h-1h-1h-1h-1h-1h-1h-1h-1h-1h-1h-1h-1h-1h-1h-1h-1h-1h-1h-1h-1h-1h-1h-1h-1h-1h-1h-1h-1h-1h-1h-1h-1h-1h-1h-1h-1h-1V29h-1h-1h-1h-1h-1h-1h-1h-1h-1h-1h-1h-1h-1h-1h-1h-1h-1h-1h-1V30h-1h-1h-1h-1h-1h-1h-1h-1V29h-1h-1h-1h-1h-1h-1h-1h-1h-1h-1V30h-1h-1h-1h-1h-1h-1V29h-1h-1h-1h-1h-1h-1h-1h-1h-1h-1h-1h-1V30h-1h-1h-1h-1h-1h-1h-1h-1h-1h-1h-1h-1h-1h-1h-1h-1V29h-1h-1h-1h-1h-1h-1h-1h-1h-1h-1V30h-1h-1h-1h-1h-1h-1h-1h-1h-1h-1h-1h-1h-1h-1h-1h-1h-1h-1h-1h-1h-1h-1h-1h-1h-1h-1h-1h-1h-1h-1h-1h-1h-1h-1h-1h-1h-1h-1h-1h-1h-1Z" fill="#6666de"/><rect x="253" y="0" width="2" height="56" fill="#000"/><rect x="1155" y="0" width="2" height="56" fill="#000"/></svg>
<div style="left:4px;top:287px;width:1895px;height:59px;background:#000"></div>
<div style="left:5px;top:288px;width:96px;height:56px;background:#f6f7fc"></div>
<div style="left:5px;top:288px;width:17px;height:18px;background:#cdd9f1;border-top:1px solid #eef2fc;border-left:1px solid #eef2fc;border-right:1px solid #9aa1b5;border-bottom:1px solid #9aa1b5"></div>
<svg style="left:5px;top:288px" width="17" height="18" viewBox="0 0 17 18"><path d="M5.6 5.4 L12.4 12.2 M12.4 5.4 L5.6 12.2" stroke="#000" stroke-width="1.3"/></svg>
<div style="left:23px;top:288px;width:77px;height:18px;background:#cdd9f1;border-top:1px solid #eef2fc;border-left:1px solid #eef2fc;border-right:1px solid #9aa1b5;border-bottom:1px solid #9aa1b5"></div>
<span style="left:26px;top:291.69px;font-size:11px;line-height:11px;color:#000;font-weight:normal;letter-spacing:0.204px;">Vocoder</span>
<svg style="left:86px;top:293px" width="12" height="8" viewBox="0 0 12 8"><path d="M0.6 0.8 H11.4 L6 6.6 Z" fill="#000"/></svg>
<div style="left:5px;top:306px;width:47px;height:18px;background:#cdd9f1;border-top:1px solid #eef2fc;border-left:1px solid #eef2fc;border-right:1px solid #9aa1b5;border-bottom:1px solid #9aa1b5"></div>
<span style="left:16.8px;top:309.89px;font-size:11px;line-height:11px;color:#000;font-weight:normal;letter-spacing:-0.317px;">Mute</span>
<div style="left:53px;top:306px;width:47px;height:18px;background:#cdd9f1;border-top:1px solid #eef2fc;border-left:1px solid #eef2fc;border-right:1px solid #9aa1b5;border-bottom:1px solid #9aa1b5"></div>
<span style="left:65.8px;top:309.89px;font-size:11px;line-height:11px;color:#000;font-weight:normal;letter-spacing:-0.258px;">Solo</span>
<div style="left:100px;top:324px;width:1px;height:20px;background:#000"></div>
<div style="left:100px;top:288px;width:1px;height:36px;background:#9aa1b5"></div>
<div style="left:5px;top:326px;width:17px;height:18px;background:#cdd9f1;border-top:1px solid #eef2fc;border-left:1px solid #eef2fc;border-right:1px solid #9aa1b5;border-bottom:1px solid #9aa1b5"></div>
<svg style="left:5px;top:326px" width="17" height="18" viewBox="0 0 17 18"><path d="M3.6 11.6 H14.2 L8.9 5.6 Z" fill="#000"/></svg>
<div style="left:23px;top:326px;width:59px;height:18px;background:#cdd9f1;border-top:1px solid #eef2fc;border-left:1px solid #eef2fc;border-right:1px solid #9aa1b5;border-bottom:1px solid #9aa1b5"><span style="left:2px;top:2.4px;font-size:11px;line-height:12px;letter-spacing:0.25px;color:#000">Auswählen</span></div>
<div style="left:101px;top:288px;width:21px;height:56px;background:#fbfbfe"></div>
<span style="left:109.3px;top:289.64px;font-size:12px;line-height:12px;color:#000;font-weight:normal;">1</span>
<span style="left:109px;top:310.44px;font-size:12px;line-height:12px;color:#000;font-weight:normal;">0</span>
<span style="left:105px;top:329.64px;font-size:12px;line-height:12px;color:#000;font-weight:normal;">-1</span>
<div style="left:116px;top:315px;width:5px;height:2px;background:#000"></div>
<div style="left:119px;top:343px;width:2px;height:1px;background:#000"></div>
<div style="left:121px;top:288px;width:1px;height:56px;background:#a0a0a0"></div>
<div style="left:122px;top:288px;width:1775px;height:56px;background:#c2c2c2"></div>
<svg style="left:122px;top:288px" width="1775" height="56" viewBox="0 0 1775 56" shape-rendering="crispEdges"><path d="M0 28V16h1h1h1V20h1V17h1h1h1V16h1h1h1h1h1h1h1V19h1V16h1h1V19h1h1V18h1V16h1V19h1V16h1V22h1h1h1V18h1h1V16h1h1h1V18h1V22h1V23h1h1V21h1V15h1V20h1V22h1h1V16h1h1h1V15h1h1h1h1h1h1V16h1V20h1V15h1h1h1h1h1h1V19h1V20h1V22h1V21h1h1h1h1V18h1h1V15h1h1h1V19h1h1h1h1V17h1V15h1h1V16h1V21h1V22h1h1V21h1V16h1V15h1h1h1V17h1h1V15h1h1V20h1h1V15h1V16h1h1V15h1h1h1V18h1V22h1V24h1V19h1V20h1V19h1V22h1h1V19h1h1h1h1h1h1h1h1V23h1V19h1h1h1V20h1h1V19h1h1h1V20h1V23h1h1h1V19h1V22h1V21h1V20h1V19h1V18h1h1h1V19h1V16h1h1V15h1V19h1h1V17h1h1V20h1h1V17h1V22h1V15h1h1h1V21h1V15h1h1h1h1V16h1V20h1V23h1V21h1V19h1V15h1h1V22h1V15h1h1h1h1h1h1h1h1V18h1h1h1V15h1h1h1V20h1V21h1V23h1V16h1h1h1h1h1V22h1h1V20h1V18h1h1h1h1h1V16h1h1h1h1h1V17h1h1V20h1h1h1V18h1V21h1h1V16h1h1h1V19h1V22h1h1h1h1h1V19h1V16h1h1h1V23h1h1h1V22h1V21h1h1V22h1h1h1V18h1h1V15h1h1h1h1h1h1h1V20h1V15h1V22h1V20h1h1h1V19h1V24h1V21h1V20h1V16h1h1V22h1V18h1h1h1V16h1V17h1h1h1V16h1h1h1V20h1V16h1h1h1h1V20h1V24h1V21h1V19h1h1V17h1V15h1V19h1V21h1V15h1h1h1h1h1h1h1h1V22h1h1V20h1V15h1h1h1h1V16h1h1V19h1V15h1h1h1h1V20h1V18h1V23h1V21h1V22h1V17h1V22h1V16h1V19h1h1V22h1V18h1V22h1h1h1h1h1V16h1V21h1h1h1V20h1h1h1h1V16h1V17h1V20h1V21h1V19h1V15h1h1h1h1V20h1h1h1V15h1h1h1h1V22h1V19h1V15h1h1h1h1h1h1h1h1h1h1h1h1h1V20h1h1V19h1h1V15h1h1V18h1h1h1V19h1h1V17h1V20h1V21h1V18h1V15h1h1V18h1V20h1h1V15h1V19h1h1V15h1h1h1V16h1V22h1h1V16h1h1V22h1h1V24h1V16h1V20h1V16h1h1h1h1h1V18h1V16h1h1h1h1V17h1V21h1h1V23h1V15h1h1h1h1V21h1V20h1h1V19h1h1V18h1h1h1V15h1h1V20h1h1h1h1h1V19h1h1h1V15h1h1h1V16h1h1V22h1h1V15h1V19h1V22h1V23h1V21h1h1V19h1V23h1V19h1h1h1h1h1h1V24h1h1V19h1h1V21h1V24h1V22h1V21h1V20h1h1h1h1V22h1h1h1V19h1h1h1h1h1V23h1h1V19h1h1h1h1h1h1h1h1h1h1h1V21h1h1V19h1h1h1V22h1h1V19h1h1V22h1h1V21h1h1V24h1V19h1h1V16h1V18h1V16h1h1h1h1h1h1V19h1h1h1h1V16h1h1h1V22h1h1V16h1h1V18h1h1h1V17h1V16h1h1h1V17h1h1h1h1V19h1h1V21h1h1h1V22h1V21h1V19h1V15h1h1V21h1V17h1V20h1h1h1V18h1V15h1h1V21h1h1V15h1h1h1V21h1V19h1V18h1V20h1V16h1V22h1h1h1V16h1h1h1h1h1h1h1V21h1V19h1h1V16h1h1h1h1V22h1V16h1V23h1V21h1V19h1V15h1h1h1V20h1h1V15h1V22h1V20h1V15h1h1h1h1h1h1V16h1V19h1V15h1V18h1V20h1h1V19h1h1V16h1h1V22h1V15h1h1h1h1V21h1h1h1h1V15h1h1h1V21h1h1V19h1h1h1V15h1h1h1h1V19h1h1h1h1V16h1V20h1V15h1V22h1h1V20h1V15h1V21h1V20h1V15h1h1h1V18h1V15h1h1V22h1V21h1h1V15h1h1V21h1h1V19h1V20h1V19h1V16h1V21h1h1h1V18h1V19h1h1V16h1h1h1h1V20h1h1V16h1V17h1V20h1h1h1V16h1h1h1h1h1V19h1h1V16h1h1h1V19h1h1h1V16h1V21h1V24h1h1V22h1V19h1h1V16h1V19h1V16h1V18h1h1h1V16h1h1h1h1h1h1h1h1V20h1h1V16h1V22h1h1V17h1V19h1h1V17h1h1h1V16h1h1h1h1V21h1h1V16h1V19h1V20h1h1V19h1V16h1V20h1V21h1V19h1V16h1V21h1V16h1V21h1h1V16h1V20h1V17h1h1V16h1h1V20h1V23h1h1V20h1h1h1V22h1h1V18h1h1h1V15h1h1h1h1h1V19h1h1h1V18h1V21h1V22h1V19h1h1h1h1h1V21h1h1V19h1h1V21h1h1V22h1V23h1V19h1V21h1h1V19h1h1h1V21h1V19h1V18h1V15h1h1h1h1V19h1V17h1V21h1V22h1V16h1V20h1V21h1V19h1h1V15h1h1h1V16h1h1h1V15h1V20h1V22h1V23h1V21h1V19h1V20h1V21h1V19h1h1h1h1h1h1h1h1h1h1h1h1h1h1V23h1h1V20h1h1h1h1V19h1h1h1h1h1V21h1V19h1h1V17h1h1h1V15h1h1h1h1h1V20h1V18h1h1V15h1h1h1h1V22h1V15h1h1h1V22h1h1h1V19h1h1V22h1h1V15h1h1V19h1h1h1V18h1V21h1V23h1V21h1V17h1h1V16h1h1h1h1h1h1h1V18h1h1V16h1h1V19h1V21h1h1V16h1h1V18h1V22h1V16h1h1V19h1V17h1V16h1h1V22h1h1h1V21h1V22h1V21h1V16h1h1V18h1h1V21h1h1V16h1h1h1V22h1h1V16h1h1V19h1h1V17h1h1V16h1h1h1h1V20h1h1V21h1V18h1h1V19h1h1h1V16h1V18h1h1V21h1h1h1V16h1h1V22h1V18h1h1h1V22h1h1V16h1V18h1h1V20h1h1V19h1h1h1V16h1h1h1h1h1h1V19h1V21h1V20h1V15h1h1h1V20h1h1h1V15h1h1h1V18h1h1V21h1h1V15h1h1V18h1V15h1V17h1h1V22h1h1V18h1h1h1V15h1V19h1V22h1V24h1h1V19h1h1h1h1V22h1h1V19h1h1h1h1h1h1h1h1V21h1h1V23h1V20h1V18h1V15h1h1h1V18h1h1V15h1h1V17h1V20h1V15h1h1V17h1V20h1h1V21h1V15h1h1h1V18h1h1h1V15h1V19h1h1V18h1V21h1h1h1h1V16h1h1h1V15h1h1h1h1V22h1V21h1V19h1V15h1V19h1h1V18h1V15h1V22h1h1h1V15h1h1h1V21h1V23h1V24h1V21h1V17h1V18h1V16h1h1V22h1h1V21h1h1h1V16h1h1h1V21h1V16h1h1h1V22h1h1V16h1h1h1h1h1V22h1V18h1V21h1V19h1V21h1h1V17h1V15h1h1V18h1V19h1V18h1V20h1V15h1h1h1h1h1h1h1h1h1h1h1V20h1h1V18h1h1V15h1h1h1h1V19h1V22h1h1V19h1h1h1V22h1h1V19h1V23h1h1V21h1h1h1V19h1h1h1h1h1h1h1h1h1h1h1V23h1h1V21h1V25h1V24h1V19h1V21h1h1V15h1h1h1h1h1h1h1h1V19h1h1V15h1h1V17h1V16h1V24h1V22h1V24h1V18h1V22h1h1V20h1h1h1h1h1V19h1h1V17h1V16h1h1V19h1h1V17h1V16h1V19h1V18h1V21h1V15h1h1h1h1V21h1h1V15h1h1V17h1V15h1V19h1h1h1V22h1h1h1h1V20h1V23h1h1V24h1V22h1h1V17h1V19h1h1h1h1V22h1h1V19h1V22h1h1V16h1h1h1h1h1h1h1h1h1h1h1h1V19h1V22h1V23h1V21h1V15h1h1V21h1h1h1h1V19h1h1V15h1V17h1h1h1h1h1h1V18h1h1V15h1V20h1h1h1V15h1V18h1h1V24h1V15h1V22h1V15h1h1h1V22h1h1V19h1h1h1V15h1h1V21h1h1h1V15h1h1V19h1V17h1V22h1h1h1V15h1V20h1h1V19h1h1V18h1V15h1h1h1h1h1h1V18h1V15h1V20h1V23h1V22h1V15h1h1h1h1V21h1h1V19h1h1V22h1h1V15h1V20h1h1V15h1h1h1h1h1h1V17h1h1h1V16h1h1V15h1V20h1h1V15h1h1h1h1h1h1V19h1h1h1V21h1V22h1V19h1h1h1h1V16h1V22h1h1V16h1h1V20h1V21h1V16h1h1h1h1V18h1V21h1h1h1h1V22h1h1h1V16h1h1V21h1h1V16h1h1h1V18h1h1V17h1h1V20h1V16h1h1h1V21h1V20h1V21h1V15h1V17h1h1h1V21h1V15h1h1V21h1h1V15h1h1V19h1h1V21h1V17h1h1h1h1V21h1h1h1h1h1V15h1V20h1V21h1V24h1V21h1h1h1V17h1h1V18h1h1V20h1V17h1h1h1h1V21h1V23h1h1V24h1V20h1V21h1V17h1h1V21h1h1h1V23h1h1V17h1h1h1V20h1h1V17h1h1V21h1h1h1V19h1V21h1V23h1h1V19h1V23h1V21h1h1V25h1V24h1V23h1V21h1h1V22h1V18h1h1h1h1V22h1V19h1h1h1V22h1h1h1V18h1V21h1V23h1V25h1V18h1h1h1V20h1h1h1V18h1h1h1h1h1V20h1V21h1h1V23h1V22h1h1h1V20h1V18h1h1h1V20h1h1V23h1V19h1V20h1h1V19h1h1h1h1h1V26h1V25h1V22h1V19h1h1h1V22h1h1V23h1h1h1h1V22h1V19h1V22h1V19h1h1V20h1h1V23h1h1V21h1V19h1V25h1V23h1V22h1V20h1h1h1h1V21h1h1h1h1h1V20h1V21h1h1h1V24h1h1V21h1h1h1h1V23h1V25h1V26h1V23h1V21h1V24h1h1V21h1h1V22h1V24h1V22h1h1h1V23h1V24h1V21h1V24h1h1V25h1V22h1V24h1h1V25h1h1V26h1h1V25h1h1h1V26h1V25h1h1V24h1V25h1h1h1h1V24h1h1h1h1V25h1h1h1h1h1V24h1h1h1h1V25h1h1h1V26h1V27h1h1V26h1h1h1h1h1h1h1V25h1h1h1h1h1h1h1V26h1h1h1h1h1h1h1V27h1h1h1h1h1h1h1h1h1h1h1h1h1h1h1h1h1h1h1h1h1h1h1h1h1h1h1h1h1h1h1h1h1h1h1h1h1h1h1h1h1h1h1h1h1h1h1h1h1h1h1h1h1h1h1V24h1h1V23h1h1h1h1h1h1h1h1h1h1h1h1h1h1h1h1h1h1h1h1h1h1h1h1h1h1h1h1h1h1h1h1h1h1h1h1h1h1h1h1h1h1h1h1h1h1h1h1h1h1h1h1h1h1h1h1h1h1h1h1h1h1h1h1h1h1h1h1h1h1h1h1h1h1h1h1h1h1h1h1h1h1h1h1h1h1h1h1h1h1V28V33h-1h-1h-1h-1h-1h-1h-1h-1h-1h-1h-1h-1h-1h-1h-1h-1h-1h-1h-1h-1h-1h-1h-1h-1h-1h-1h-1h-1h-1h-1h-1h-1h-1h-1h-1h-1h-1h-1h-1h-1h-1h-1h-1h-1h-1h-1h-1h-1h-1h-1h-1h-1h-1h-1h-1h-1h-1h-1h-1h-1h-1h-1h-1h-1h-1h-1h-1h-1h-1h-1h-1h-1h-1h-1h-1h-1h-1h-1h-1h-1h-1h-1h-1h-1h-1h-1h-1h-1h-1h-1V32h-1h-1V29h-1h-1h-1h-1h-1h-1h-1h-1h-1h-1h-1h-1h-1h-1h-1h-1h-1h-1h-1h-1h-1h-1h-1h-1h-1h-1h-1h-1h-1h-1h-1h-1h-1h-1h-1h-1h-1h-1h-1h-1h-1h-1h-1h-1h-1h-1h-1h-1h-1h-1h-1h-1h-1h-1h-1V30h-1h-1h-1h-1h-1h-1h-1V31h-1h-1h-1h-1h-1V30h-1V31h-1h-1h-1h-1h-1V30h-1h-1h-1V29h-1V30h-1h-1V31h-1h-1h-1V32h-1h-1h-1h-1V31h-1V30h-1V31h-1h-1h-1V32h-1h-1h-1h-1V31h-1h-1V32h-1h-1h-1V31h-1V32h-1V31h-1V32h-1h-1h-1V31h-1h-1V32h-1h-1V33h-1h-1V34h-1V31h-1V32h-1V31h-1V34h-1V33h-1V34h-1h-1h-1h-1V33h-1V34h-1V35h-1h-1V33h-1h-1V35h-1V33h-1V31h-1h-1V34h-1V35h-1h-1h-1h-1V33h-1h-1V35h-1h-1h-1h-1V34h-1h-1h-1V35h-1h-1V36h-1V35h-1h-1h-1V34h-1V33h-1h-1V37h-1V34h-1V33h-1h-1V37h-1h-1h-1h-1V35h-1V37h-1V34h-1V33h-1V34h-1V35h-1h-1h-1V34h-1V36h-1V37h-1h-1V34h-1V32h-1V31h-1V37h-1h-1h-1h-1h-1V36h-1h-1V37h-1V34h-1V36h-1h-1V38h-1h-1h-1V36h-1V35h-1h-1h-1h-1V36h-1h-1V35h-1V38h-1h-1h-1V37h-1V38h-1V37h-1h-1h-1V38h-1h-1h-1V32h-1V33h-1V35h-1V38h-1V36h-1h-1h-1V37h-1h-1h-1V35h-1V38h-1h-1h-1h-1V36h-1h-1h-1V34h-1V33h-1h-1V36h-1h-1V35h-1V37h-1V35h-1h-1V36h-1V37h-1V36h-1h-1h-1V37h-1V39h-1V37h-1h-1V39h-1h-1V38h-1V34h-1h-1V37h-1h-1h-1V39h-1h-1V37h-1h-1V33h-1h-1h-1V36h-1V38h-1V37h-1h-1h-1h-1V38h-1h-1h-1V39h-1V36h-1V37h-1h-1V33h-1V35h-1V36h-1V41h-1V37h-1V35h-1V37h-1V35h-1V37h-1V40h-1h-1V37h-1V40h-1V36h-1V38h-1h-1V40h-1h-1V38h-1h-1V41h-1h-1V37h-1V40h-1h-1h-1V41h-1V35h-1V36h-1V35h-1V38h-1V40h-1h-1V38h-1h-1h-1h-1h-1V40h-1h-1V38h-1V35h-1V37h-1V40h-1V39h-1V37h-1V36h-1V37h-1h-1h-1h-1V35h-1V36h-1V40h-1V39h-1V40h-1h-1V37h-1V38h-1V40h-1h-1V36h-1h-1V40h-1V38h-1h-1h-1h-1V34h-1V35h-1V37h-1V38h-1h-1V39h-1h-1V40h-1h-1h-1V39h-1V36h-1h-1V41h-1V40h-1h-1h-1h-1h-1V41h-1h-1h-1h-1h-1V40h-1V37h-1h-1V40h-1V35h-1V37h-1V38h-1h-1V37h-1h-1V41h-1h-1V40h-1h-1V35h-1V34h-1V36h-1V41h-1V39h-1V41h-1V40h-1h-1V41h-1h-1h-1V38h-1V39h-1h-1V38h-1h-1V41h-1V34h-1h-1h-1V39h-1V38h-1V40h-1h-1V37h-1h-1h-1V41h-1h-1V39h-1V36h-1h-1V34h-1V37h-1V41h-1h-1h-1V37h-1V41h-1V34h-1V38h-1V37h-1V39h-1V38h-1h-1h-1V41h-1V39h-1h-1V40h-1h-1h-1h-1V38h-1h-1V41h-1V39h-1h-1V36h-1h-1V37h-1V38h-1V41h-1h-1V36h-1V34h-1V35h-1V38h-1V40h-1V39h-1V40h-1h-1h-1h-1h-1h-1V38h-1h-1V40h-1h-1V36h-1h-1V38h-1V37h-1h-1V39h-1h-1V38h-1h-1V39h-1V35h-1h-1V34h-1V35h-1h-1V38h-1V37h-1h-1h-1h-1V39h-1V38h-1h-1V41h-1V40h-1V41h-1h-1V38h-1h-1V41h-1h-1h-1V40h-1V35h-1V38h-1V37h-1V40h-1h-1V38h-1h-1V39h-1V40h-1V39h-1V37h-1h-1h-1V38h-1V37h-1V36h-1h-1V37h-1V36h-1V38h-1V33h-1V35h-1V33h-1V38h-1V40h-1V39h-1V41h-1V39h-1V37h-1V40h-1V41h-1V38h-1h-1V40h-1V41h-1h-1h-1V37h-1h-1V36h-1V33h-1V32h-1V36h-1V35h-1h-1V37h-1h-1h-1h-1h-1h-1h-1h-1h-1h-1h-1V36h-1h-1h-1V34h-1h-1V36h-1V35h-1h-1V37h-1h-1h-1V34h-1h-1V37h-1V41h-1h-1V40h-1V41h-1V39h-1V38h-1V37h-1V38h-1V41h-1h-1h-1h-1h-1h-1V39h-1V41h-1V39h-1h-1h-1V38h-1V37h-1h-1V38h-1V41h-1h-1V40h-1V35h-1V37h-1V39h-1V36h-1V38h-1V33h-1V38h-1h-1V40h-1h-1h-1V37h-1V36h-1V40h-1h-1V38h-1V36h-1V40h-1h-1h-1V37h-1h-1V36h-1V35h-1V36h-1V39h-1V40h-1V39h-1V38h-1V36h-1V33h-1V34h-1V36h-1V41h-1h-1h-1V35h-1h-1h-1V41h-1V39h-1V38h-1h-1V41h-1V37h-1V36h-1V35h-1V41h-1V40h-1V41h-1V40h-1h-1h-1h-1V37h-1h-1h-1V38h-1V39h-1V38h-1h-1V41h-1V39h-1V37h-1V39h-1V41h-1h-1h-1V36h-1V35h-1V37h-1V38h-1V40h-1V39h-1V36h-1V40h-1V41h-1h-1V39h-1h-1V41h-1h-1h-1V38h-1V36h-1V33h-1V36h-1h-1h-1h-1h-1V37h-1h-1h-1h-1h-1V34h-1h-1V37h-1h-1h-1h-1V32h-1V33h-1V34h-1V38h-1V41h-1V39h-1h-1h-1V37h-1h-1V40h-1V38h-1V39h-1V38h-1V39h-1V41h-1V37h-1V35h-1V38h-1h-1V41h-1h-1h-1V37h-1h-1h-1V40h-1h-1V38h-1V34h-1V35h-1V37h-1V40h-1h-1h-1h-1h-1V38h-1V36h-1V38h-1h-1h-1h-1V39h-1V37h-1V39h-1V36h-1h-1V39h-1h-1h-1V37h-1V40h-1h-1V37h-1V35h-1V37h-1V39h-1h-1V40h-1V38h-1h-1h-1V39h-1h-1V34h-1V35h-1h-1V40h-1h-1h-1h-1h-1h-1V38h-1h-1V40h-1V39h-1V35h-1V37h-1V40h-1h-1h-1V35h-1V37h-1V39h-1h-1V40h-1h-1V36h-1V37h-1h-1V36h-1h-1h-1V40h-1h-1h-1V38h-1V40h-1V39h-1V37h-1h-1V38h-1V40h-1V35h-1h-1V37h-1V40h-1h-1V38h-1h-1V39h-1V40h-1h-1h-1h-1h-1h-1V39h-1h-1V35h-1V34h-1h-1V38h-1h-1h-1h-1V41h-1h-1V37h-1h-1V39h-1h-1V36h-1h-1V37h-1V41h-1V39h-1V41h-1V37h-1V39h-1h-1V41h-1h-1V39h-1h-1V38h-1V41h-1V40h-1h-1h-1V41h-1V40h-1h-1h-1V37h-1V36h-1V35h-1V36h-1h-1h-1V37h-1h-1V36h-1h-1h-1h-1V34h-1V35h-1V37h-1V36h-1V37h-1h-1h-1h-1h-1V36h-1h-1h-1V37h-1h-1V36h-1V37h-1V36h-1V37h-1h-1V35h-1V34h-1h-1V37h-1V41h-1V40h-1h-1h-1V41h-1V39h-1V41h-1V38h-1h-1V37h-1V38h-1V41h-1V37h-1h-1V40h-1V37h-1V41h-1h-1h-1h-1V38h-1V37h-1V34h-1V36h-1h-1V37h-1V36h-1h-1V37h-1V35h-1V36h-1V34h-1V36h-1h-1h-1V35h-1V36h-1V37h-1h-1h-1h-1h-1V34h-1V35h-1V38h-1h-1h-1h-1V39h-1V41h-1V40h-1V41h-1h-1V39h-1h-1h-1V36h-1V37h-1V38h-1h-1h-1V34h-1h-1V36h-1V40h-1h-1V39h-1h-1V37h-1V40h-1V37h-1h-1V40h-1V37h-1V40h-1V37h-1V35h-1V37h-1V40h-1V38h-1V36h-1V37h-1V38h-1V40h-1V36h-1V37h-1V40h-1h-1h-1h-1V39h-1h-1h-1V38h-1h-1V40h-1V36h-1V35h-1V39h-1V36h-1V37h-1V39h-1h-1V40h-1h-1h-1h-1h-1V39h-1h-1h-1V37h-1V38h-1V39h-1V40h-1V38h-1h-1V35h-1V32h-1V33h-1V36h-1V39h-1V38h-1h-1h-1V40h-1V38h-1h-1h-1V37h-1V39h-1h-1V40h-1h-1h-1V38h-1h-1h-1V40h-1h-1V38h-1h-1V40h-1h-1h-1h-1V38h-1V37h-1h-1h-1V36h-1h-1V39h-1V37h-1V36h-1V37h-1V38h-1h-1V39h-1V41h-1V37h-1V38h-1V37h-1V41h-1h-1V39h-1h-1h-1V41h-1V38h-1V37h-1V41h-1V36h-1h-1V35h-1V41h-1V38h-1V39h-1V37h-1V38h-1h-1V36h-1V39h-1h-1V41h-1h-1V38h-1V39h-1h-1V36h-1V38h-1V41h-1h-1V40h-1V36h-1h-1V37h-1h-1V41h-1h-1h-1h-1V37h-1V38h-1V40h-1V38h-1h-1V36h-1h-1V38h-1V41h-1V39h-1V40h-1V39h-1h-1h-1V41h-1h-1h-1V36h-1V35h-1V40h-1V38h-1h-1V41h-1h-1h-1V37h-1V35h-1V33h-1V38h-1V36h-1V39h-1V40h-1h-1V38h-1V36h-1V38h-1V37h-1V40h-1h-1h-1V37h-1h-1V40h-1h-1V36h-1h-1h-1V40h-1V36h-1V38h-1V37h-1h-1V41h-1h-1h-1V37h-1h-1V41h-1h-1V39h-1V37h-1V38h-1h-1V40h-1V37h-1V41h-1h-1V37h-1V35h-1V34h-1V35h-1V37h-1h-1V39h-1h-1h-1h-1h-1h-1V40h-1h-1h-1V39h-1h-1V38h-1V39h-1V40h-1V38h-1V36h-1h-1V40h-1V39h-1h-1V37h-1V38h-1h-1h-1V40h-1h-1h-1V39h-1V38h-1h-1V39h-1V38h-1V37h-1h-1V33h-1V36h-1h-1V35h-1h-1V37h-1V36h-1V35h-1h-1V37h-1h-1h-1V36h-1h-1V37h-1h-1h-1h-1h-1h-1h-1h-1h-1h-1h-1V33h-1h-1V37h-1h-1h-1h-1h-1V36h-1h-1h-1V37h-1V35h-1V36h-1h-1V35h-1V34h-1V33h-1V36h-1V37h-1h-1V34h-1h-1V37h-1h-1h-1h-1h-1h-1V35h-1V37h-1V36h-1h-1V34h-1h-1V37h-1V41h-1V36h-1h-1V39h-1h-1h-1h-1V41h-1V38h-1h-1h-1h-1V37h-1V36h-1V38h-1h-1V41h-1h-1V39h-1h-1h-1V36h-1h-1h-1h-1V35h-1V41h-1h-1h-1h-1V35h-1V36h-1h-1V39h-1V38h-1h-1V40h-1V39h-1h-1V40h-1h-1V39h-1h-1h-1V36h-1V40h-1V33h-1V35h-1V34h-1V40h-1h-1V37h-1V35h-1V38h-1V41h-1h-1h-1V39h-1h-1V41h-1V38h-1h-1V39h-1h-1V41h-1V36h-1V35h-1V36h-1V40h-1V37h-1h-1h-1V39h-1V38h-1V41h-1h-1V39h-1h-1V38h-1h-1V41h-1h-1h-1V39h-1V41h-1h-1h-1V40h-1V41h-1h-1V40h-1h-1V41h-1V38h-1V37h-1V39h-1h-1h-1h-1V38h-1h-1h-1V41h-1V40h-1h-1V41h-1V37h-1V36h-1V35h-1V38h-1V40h-1V38h-1h-1h-1h-1V37h-1h-1h-1V40h-1V37h-1V36h-1h-1V34h-1h-1V37h-1h-1V38h-1h-1V40h-1V36h-1V39h-1V37h-1h-1V34h-1V37h-1V35h-1V41h-1h-1h-1h-1V39h-1V40h-1h-1V39h-1V41h-1h-1h-1V37h-1V35h-1h-1V41h-1V40h-1h-1V41h-1V40h-1V41h-1h-1V39h-1V37h-1V38h-1V41h-1V37h-1V36h-1V38h-1V35h-1V33h-1V36h-1V40h-1h-1V39h-1h-1V36h-1V40h-1h-1h-1V39h-1h-1h-1V40h-1V37h-1V39h-1h-1V36h-1V38h-1h-1V36h-1V35h-1V34h-1V37h-1V36h-1h-1V38h-1V37h-1V39h-1V36h-1V41h-1h-1h-1h-1V40h-1h-1V41h-1V39h-1h-1V37h-1V34h-1h-1V37h-1h-1V35h-1h-1h-1h-1V40h-1V38h-1h-1V37h-1V35h-1V36h-1h-1h-1h-1V38h-1V40h-1h-1V38h-1V37h-1h-1V39h-1V37h-1V35h-1V37h-1V40h-1h-1h-1h-1h-1h-1V38h-1V39h-1h-1h-1h-1h-1V38h-1V37h-1h-1V40h-1V39h-1V40h-1h-1h-1V33h-1V35h-1V36h-1V41h-1V40h-1h-1V38h-1V39h-1h-1V41h-1h-1h-1h-1h-1h-1h-1h-1V36h-1V41h-1V40h-1V38h-1V35h-1V34h-1V37h-1V40h-1V41h-1h-1h-1h-1V37h-1V41h-1h-1V40h-1V36h-1V39h-1V38h-1h-1V39h-1h-1h-1h-1V41h-1V40h-1h-1V36h-1V37h-1h-1V38h-1h-1V36h-1V35h-1V33h-1V36h-1V35h-1h-1h-1V36h-1V37h-1h-1h-1h-1V36h-1V37h-1h-1h-1V35h-1V37h-1h-1h-1h-1V36h-1V37h-1h-1h-1V35h-1h-1V37h-1V36h-1V37h-1V33h-1V34h-1V36h-1V39h-1V41h-1h-1V39h-1h-1V40h-1V37h-1h-1V41h-1h-1V40h-1h-1V41h-1h-1h-1V40h-1V37h-1V36h-1V37h-1h-1V40h-1V41h-1V40h-1V39h-1h-1h-1V38h-1h-1V40h-1h-1V41h-1V39h-1h-1V38h-1h-1h-1h-1V35h-1V36h-1V37h-1V41h-1h-1h-1h-1h-1h-1V37h-1V40h-1h-1h-1V41h-1h-1h-1h-1V38h-1h-1V40h-1V37h-1h-1V38h-1V41h-1V35h-1V33h-1h-1V34h-1V39h-1V40h-1h-1h-1V39h-1h-1V35h-1h-1V36h-1V39h-1V38h-1V39h-1h-1V38h-1V37h-1V40h-1h-1V38h-1V40h-1h-1h-1h-1V39h-1h-1h-1V38h-1h-1V37h-1V38h-1V40h-1h-1h-1Z" fill="#3c3cce"/><path d="M0 28V23h1h1h1h1h1h1h1h1h1h1h1h1h1h1h1h1h1h1h1h1h1h1h1h1V24h1h1h1h1h1h1h1h1V26h1V25h1h1V23h1h1h1h1h1h1h1h1h1h1h1h1h1h1h1h1h1h1h1h1h1h1V25h1V26h1V25h1V23h1h1h1V24h1h1h1V23h1h1h1h1h1h1h1h1h1h1h1h1h1h1h1h1h1h1h1h1h1h1h1h1h1h1h1h1h1h1h1V25h1V26h1h1V24h1V25h1h1h1h1h1h1h1h1h1h1h1h1h1h1h1h1h1h1h1h1h1V24h1h1h1h1h1V26h1h1V25h1V23h1h1h1h1h1h1h1h1h1h1h1h1h1h1h1h1h1h1h1h1h1h1h1h1h1V25h1V26h1V25h1V23h1h1h1h1h1h1h1h1h1h1V24h1h1h1h1h1h1V23h1h1V26h1h1h1V23h1h1h1h1h1h1h1h1h1h1h1h1h1h1h1h1h1h1h1h1h1h1h1h1h1h1h1h1h1h1h1h1h1h1h1h1h1h1h1V25h1h1h1V23h1h1h1h1h1h1h1h1h1h1h1h1h1h1h1h1h1h1h1h1h1h1V25h1V26h1h1V23h1h1h1h1h1h1h1h1h1h1h1h1h1h1h1h1h1h1V25h1V26h1V25h1V23h1h1h1h1h1h1h1h1V24h1h1h1h1h1h1V26h1h1V25h1V23h1h1h1h1h1h1h1h1h1h1h1V26h1V25h1h1V23h1h1h1h1h1h1h1h1h1h1h1h1h1h1h1h1h1h1h1h1h1h1h1h1V25h1h1h1V23h1h1h1h1h1h1h1h1h1h1h1h1h1h1h1h1h1h1h1h1h1h1h1h1h1h1h1h1h1h1h1h1h1h1V22h1h1h1V23h1V25h1V26h1V25h1V23h1h1h1h1h1h1h1h1h1h1V24h1h1h1h1h1h1V26h1h1h1V24h1h1h1h1h1h1h1h1h1h1h1h1h1V25h1h1h1V24h1h1h1V23h1h1h1h1h1h1h1h1h1h1h1h1h1h1h1h1h1h1h1h1h1h1h1h1h1h1h1V25h1V26h1h1V25h1h1h1h1h1h1h1h1h1h1h1h1h1h1h1V26h1h1h1V25h1h1h1h1h1h1h1h1h1h1V24h1h1h1h1h1h1h1h1h1h1h1h1h1h1h1h1h1h1h1h1V25h1h1h1h1h1h1h1h1V26h1V25h1h1V24h1h1h1h1h1h1V23h1h1h1h1h1h1h1h1h1h1h1h1h1h1h1h1h1h1h1h1h1h1h1h1h1h1h1h1h1V26h1h1V25h1V23h1h1h1h1h1h1h1h1h1h1h1h1h1h1V22h1h1V25h1h1h1V23h1h1h1h1h1h1h1h1h1h1h1h1h1h1h1h1h1h1h1h1V26h1h1V25h1V23h1h1V24h1h1h1V23h1h1h1h1h1V22h1h1h1h1V23h1h1h1V25h1h1V26h1V24h1h1h1h1h1V23h1h1h1h1h1h1h1h1h1h1h1V24h1h1h1h1h1h1V23h1h1h1h1h1h1h1h1h1h1V25h1h1h1V22h1V23h1h1V22h1h1h1h1h1h1h1h1h1h1h1h1h1V25h1h1h1V23h1h1h1h1h1h1h1h1h1h1h1h1h1h1h1h1h1h1h1h1h1h1h1h1h1h1h1h1h1h1h1h1h1V26h1V25h1h1V23h1h1h1h1h1h1h1h1h1h1h1h1h1h1h1h1h1h1V22h1h1h1V23h1h1h1h1h1h1h1h1h1h1h1h1V24h1h1h1h1h1h1V25h1V26h1h1V24h1h1h1h1h1h1h1h1h1V23h1h1V26h1h1h1V23h1h1h1h1h1h1h1h1h1h1h1h1h1h1V22h1h1V24h1V26h1h1V24h1h1h1h1h1h1h1h1h1h1h1h1h1h1V25h1h1h1h1h1V26h1V25h1h1V23h1h1V24h1h1V23h1h1h1h1h1h1h1h1h1h1h1h1h1h1h1h1V25h1V26h1h1V25h1h1h1h1V24h1h1h1h1h1h1h1h1h1h1h1h1h1h1h1h1h1h1V25h1h1h1h1h1h1h1V26h1V25h1h1V23h1h1h1h1h1h1h1h1h1V22h1h1h1h1h1V23h1h1h1h1h1h1h1h1h1h1h1h1h1h1h1h1h1h1V25h1h1V26h1V23h1h1h1h1h1h1h1h1h1h1h1h1h1V25h1V26h1h1V23h1h1h1h1h1h1h1h1h1h1h1h1h1h1h1h1h1h1h1h1h1h1h1h1h1h1h1h1h1h1h1h1h1h1h1h1h1V25h1h1h1V23h1h1h1h1h1h1h1h1h1h1h1h1h1h1h1h1h1V24h1h1h1h1h1h1h1h1h1h1h1h1V23h1h1h1h1V25h1V26h1h1V23h1h1h1h1h1h1h1h1h1h1h1h1h1h1h1h1h1h1h1h1h1h1h1h1h1h1V26h1h1h1V24h1h1h1h1h1h1h1h1h1h1h1h1h1h1V25h1h1V27h1V26h1V25h1V23h1h1h1h1h1h1h1h1h1h1h1V25h1h1h1V23h1h1h1h1h1h1h1h1h1h1h1h1h1h1h1h1h1V22h1h1h1h1h1V25h1h1h1V23h1h1h1h1h1h1h1h1h1h1h1V25h1V26h1V25h1V23h1h1h1h1h1h1V24h1h1h1h1h1h1V23h1h1h1h1h1h1h1h1h1h1h1h1V25h1h1h1V23h1h1h1h1h1h1h1h1h1h1h1h1h1h1h1h1h1h1h1h1h1h1h1h1h1h1h1h1h1V25h1V26h1h1V24h1h1h1h1h1h1h1h1h1h1h1h1h1h1h1h1h1V25h1h1h1h1h1h1h1h1V26h1h1V25h1V23h1h1h1h1h1h1h1h1h1h1h1h1h1h1h1h1V26h1V25h1V26h1V24h1h1h1h1h1V23h1h1h1h1h1h1h1h1h1h1h1V24h1V25h1h1V26h1V23h1h1h1h1h1h1h1h1h1h1h1h1h1h1h1h1h1h1V25h1V26h1V25h1V23h1h1h1h1h1h1h1h1h1h1h1h1h1h1h1h1h1h1V24h1h1h1h1h1h1h1V26h1h1V25h1V23h1h1h1h1h1h1h1h1h1h1h1h1h1h1h1h1h1h1h1h1h1h1V25h1h1V26h1V23h1h1h1h1h1h1h1h1h1h1h1h1h1h1h1h1h1h1h1V26h1h1h1V23h1h1h1h1h1h1h1h1h1h1h1h1h1h1V25h1V26h1V25h1V23h1V22h1h1h1h1h1V23h1h1h1h1h1V24h1h1h1V23h1h1h1h1h1V22h1h1h1h1h1h1h1h1h1h1h1h1h1h1h1V23h1V25h1V26h1V25h1V23h1h1h1h1h1h1h1h1h1h1h1h1h1h1h1h1h1h1h1h1h1h1h1h1h1h1h1h1h1h1h1h1h1h1h1h1V24h1h1V26h1V25h1V26h1V23h1h1h1h1h1h1h1h1h1h1h1h1h1h1h1h1h1h1h1h1h1h1h1h1V26h1h1h1V23h1h1h1h1h1h1h1h1h1V24h1h1h1h1V26h1h1h1V24h1h1h1h1h1h1h1h1h1h1h1h1h1h1h1h1h1h1h1h1h1h1h1h1h1h1h1V25h1h1V26h1V24h1h1h1h1h1h1h1h1h1h1h1h1h1h1h1V26h1h1h1V24h1h1h1h1h1h1h1h1h1h1h1h1h1h1h1V25h1h1h1h1h1h1h1h1h1h1h1h1h1h1h1h1h1h1V26h1h1h1V25h1h1h1h1h1h1h1V24h1h1h1h1h1h1h1h1h1h1h1h1h1V26h1h1h1V25h1h1h1h1h1h1h1h1h1h1h1h1h1h1h1h1h1h1h1h1V27h1h1h1V25h1V26h1h1h1h1h1h1h1V25h1h1h1h1h1V27h1V26h1V27h1V26h1h1h1h1h1h1h1h1h1h1h1h1h1h1h1h1h1h1h1h1V27h1h1h1h1h1h1h1h1h1h1V26h1h1h1V27h1h1h1h1h1h1h1h1h1h1h1h1h1h1h1h1h1h1h1h1h1h1h1h1h1h1V28h1h1h1h1h1h1h1h1h1h1h1h1h1h1h1h1h1h1h1h1h1h1h1h1h1h1h1h1h1h1h1h1h1h1h1h1h1h1h1h1h1h1h1h1h1h1h1h1h1h1h1h1h1h1V25h1h1V24h1h1h1h1h1h1h1h1h1h1h1h1h1h1h1h1h1h1h1h1h1h1h1h1h1h1h1h1h1h1h1h1h1h1h1h1h1h1h1h1h1h1h1h1h1h1h1h1h1h1h1h1h1h1h1h1h1h1h1h1h1h1h1h1h1h1h1h1h1h1h1h1h1h1h1h1h1h1h1h1h1h1h1h1h1h1h1h1h1h1V28V32h-1h-1h-1h-1h-1h-1h-1h-1h-1h-1h-1h-1h-1h-1h-1h-1h-1h-1h-1h-1h-1h-1h-1h-1h-1h-1h-1h-1h-1h-1h-1h-1h-1h-1h-1h-1h-1h-1h-1h-1h-1h-1h-1h-1h-1h-1h-1h-1h-1h-1h-1h-1h-1h-1h-1h-1h-1h-1h-1h-1h-1h-1h-1h-1h-1h-1h-1h-1h-1h-1h-1h-1h-1h-1h-1h-1h-1h-1h-1h-1h-1h-1h-1h-1h-1h-1h-1h-1h-1h-1V31h-1h-1V28h-1h-1h-1h-1h-1h-1h-1h-1h-1h-1h-1h-1h-1h-1h-1h-1h-1h-1h-1h-1h-1h-1h-1h-1h-1h-1h-1h-1h-1h-1h-1h-1h-1h-1h-1h-1h-1h-1h-1h-1h-1h-1h-1h-1h-1h-1h-1h-1h-1h-1h-1h-1h-1h-1V29h-1h-1h-1h-1h-1h-1h-1h-1h-1h-1h-1h-1h-1h-1h-1h-1h-1h-1h-1h-1h-1h-1h-1h-1h-1h-1V30h-1h-1h-1V29h-1h-1h-1h-1h-1h-1h-1h-1h-1h-1V30h-1h-1h-1h-1h-1h-1h-1h-1h-1h-1h-1h-1h-1h-1h-1h-1h-1h-1h-1h-1V29h-1V30h-1V29h-1V31h-1h-1h-1h-1h-1V30h-1h-1h-1h-1h-1h-1h-1V31h-1V29h-1h-1h-1V31h-1h-1h-1h-1h-1h-1h-1h-1h-1h-1h-1h-1h-1h-1h-1h-1h-1h-1h-1h-1V30h-1h-1h-1V32h-1h-1h-1h-1h-1h-1h-1h-1h-1h-1h-1h-1h-1V31h-1h-1h-1h-1h-1h-1h-1V30h-1h-1h-1V31h-1h-1h-1h-1h-1h-1h-1h-1h-1h-1h-1h-1h-1h-1h-1h-1h-1h-1V32h-1h-1h-1h-1h-1h-1h-1h-1h-1h-1h-1h-1h-1h-1h-1V30h-1h-1h-1V32h-1h-1h-1h-1h-1h-1h-1h-1h-1h-1h-1h-1h-1h-1h-1V30h-1V31h-1h-1V32h-1h-1h-1h-1h-1h-1h-1h-1h-1h-1h-1h-1h-1h-1h-1h-1h-1h-1h-1h-1h-1h-1h-1h-1h-1h-1h-1V30h-1h-1h-1V32h-1h-1h-1h-1V33h-1h-1h-1h-1h-1h-1h-1h-1h-1V30h-1h-1h-1V33h-1h-1h-1h-1h-1h-1h-1h-1h-1h-1h-1h-1h-1h-1h-1h-1h-1h-1h-1h-1h-1h-1h-1h-1V30h-1V31h-1V30h-1V32h-1h-1V33h-1h-1h-1h-1h-1h-1h-1h-1h-1h-1h-1h-1h-1h-1h-1h-1h-1h-1h-1h-1h-1h-1h-1h-1h-1h-1h-1h-1h-1h-1h-1h-1h-1h-1h-1h-1V31h-1V30h-1V31h-1V33h-1V34h-1h-1h-1h-1h-1h-1h-1h-1h-1h-1h-1h-1h-1h-1h-1V33h-1h-1h-1h-1h-1V32h-1h-1h-1V33h-1h-1h-1h-1h-1V34h-1h-1h-1h-1h-1V33h-1V31h-1V30h-1V31h-1V33h-1h-1h-1h-1h-1h-1h-1h-1h-1h-1h-1h-1h-1h-1V30h-1h-1h-1V33h-1h-1h-1h-1h-1h-1h-1h-1h-1h-1h-1h-1h-1h-1h-1h-1h-1h-1h-1V30h-1V31h-1h-1V33h-1h-1h-1h-1h-1h-1h-1h-1h-1h-1h-1h-1h-1h-1h-1h-1h-1h-1h-1h-1h-1h-1V31h-1V30h-1h-1V32h-1h-1h-1h-1h-1h-1h-1V33h-1h-1h-1h-1h-1h-1h-1h-1h-1h-1h-1h-1h-1h-1h-1h-1h-1h-1V31h-1V30h-1V31h-1V33h-1h-1h-1h-1h-1h-1h-1h-1h-1h-1h-1h-1h-1h-1h-1h-1h-1h-1V30h-1V31h-1h-1V32h-1V33h-1h-1h-1h-1h-1h-1h-1h-1h-1h-1h-1V32h-1h-1h-1h-1h-1V30h-1V31h-1V30h-1V33h-1h-1h-1h-1h-1h-1h-1h-1h-1h-1h-1h-1h-1h-1h-1h-1V31h-1V30h-1h-1V31h-1h-1h-1h-1h-1h-1h-1h-1V32h-1h-1h-1h-1h-1h-1h-1h-1h-1h-1h-1h-1h-1h-1h-1h-1h-1V30h-1h-1V31h-1V33h-1h-1h-1h-1h-1h-1h-1h-1h-1h-1h-1h-1h-1h-1h-1h-1h-1h-1h-1h-1h-1h-1h-1h-1h-1h-1h-1h-1h-1V31h-1h-1h-1V33h-1h-1h-1h-1h-1h-1h-1h-1h-1h-1h-1h-1V32h-1h-1h-1h-1h-1h-1V33h-1h-1h-1h-1h-1h-1V31h-1V30h-1V31h-1V33h-1h-1h-1h-1h-1h-1h-1h-1h-1h-1h-1V31h-1h-1h-1V34h-1h-1h-1h-1h-1V33h-1h-1h-1h-1h-1h-1h-1h-1h-1h-1h-1h-1h-1h-1h-1h-1h-1V31h-1h-1h-1V33h-1h-1h-1h-1h-1h-1h-1h-1h-1h-1h-1V31h-1V30h-1V29h-1V31h-1h-1V32h-1h-1h-1h-1h-1h-1h-1h-1h-1h-1h-1h-1h-1h-1V30h-1h-1h-1V33h-1h-1h-1h-1h-1h-1h-1h-1h-1h-1h-1h-1h-1h-1h-1h-1h-1h-1h-1h-1h-1h-1h-1h-1h-1h-1V30h-1h-1V31h-1V33h-1h-1h-1h-1V32h-1h-1h-1h-1h-1h-1h-1h-1h-1h-1h-1h-1V33h-1h-1h-1h-1h-1h-1h-1h-1h-1h-1h-1h-1h-1h-1h-1h-1h-1V31h-1h-1h-1V33h-1h-1h-1h-1h-1h-1h-1h-1h-1h-1h-1h-1h-1h-1h-1h-1h-1h-1h-1h-1h-1h-1h-1h-1h-1h-1h-1h-1h-1h-1h-1h-1h-1h-1h-1h-1h-1V30h-1h-1V31h-1V33h-1h-1h-1h-1h-1h-1h-1h-1h-1h-1h-1h-1h-1V30h-1V31h-1h-1V33h-1h-1h-1h-1h-1h-1h-1h-1h-1h-1h-1h-1h-1h-1h-1h-1h-1h-1V34h-1h-1h-1h-1h-1V33h-1h-1h-1h-1h-1h-1h-1h-1h-1V31h-1h-1V30h-1V31h-1h-1h-1h-1h-1h-1h-1V32h-1h-1h-1h-1h-1h-1h-1h-1h-1h-1h-1h-1h-1h-1h-1h-1h-1h-1V31h-1h-1h-1h-1V30h-1h-1V31h-1V33h-1h-1h-1h-1h-1h-1h-1h-1h-1h-1h-1h-1h-1h-1h-1h-1V32h-1h-1V33h-1h-1V31h-1h-1V30h-1V31h-1h-1h-1h-1h-1V32h-1h-1h-1h-1h-1h-1h-1h-1h-1h-1h-1h-1h-1h-1V30h-1h-1V32h-1V34h-1h-1V33h-1h-1h-1h-1h-1h-1h-1h-1h-1h-1h-1h-1h-1h-1V30h-1h-1h-1V33h-1h-1V32h-1h-1h-1h-1h-1h-1h-1h-1h-1V30h-1h-1V31h-1V32h-1h-1h-1h-1h-1h-1V33h-1h-1h-1h-1h-1h-1h-1h-1h-1h-1h-1h-1V34h-1h-1h-1V33h-1h-1h-1h-1h-1h-1h-1h-1h-1h-1h-1h-1h-1h-1h-1h-1h-1h-1V31h-1h-1V30h-1V33h-1h-1h-1h-1h-1h-1h-1h-1h-1h-1h-1h-1h-1h-1h-1h-1h-1h-1h-1h-1h-1h-1h-1h-1h-1h-1h-1h-1h-1h-1h-1h-1h-1V31h-1h-1h-1V34h-1h-1h-1h-1h-1h-1h-1h-1h-1h-1h-1h-1h-1V33h-1h-1V34h-1V31h-1h-1h-1V33h-1h-1h-1h-1h-1h-1h-1h-1h-1h-1V32h-1h-1h-1h-1h-1h-1V33h-1h-1h-1h-1h-1h-1h-1h-1h-1h-1h-1V32h-1h-1h-1h-1h-1V30h-1V31h-1h-1V33h-1h-1h-1V34h-1h-1h-1h-1V33h-1h-1h-1h-1h-1V32h-1h-1h-1V33h-1h-1V31h-1V30h-1h-1V33h-1h-1h-1h-1h-1h-1h-1h-1h-1h-1h-1h-1h-1h-1h-1h-1h-1h-1h-1h-1V31h-1h-1h-1V34h-1h-1V33h-1h-1h-1h-1h-1h-1h-1h-1h-1h-1h-1h-1h-1h-1V31h-1V30h-1h-1V33h-1h-1h-1h-1h-1h-1h-1h-1h-1h-1h-1h-1h-1h-1h-1h-1h-1h-1h-1h-1h-1h-1h-1h-1h-1h-1h-1h-1h-1V32h-1h-1h-1h-1h-1h-1V31h-1h-1V30h-1V31h-1h-1h-1h-1h-1h-1h-1h-1V32h-1h-1h-1h-1h-1h-1h-1h-1h-1h-1h-1h-1h-1h-1h-1h-1h-1h-1h-1h-1V31h-1h-1h-1h-1h-1h-1h-1h-1h-1h-1V30h-1h-1h-1V31h-1h-1h-1h-1h-1h-1h-1h-1h-1h-1h-1h-1h-1h-1h-1V30h-1h-1V31h-1V33h-1h-1h-1h-1h-1h-1h-1h-1h-1h-1h-1h-1h-1h-1h-1h-1h-1h-1h-1h-1h-1h-1h-1h-1h-1h-1h-1V32h-1h-1h-1V31h-1h-1h-1V32h-1h-1h-1h-1h-1h-1h-1h-1h-1h-1h-1h-1h-1V30h-1h-1h-1V32h-1h-1h-1h-1h-1h-1V33h-1h-1h-1h-1h-1h-1h-1h-1h-1h-1V31h-1V30h-1V31h-1V33h-1V34h-1h-1h-1V33h-1h-1h-1h-1h-1h-1h-1h-1h-1h-1h-1h-1h-1h-1h-1h-1h-1h-1h-1h-1h-1h-1h-1h-1h-1h-1h-1h-1h-1h-1h-1h-1h-1h-1V31h-1h-1h-1V33h-1h-1h-1h-1h-1h-1h-1h-1h-1h-1h-1h-1h-1h-1h-1h-1h-1h-1h-1h-1h-1h-1h-1h-1V31h-1h-1V30h-1V33h-1h-1h-1h-1h-1h-1h-1h-1h-1h-1h-1V31h-1V30h-1h-1V32h-1h-1h-1h-1h-1h-1V33h-1h-1h-1h-1h-1h-1h-1h-1V31h-1V30h-1V31h-1V33h-1h-1h-1h-1h-1h-1h-1h-1h-1h-1h-1h-1h-1h-1h-1h-1h-1h-1V30h-1h-1V31h-1V33h-1h-1h-1h-1h-1h-1h-1h-1h-1h-1h-1h-1h-1h-1h-1h-1h-1h-1h-1h-1h-1h-1V31h-1h-1h-1V33h-1h-1h-1h-1h-1h-1h-1h-1h-1h-1h-1h-1h-1h-1h-1h-1h-1h-1h-1h-1h-1h-1h-1h-1h-1h-1h-1h-1h-1h-1h-1h-1h-1h-1h-1h-1h-1h-1h-1V30h-1h-1h-1V33h-1h-1V32h-1h-1h-1h-1h-1h-1V33h-1h-1h-1h-1h-1h-1h-1h-1h-1h-1V31h-1V30h-1V31h-1V33h-1h-1h-1h-1h-1h-1h-1h-1h-1h-1h-1h-1h-1h-1h-1h-1h-1h-1h-1h-1h-1h-1h-1h-1h-1V31h-1V30h-1h-1V32h-1h-1h-1h-1h-1V31h-1h-1h-1h-1h-1h-1h-1h-1h-1h-1h-1h-1h-1h-1h-1h-1h-1h-1h-1h-1h-1V32h-1V30h-1h-1V31h-1V33h-1h-1h-1h-1h-1h-1h-1h-1h-1h-1h-1h-1h-1h-1h-1h-1h-1h-1h-1h-1h-1h-1h-1h-1h-1h-1h-1h-1h-1h-1h-1V32h-1h-1h-1V33h-1h-1h-1V31h-1V30h-1V31h-1V33h-1h-1h-1h-1h-1h-1h-1h-1h-1h-1h-1h-1h-1h-1h-1h-1h-1h-1h-1h-1h-1h-1V31h-1h-1V30h-1V32h-1h-1h-1h-1h-1h-1h-1h-1V33h-1h-1h-1h-1h-1h-1h-1h-1h-1h-1h-1h-1h-1h-1h-1h-1h-1h-1h-1h-1h-1h-1h-1h-1Z" fill="#6666de"/><rect x="255" y="0" width="2" height="56" fill="#000"/><rect x="1156" y="0" width="2" height="56" fill="#000"/></svg>
<div style="left:4px;top:350px;width:1895px;height:59px;background:#000"></div>
<div style="left:5px;top:351px;width:96px;height:56px;background:#f6f7fc"></div>
<div style="left:5px;top:351px;width:17px;height:18px;background:#cdd9f1;border-top:1px solid #eef2fc;border-left:1px solid #eef2fc;border-right:1px solid #9aa1b5;border-bottom:1px solid #9aa1b5"></div>
<svg style="left:5px;top:351px" width="17" height="18" viewBox="0 0 17 18"><path d="M5.6 5.4 L12.4 12.2 M12.4 5.4 L5.6 12.2" stroke="#000" stroke-width="1.3"/></svg>
<div style="left:23px;top:351px;width:77px;height:18px;background:#cdd9f1;border-top:1px solid #eef2fc;border-left:1px solid #eef2fc;border-right:1px solid #9aa1b5;border-bottom:1px solid #9aa1b5"></div>
<span style="left:26px;top:354.69px;font-size:11px;line-height:11px;color:#000;font-weight:normal;letter-spacing:-0.274px;">Tuba SM58</span>
<svg style="left:86px;top:356px" width="12" height="8" viewBox="0 0 12 8"><path d="M0.6 0.8 H11.4 L6 6.6 Z" fill="#000"/></svg>
<div style="left:5px;top:369px;width:47px;height:18px;background:#cdd9f1;border-top:1px solid #eef2fc;border-left:1px solid #eef2fc;border-right:1px solid #9aa1b5;border-bottom:1px solid #9aa1b5"></div>
<span style="left:16.8px;top:372.89px;font-size:11px;line-height:11px;color:#000;font-weight:normal;letter-spacing:-0.317px;">Mute</span>
<div style="left:53px;top:369px;width:47px;height:18px;background:#cdd9f1;border-top:1px solid #eef2fc;border-left:1px solid #eef2fc;border-right:1px solid #9aa1b5;border-bottom:1px solid #9aa1b5"></div>
<span style="left:65.8px;top:372.89px;font-size:11px;line-height:11px;color:#000;font-weight:normal;letter-spacing:-0.258px;">Solo</span>
<div style="left:100px;top:387px;width:1px;height:20px;background:#000"></div>
<div style="left:100px;top:351px;width:1px;height:36px;background:#9aa1b5"></div>
<div style="left:5px;top:389px;width:17px;height:18px;background:#cdd9f1;border-top:1px solid #eef2fc;border-left:1px solid #eef2fc;border-right:1px solid #9aa1b5;border-bottom:1px solid #9aa1b5"></div>
<svg style="left:5px;top:389px" width="17" height="18" viewBox="0 0 17 18"><path d="M3.6 11.6 H14.2 L8.9 5.6 Z" fill="#000"/></svg>
<div style="left:23px;top:389px;width:59px;height:18px;background:#cdd9f1;border-top:1px solid #eef2fc;border-left:1px solid #eef2fc;border-right:1px solid #9aa1b5;border-bottom:1px solid #9aa1b5"><span style="left:2px;top:2.4px;font-size:11px;line-height:12px;letter-spacing:0.25px;color:#000">Auswählen</span></div>
<div style="left:101px;top:351px;width:21px;height:56px;background:#fbfbfe"></div>
<span style="left:109.3px;top:352.64px;font-size:12px;line-height:12px;color:#000;font-weight:normal;">1</span>
<span style="left:109px;top:373.44px;font-size:12px;line-height:12px;color:#000;font-weight:normal;">0</span>
<span style="left:105px;top:392.64px;font-size:12px;line-height:12px;color:#000;font-weight:normal;">-1</span>
<div style="left:116px;top:378px;width:5px;height:2px;background:#000"></div>
<div style="left:119px;top:406px;width:2px;height:1px;background:#000"></div>
<div style="left:121px;top:351px;width:1px;height:56px;background:#a0a0a0"></div>
<div style="left:122px;top:351px;width:1775px;height:56px;background:#c2c2c2"></div>
<svg style="left:122px;top:351px" width="1775" height="56" viewBox="0 0 1775 56" shape-rendering="crispEdges"><path d="M0 28V15h1V20h1h1V21h1h1V23h1V19h1h1h1V16h1V20h1h1h1V17h1h1V16h1h1V15h1V16h1V22h1V16h1h1h1V17h1V18h1V23h1h1V20h1V17h1V21h1h1h1V22h1V23h1V21h1V14h1h1h1V18h1V16h1h1V13h1V15h1V17h1h1V22h1h1V20h1V17h1h1h1V19h1h1V16h1h1h1V15h1V21h1V20h1V22h1V17h1V15h1V19h1h1V16h1h1h1h1V19h1h1h1V16h1h1V19h1h1V14h1V17h1V22h1h1V19h1h1V18h1h1h1V13h1V18h1V16h1h1V18h1h1h1V16h1h1h1h1V13h1V16h1V22h1V24h1V21h1V20h1V21h1h1V20h1h1V21h1h1h1V22h1h1h1V21h1h1V19h1h1h1V21h1V20h1h1h1V23h1h1h1V22h1V19h1h1V24h1V26h1V24h1V23h1V20h1h1h1h1V13h1V22h1h1h1V16h1V18h1h1h1h1h1V21h1h1V19h1h1V21h1h1V15h1V19h1V18h1h1h1V22h1V20h1V22h1V16h1V13h1h1V19h1h1V15h1V17h1h1V19h1V18h1V21h1h1h1h1h1V15h1h1h1V21h1V23h1h1V20h1h1V17h1h1V19h1V18h1h1V20h1V19h1V15h1V19h1V21h1h1h1V18h1h1V17h1V19h1h1h1V15h1V16h1V15h1V17h1h1h1V21h1V15h1V16h1V21h1h1V20h1V21h1V20h1V18h1h1V20h1h1V17h1V20h1h1V21h1V16h1V17h1V16h1h1V14h1V17h1V19h1V18h1V15h1V18h1V19h1h1V22h1h1h1V19h1V20h1V19h1V20h1h1V19h1h1V22h1h1V24h1V19h1h1h1V16h1h1V22h1V21h1V20h1h1V16h1h1V17h1h1h1V16h1h1h1V21h1V23h1h1V22h1V17h1V15h1h1V18h1h1V19h1h1V16h1h1h1V18h1V19h1h1h1V22h1h1V20h1V16h1h1V22h1h1h1h1V17h1h1h1V19h1h1V24h1V25h1h1V16h1V20h1V17h1h1V20h1V19h1h1h1V17h1h1h1V19h1h1V16h1h1V23h1V22h1h1h1V17h1h1h1V18h1V19h1V23h1V22h1V21h1V14h1V15h1h1h1V16h1V13h1V16h1h1V15h1h1V18h1h1V16h1h1h1V18h1V19h1V22h1V17h1h1h1V20h1V15h1V13h1V16h1h1V22h1h1V16h1h1V15h1h1h1V17h1h1h1V15h1h1V21h1V20h1V19h1h1V22h1V15h1h1V17h1V13h1V17h1V16h1h1V22h1V18h1h1h1V16h1h1h1V21h1V19h1V22h1h1h1V17h1h1h1V20h1V22h1h1V19h1V22h1V18h1h1V17h1V21h1V22h1V20h1V17h1h1V18h1V20h1h1V18h1h1V21h1V17h1h1h1V16h1h1V15h1V16h1V18h1h1h1V21h1h1V18h1V20h1V17h1h1h1V15h1V16h1h1V19h1V14h1V22h1V23h1V24h1V20h1V23h1V20h1V21h1h1V22h1h1V20h1V18h1V22h1V20h1h1V24h1V20h1h1V23h1V24h1V23h1V22h1h1V20h1h1V22h1h1V21h1V20h1h1h1h1h1h1h1h1V24h1V21h1h1h1V22h1V21h1h1V22h1h1h1h1V21h1h1h1h1h1V24h1V21h1V20h1V22h1V18h1V20h1V24h1V26h1V24h1h1V21h1V17h1h1V20h1h1V18h1h1h1h1h1h1h1V16h1V15h1V16h1V18h1V21h1h1V17h1h1V19h1h1h1V18h1h1h1h1V19h1V17h1h1h1V22h1h1h1V17h1V20h1V18h1V22h1V17h1h1h1V19h1h1h1V21h1V22h1V17h1h1V16h1h1h1V18h1h1V16h1V23h1V24h1V20h1V16h1h1V18h1h1V21h1V18h1V14h1V17h1h1V19h1V21h1V18h1h1h1V17h1h1h1h1V14h1V17h1V21h1V23h1V20h1V15h1V21h1h1h1V19h1h1V15h1V18h1h1h1V21h1V16h1h1V21h1V14h1V17h1h1V19h1V22h1V21h1V18h1V15h1h1h1V13h1V16h1h1V17h1V20h1h1h1V17h1V16h1h1V21h1V17h1h1V15h1V18h1h1h1V15h1h1h1V18h1V16h1h1h1V20h1h1V19h1h1V23h1V21h1V23h1V18h1h1V12h1V18h1V20h1V19h1h1V18h1h1h1h1V14h1h1V16h1V14h1h1V21h1V23h1V22h1V18h1V15h1V21h1h1V18h1V17h1h1V18h1V21h1V15h1V20h1V18h1h1h1h1h1V17h1h1V21h1V17h1h1V18h1h1V19h1h1V23h1V21h1h1h1V20h1h1h1V23h1V22h1V23h1h1V21h1V18h1h1V14h1V19h1V22h1h1h1V17h1h1V21h1V19h1h1V18h1h1V17h1h1V18h1V16h1V19h1h1V22h1h1V20h1V17h1V16h1h1h1h1h1V17h1V19h1h1V22h1V16h1h1h1V18h1V17h1V22h1V23h1h1V21h1V16h1V17h1h1V16h1h1V21h1h1V16h1V19h1V17h1V22h1V20h1V22h1V15h1h1V14h1h1V16h1h1h1V12h1V16h1V14h1V16h1h1V18h1h1h1V15h1V20h1V23h1V22h1V20h1V24h1V23h1V21h1V20h1h1V21h1h1h1V19h1h1V18h1V22h1h1V20h1V21h1h1h1h1V24h1V22h1V23h1V18h1h1V19h1h1V13h1V20h1h1V19h1V17h1h1h1V15h1V18h1V17h1h1h1h1V15h1V17h1h1V21h1V23h1h1V20h1V21h1h1h1h1h1V19h1h1V20h1V18h1V21h1h1V18h1V21h1h1V20h1V18h1V21h1V20h1h1h1V18h1V23h1V21h1h1h1h1V20h1h1V25h1V24h1h1V21h1h1V13h1V18h1V17h1V16h1V15h1h1V13h1V21h1V15h1V21h1V20h1h1V19h1V18h1h1V16h1V20h1V16h1h1V21h1h1h1V13h1V15h1V16h1h1h1h1V21h1h1V24h1V22h1V21h1V18h1h1V19h1h1V16h1h1h1V19h1V15h1V21h1h1h1h1V24h1V22h1h1V19h1h1V17h1h1V16h1V15h1V18h1V20h1h1V15h1V20h1h1V19h1h1h1V22h1h1h1V20h1h1V16h1h1V22h1V19h1V18h1h1V16h1V18h1h1V16h1h1V22h1h1V17h1V21h1V18h1h1V21h1V22h1V23h1V19h1h1V16h1h1h1h1V19h1h1h1h1h1h1V20h1V16h1h1V17h1h1V16h1V22h1h1V17h1V21h1V18h1h1h1h1h1h1h1h1h1V19h1V16h1V24h1V23h1V22h1V14h1h1V18h1h1V16h1V17h1V19h1h1h1V17h1h1V18h1V20h1h1V18h1V17h1h1h1V19h1V16h1h1V19h1V18h1V20h1h1V14h1V21h1V25h1h1V22h1h1V20h1h1h1h1V23h1V20h1V22h1h1h1h1h1h1V20h1V21h1V24h1V19h1V23h1V20h1V17h1h1V15h1h1V14h1V17h1V18h1V16h1h1V19h1V22h1h1h1V17h1V16h1h1h1V15h1h1V16h1h1h1V20h1V15h1h1V19h1h1h1V21h1V17h1h1h1h1V18h1h1V21h1V22h1h1h1V19h1h1h1V22h1V16h1h1h1V15h1V19h1h1V22h1V23h1h1V18h1V17h1h1V21h1h1h1V19h1V16h1V21h1V19h1V22h1h1V18h1h1h1V17h1V20h1h1V18h1h1V14h1V17h1V16h1h1V19h1V18h1V17h1V15h1V13h1V16h1V15h1h1V16h1h1V20h1h1V17h1h1h1V21h1V20h1h1V17h1h1V14h1V17h1h1h1h1V22h1h1V21h1V15h1V18h1h1V15h1V21h1V25h1h1V24h1V20h1V24h1h1V21h1V20h1h1h1V21h1h1h1V18h1V19h1V23h1h1V20h1h1h1V22h1h1h1V23h1h1h1V21h1V23h1V21h1V19h1V16h1V17h1h1V15h1h1h1V20h1V18h1V15h1h1h1V17h1V16h1h1h1h1V21h1V23h1V22h1h1V20h1h1V17h1h1h1V18h1h1V22h1h1h1V17h1V15h1V18h1h1V19h1h1V23h1V20h1h1V15h1h1V18h1h1V19h1h1h1V20h1h1V14h1h1h1h1h1V16h1h1h1V14h1V21h1V22h1h1V17h1h1h1h1h1V21h1h1V19h1h1V14h1V20h1h1V16h1h1h1V14h1V18h1V17h1V22h1V20h1h1V18h1h1V19h1h1V21h1h1V19h1V18h1h1V17h1h1V15h1h1V18h1V17h1V20h1V18h1h1h1V15h1h1h1V20h1h1V17h1h1h1V16h1V15h1V20h1h1V21h1V16h1V18h1h1V16h1h1h1V15h1h1V18h1h1V22h1V13h1V15h1V19h1V17h1h1V15h1h1h1V21h1V20h1V24h1V20h1h1V22h1h1V20h1V17h1h1h1h1h1h1V19h1V17h1h1V21h1V23h1V19h1V15h1V22h1h1V19h1h1V15h1h1h1h1V16h1h1V15h1h1V18h1V19h1V15h1h1V16h1V20h1h1h1V16h1V18h1V15h1V16h1h1h1h1V19h1h1V15h1V16h1V20h1h1V16h1V21h1V24h1h1V19h1h1V18h1h1h1V16h1V19h1h1V22h1h1V15h1V17h1V19h1h1V17h1h1h1V18h1h1V21h1h1h1V18h1h1V16h1h1V18h1h1h1V19h1V20h1V21h1V19h1V15h1h1V21h1h1V23h1V25h1V17h1V22h1V15h1V19h1h1V18h1h1h1V16h1V21h1V18h1h1h1V16h1h1V21h1h1V15h1h1h1V18h1h1h1h1h1h1V20h1V24h1h1V22h1V21h1V19h1h1h1V21h1h1V19h1V20h1h1h1h1h1V23h1V25h1h1V22h1V24h1V21h1h1V22h1h1h1V20h1V24h1h1V21h1V24h1h1V23h1h1h1h1V22h1h1V21h1h1V20h1V21h1V22h1h1h1h1V24h1h1V25h1V23h1h1V22h1V23h1V22h1h1h1h1h1V21h1V20h1V22h1h1h1h1V23h1V24h1V23h1V22h1V23h1h1V25h1h1V22h1V21h1V22h1h1h1h1V24h1h1V23h1h1h1V21h1h1V24h1V22h1h1V21h1h1V23h1h1h1h1h1V22h1V24h1h1V22h1h1V24h1V23h1V24h1h1h1V21h1h1h1V23h1h1h1V21h1h1h1V24h1V22h1h1V24h1V23h1h1V24h1h1h1h1h1h1V23h1h1h1h1h1h1h1V24h1V23h1h1V24h1h1V23h1V25h1h1V23h1h1V24h1V23h1h1V25h1V24h1h1V22h1h1h1h1V25h1h1V22h1h1h1V23h1V24h1h1V23h1V26h1V25h1V27h1V25h1h1V26h1h1h1V25h1h1V27h1h1V25h1h1h1h1V26h1h1V25h1V26h1h1V25h1h1V26h1h1V25h1h1V26h1h1V25h1h1h1h1V26h1V27h1h1V26h1V27h1h1h1V26h1h1h1h1h1h1h1h1h1V27h1V26h1h1h1V27h1h1h1V26h1h1V27h1h1h1h1h1h1h1h1h1h1h1h1h1h1h1h1h1h1h1h1h1h1h1h1h1h1h1h1h1h1h1h1h1h1h1h1h1h1h1h1h1h1h1h1h1h1h1h1h1h1h1h1h1h1h1h1h1h1V25h1h1h1h1h1h1h1h1h1h1h1h1h1h1h1h1h1h1h1h1h1h1h1h1h1h1h1h1h1h1h1h1h1h1h1h1h1h1h1h1h1h1h1h1h1h1h1h1h1h1h1h1h1h1h1h1h1h1h1h1h1h1h1h1h1h1h1h1h1h1h1h1h1h1h1h1h1h1h1h1h1h1h1h1V27h1h1h1h1h1h1h1h1V28V29h-1h-1h-1h-1h-1h-1h-1h-1V31h-1h-1h-1h-1h-1h-1h-1h-1h-1h-1h-1h-1h-1h-1h-1h-1h-1h-1h-1h-1h-1h-1h-1h-1h-1h-1h-1h-1h-1h-1h-1h-1h-1h-1h-1h-1h-1h-1h-1h-1h-1h-1h-1h-1h-1h-1h-1h-1h-1h-1h-1h-1h-1h-1h-1h-1h-1h-1h-1h-1h-1h-1h-1h-1h-1h-1h-1h-1h-1h-1h-1h-1h-1h-1h-1h-1h-1h-1h-1h-1h-1h-1h-1h-1V29h-1h-1h-1h-1h-1h-1h-1h-1h-1h-1h-1h-1h-1h-1h-1h-1h-1h-1h-1h-1h-1h-1h-1h-1h-1h-1h-1h-1h-1h-1h-1h-1h-1h-1h-1h-1h-1h-1h-1h-1h-1h-1h-1h-1h-1h-1h-1h-1h-1h-1h-1h-1h-1h-1h-1h-1h-1h-1h-1h-1h-1h-1h-1V30h-1h-1h-1V29h-1V30h-1h-1h-1h-1h-1h-1h-1h-1h-1V29h-1h-1h-1V30h-1h-1h-1h-1V31h-1h-1h-1h-1V30h-1h-1h-1V31h-1V30h-1h-1V31h-1V30h-1h-1h-1V31h-1V30h-1h-1V31h-1h-1h-1h-1V30h-1h-1V31h-1h-1V30h-1h-1h-1h-1V31h-1V29h-1V31h-1V30h-1V33h-1V32h-1V31h-1V32h-1V34h-1V33h-1h-1V32h-1h-1V33h-1h-1h-1h-1V31h-1V32h-1h-1V33h-1h-1V32h-1h-1V33h-1V32h-1h-1h-1V31h-1V32h-1V33h-1h-1V32h-1V33h-1h-1h-1h-1h-1h-1h-1V31h-1V32h-1V31h-1V33h-1h-1V32h-1V33h-1h-1V32h-1V34h-1h-1V32h-1V34h-1h-1h-1V33h-1h-1h-1V35h-1h-1h-1V32h-1h-1V31h-1V33h-1V32h-1V34h-1h-1V33h-1h-1V34h-1V32h-1h-1V33h-1h-1h-1V34h-1h-1V33h-1h-1h-1V34h-1h-1V33h-1V32h-1V33h-1V32h-1h-1V34h-1h-1h-1V35h-1h-1V34h-1V33h-1V32h-1V34h-1V33h-1V34h-1V33h-1V31h-1V33h-1V34h-1h-1h-1h-1V36h-1V35h-1V34h-1h-1h-1h-1h-1h-1h-1V32h-1h-1h-1h-1h-1V34h-1V33h-1V35h-1h-1h-1V36h-1V35h-1h-1V34h-1h-1h-1h-1h-1h-1V33h-1h-1V35h-1V33h-1h-1V36h-1V35h-1V34h-1h-1V35h-1V34h-1V33h-1V34h-1V31h-1h-1V32h-1V34h-1h-1V35h-1h-1h-1V36h-1V34h-1V35h-1V36h-1V37h-1h-1V36h-1V34h-1V32h-1h-1V36h-1V38h-1h-1h-1V37h-1h-1V38h-1V39h-1h-1h-1V36h-1V37h-1V40h-1V39h-1V38h-1h-1h-1V36h-1V38h-1V37h-1h-1h-1V39h-1h-1V41h-1V35h-1V39h-1V33h-1V35h-1V36h-1h-1V41h-1h-1V36h-1h-1V37h-1V38h-1V37h-1h-1V38h-1V39h-1h-1h-1V38h-1V36h-1h-1V37h-1V39h-1h-1h-1h-1h-1V36h-1h-1V38h-1V41h-1V35h-1h-1V38h-1h-1V40h-1V38h-1h-1h-1V36h-1h-1V32h-1h-1V34h-1V39h-1V37h-1h-1V39h-1V40h-1V38h-1V37h-1V40h-1h-1h-1h-1h-1V38h-1V40h-1V38h-1V37h-1V38h-1V41h-1V40h-1h-1V36h-1V37h-1V40h-1V38h-1V40h-1h-1V39h-1h-1h-1h-1V37h-1h-1h-1h-1V41h-1V37h-1V33h-1V34h-1V37h-1V38h-1V37h-1h-1h-1V38h-1h-1h-1h-1V36h-1V35h-1h-1V36h-1h-1V33h-1V35h-1V34h-1V39h-1h-1h-1V37h-1V40h-1V39h-1V41h-1V43h-1V36h-1V37h-1V39h-1h-1h-1V38h-1V39h-1h-1h-1h-1V40h-1V36h-1V35h-1h-1V40h-1V41h-1V40h-1h-1h-1V38h-1h-1V41h-1h-1h-1V38h-1h-1h-1h-1V40h-1V39h-1V41h-1V40h-1V39h-1h-1V38h-1h-1V36h-1V34h-1V35h-1V38h-1h-1h-1h-1V37h-1h-1V35h-1V37h-1V36h-1V42h-1V38h-1h-1h-1V36h-1h-1V42h-1V37h-1V38h-1V37h-1h-1V39h-1h-1h-1V38h-1h-1V35h-1V33h-1V35h-1V41h-1V40h-1h-1h-1V41h-1V42h-1h-1h-1h-1V38h-1h-1h-1h-1h-1V37h-1h-1V39h-1h-1V36h-1V35h-1V33h-1V36h-1h-1V37h-1V38h-1V41h-1V38h-1V35h-1h-1h-1V37h-1h-1V38h-1V37h-1V38h-1V37h-1h-1V35h-1V34h-1V33h-1h-1V38h-1V39h-1h-1h-1V38h-1V39h-1V40h-1h-1V38h-1V37h-1V40h-1V38h-1V40h-1V39h-1h-1V40h-1V36h-1V34h-1V33h-1V34h-1V33h-1h-1h-1V34h-1h-1h-1V35h-1V36h-1h-1V34h-1h-1V36h-1V38h-1V35h-1V34h-1V33h-1V34h-1V35h-1V36h-1V35h-1V33h-1h-1V36h-1V33h-1V31h-1V32h-1V35h-1V41h-1V39h-1h-1V40h-1V35h-1h-1h-1V40h-1h-1V38h-1V37h-1V39h-1V37h-1h-1V36h-1V38h-1V37h-1h-1h-1V38h-1h-1h-1V40h-1h-1h-1V41h-1V39h-1V43h-1V40h-1V39h-1V38h-1V36h-1V39h-1V38h-1V37h-1V42h-1V39h-1V37h-1V36h-1V37h-1V39h-1h-1h-1V36h-1V35h-1V36h-1V38h-1V37h-1V40h-1V38h-1V37h-1h-1h-1V39h-1V38h-1h-1V33h-1V34h-1h-1V38h-1h-1V40h-1V38h-1h-1h-1V37h-1V38h-1h-1V37h-1h-1V33h-1h-1V35h-1V38h-1h-1V39h-1h-1h-1V38h-1V35h-1V38h-1h-1V36h-1V41h-1V40h-1V38h-1V40h-1h-1h-1h-1h-1h-1h-1V39h-1h-1V34h-1h-1h-1V38h-1V40h-1h-1V38h-1V39h-1V42h-1V39h-1h-1h-1h-1V37h-1V34h-1V37h-1V33h-1V35h-1h-1V34h-1h-1h-1V35h-1V34h-1h-1V36h-1V35h-1h-1h-1h-1h-1h-1h-1V31h-1h-1V35h-1V42h-1V36h-1h-1V37h-1h-1V39h-1V40h-1V37h-1V38h-1V39h-1V38h-1h-1V37h-1V36h-1V37h-1V39h-1V38h-1V37h-1h-1V39h-1V40h-1h-1V37h-1V38h-1V42h-1h-1V33h-1h-1V32h-1V38h-1V36h-1V39h-1h-1h-1V37h-1h-1h-1h-1h-1h-1V36h-1V39h-1V36h-1V35h-1V39h-1V38h-1h-1h-1V39h-1V36h-1h-1h-1V37h-1h-1h-1h-1V38h-1V40h-1h-1h-1V38h-1V37h-1V34h-1h-1h-1V39h-1V38h-1V37h-1h-1V34h-1V36h-1V40h-1h-1V38h-1V36h-1V38h-1V37h-1h-1h-1V36h-1V40h-1V38h-1V37h-1h-1V36h-1h-1h-1h-1h-1h-1V37h-1V38h-1V41h-1V36h-1h-1V38h-1V41h-1V37h-1V36h-1h-1h-1V38h-1V35h-1h-1V33h-1V37h-1V36h-1h-1V37h-1V41h-1V36h-1V38h-1h-1h-1V36h-1h-1V39h-1h-1V35h-1V34h-1V33h-1V36h-1h-1V40h-1h-1V39h-1h-1V41h-1V43h-1V38h-1V37h-1h-1V40h-1V38h-1V36h-1V39h-1V38h-1h-1h-1h-1h-1h-1V39h-1V36h-1V43h-1V40h-1h-1h-1h-1V39h-1V43h-1V34h-1V37h-1V33h-1V34h-1V32h-1V36h-1V35h-1V34h-1h-1V35h-1h-1V34h-1V38h-1V35h-1h-1h-1V34h-1V38h-1V36h-1V35h-1h-1V38h-1V34h-1V35h-1V38h-1V36h-1h-1h-1V34h-1h-1V36h-1h-1h-1h-1V32h-1V33h-1V35h-1V39h-1V38h-1V40h-1V39h-1V37h-1V40h-1h-1V39h-1V41h-1V40h-1V37h-1h-1V36h-1V37h-1h-1V43h-1V39h-1h-1h-1h-1V34h-1V35h-1V32h-1V35h-1V36h-1h-1h-1h-1V35h-1h-1V38h-1V37h-1V36h-1V34h-1V35h-1h-1h-1h-1h-1V34h-1h-1V35h-1V33h-1h-1V36h-1V40h-1V38h-1V39h-1V38h-1V39h-1h-1V41h-1V40h-1V44h-1V39h-1V40h-1V39h-1V40h-1h-1h-1V41h-1V35h-1h-1V33h-1V37h-1h-1V39h-1V35h-1V36h-1V39h-1h-1V38h-1h-1V39h-1V36h-1V34h-1h-1h-1V39h-1V38h-1h-1h-1h-1V37h-1V39h-1h-1h-1V40h-1h-1V39h-1h-1h-1h-1V37h-1V36h-1V37h-1h-1V38h-1V40h-1V39h-1V37h-1h-1V38h-1h-1h-1h-1V36h-1V39h-1h-1V36h-1V35h-1V36h-1V37h-1V42h-1V39h-1V38h-1V36h-1V34h-1h-1h-1V35h-1h-1V37h-1h-1V35h-1V36h-1h-1V35h-1V36h-1V37h-1V38h-1V37h-1V38h-1V37h-1V35h-1V37h-1V39h-1V38h-1h-1h-1h-1h-1V36h-1V41h-1V36h-1V37h-1h-1V39h-1V38h-1V35h-1h-1V41h-1V39h-1V33h-1h-1V35h-1V40h-1V42h-1V40h-1V41h-1V39h-1V37h-1V39h-1V38h-1h-1V37h-1V36h-1h-1V39h-1V44h-1V39h-1h-1V32h-1V34h-1V32h-1V38h-1h-1V37h-1V36h-1V39h-1h-1h-1V38h-1V40h-1V39h-1h-1V38h-1h-1V37h-1V40h-1V39h-1h-1V37h-1V40h-1V39h-1V38h-1h-1h-1V37h-1V39h-1h-1V38h-1V43h-1V38h-1V40h-1h-1V38h-1V35h-1V34h-1V37h-1V39h-1h-1V42h-1V36h-1V39h-1V40h-1V37h-1V39h-1V36h-1h-1V40h-1V38h-1h-1V36h-1V37h-1h-1V41h-1V36h-1V34h-1V35h-1V39h-1V42h-1V38h-1V39h-1V38h-1V39h-1V38h-1V37h-1h-1V36h-1V37h-1V38h-1V37h-1V42h-1V38h-1V36h-1V39h-1V38h-1V39h-1h-1V34h-1V31h-1V33h-1V38h-1h-1h-1h-1h-1V39h-1h-1h-1V36h-1h-1V38h-1h-1V37h-1V39h-1h-1V40h-1V34h-1V38h-1V35h-1V39h-1V35h-1h-1h-1V38h-1V39h-1h-1V38h-1V37h-1h-1V38h-1V39h-1V37h-1V38h-1V36h-1V37h-1h-1V35h-1V36h-1V37h-1V38h-1V41h-1V38h-1V37h-1V39h-1h-1V37h-1h-1h-1V38h-1V36h-1h-1V39h-1h-1V36h-1V33h-1h-1V31h-1V34h-1V36h-1V38h-1V35h-1h-1h-1V33h-1V34h-1h-1V35h-1V34h-1h-1h-1h-1V35h-1h-1V36h-1h-1V35h-1h-1h-1h-1V34h-1V36h-1V35h-1V36h-1h-1h-1h-1V35h-1h-1h-1h-1V34h-1V35h-1V34h-1h-1h-1V33h-1V32h-1V33h-1V35h-1V36h-1V34h-1V36h-1h-1V34h-1V38h-1V36h-1V35h-1h-1h-1h-1V36h-1V34h-1V36h-1V32h-1h-1V34h-1V42h-1V35h-1V40h-1h-1h-1V37h-1h-1V39h-1V37h-1V39h-1V37h-1h-1V38h-1h-1h-1V39h-1V40h-1h-1V39h-1V40h-1h-1h-1V37h-1V39h-1h-1V38h-1V36h-1V38h-1V39h-1V38h-1V35h-1V34h-1V35h-1V38h-1h-1h-1V36h-1V37h-1V36h-1h-1V37h-1V39h-1V37h-1h-1V35h-1h-1V33h-1V37h-1V35h-1V39h-1V38h-1h-1V37h-1V38h-1V39h-1V36h-1V39h-1h-1h-1V43h-1V38h-1V39h-1V38h-1V37h-1V39h-1V37h-1V36h-1V35h-1V40h-1h-1V39h-1V38h-1V37h-1V40h-1h-1h-1V41h-1h-1V36h-1V35h-1V39h-1h-1V43h-1V40h-1V38h-1V37h-1V39h-1V40h-1V37h-1V38h-1h-1V39h-1V40h-1h-1V39h-1h-1h-1h-1h-1h-1V43h-1V39h-1V40h-1V41h-1h-1V40h-1V34h-1h-1V33h-1V38h-1V37h-1V38h-1h-1V39h-1V36h-1h-1V37h-1V34h-1V38h-1h-1V36h-1h-1V38h-1h-1h-1V37h-1h-1h-1h-1V39h-1h-1V36h-1V39h-1V32h-1h-1V33h-1V39h-1V36h-1V39h-1h-1h-1V36h-1V35h-1h-1V34h-1V39h-1h-1V37h-1V35h-1V34h-1V37h-1h-1h-1V38h-1V39h-1h-1h-1V37h-1h-1V39h-1h-1h-1h-1V38h-1V33h-1h-1h-1V36h-1V39h-1h-1V40h-1V39h-1V38h-1V39h-1h-1h-1V36h-1V37h-1h-1V35h-1V38h-1V40h-1V38h-1h-1h-1V33h-1V34h-1h-1V37h-1h-1h-1h-1V38h-1V37h-1V36h-1V34h-1V35h-1V37h-1V38h-1h-1V39h-1V40h-1V39h-1V37h-1V39h-1V42h-1V40h-1V39h-1h-1V40h-1V34h-1h-1V36h-1V39h-1V37h-1h-1V38h-1h-1V36h-1V35h-1V37h-1V36h-1h-1V39h-1V41h-1V36h-1V38h-1V37h-1h-1V41h-1V38h-1V41h-1V37h-1V36h-1V37h-1V39h-1V38h-1V36h-1V35h-1V36h-1V34h-1V38h-1V41h-1V38h-1V35h-1V38h-1h-1h-1V39h-1h-1V36h-1h-1V33h-1h-1V34h-1V39h-1V41h-1h-1V37h-1h-1h-1h-1h-1V39h-1V38h-1V40h-1h-1h-1V38h-1h-1V43h-1h-1V39h-1V35h-1V36h-1V35h-1V39h-1h-1h-1V38h-1V39h-1V35h-1V38h-1h-1V37h-1V36h-1h-1V40h-1h-1V39h-1V38h-1h-1h-1V34h-1h-1V37h-1V43h-1V37h-1h-1h-1V38h-1V35h-1V33h-1V30h-1V33h-1V37h-1h-1V33h-1h-1V34h-1h-1V36h-1V35h-1h-1V36h-1h-1V35h-1V36h-1V34h-1h-1V35h-1h-1h-1h-1V34h-1h-1V36h-1h-1V35h-1V34h-1V35h-1h-1V31h-1V33h-1V38h-1V43h-1V39h-1V41h-1h-1h-1V39h-1h-1h-1V40h-1h-1V39h-1V43h-1V39h-1h-1h-1V36h-1V37h-1V35h-1V36h-1V39h-1V41h-1V36h-1h-1V40h-1h-1V37h-1V38h-1V39h-1V40h-1h-1V39h-1h-1V36h-1h-1V41h-1V40h-1V34h-1V35h-1V34h-1V39h-1h-1h-1V40h-1V38h-1V37h-1V39h-1V38h-1h-1V37h-1V36h-1h-1V39h-1h-1V40h-1V43h-1V40h-1V39h-1h-1V41h-1h-1V39h-1V36h-1V34h-1V35h-1V37h-1h-1h-1h-1V35h-1V33h-1V34h-1V37h-1V39h-1V40h-1V37h-1V38h-1V36h-1V39h-1V41h-1V39h-1h-1h-1h-1V36h-1h-1V37h-1V40h-1V36h-1h-1h-1h-1h-1h-1V38h-1h-1V41h-1Z" fill="#3c3cce"/><path d="M0 28V24h1h1h1h1h1h1h1h1h1h1h1h1h1h1h1h1h1h1h1h1h1h1h1h1h1h1h1h1h1h1h1h1V25h1h1h1V23h1h1h1h1h1h1h1h1h1h1h1h1h1h1h1h1h1h1h1h1h1h1V25h1h1h1V24h1h1h1h1h1h1h1h1h1h1V23h1h1h1h1h1h1h1h1h1h1h1h1h1h1h1h1V24h1h1h1h1h1h1h1V23h1h1h1h1V25h1V26h1V25h1V24h1h1V25h1h1h1h1h1h1h1h1h1h1h1h1h1h1h1h1h1h1h1h1h1h1V24h1h1h1V26h1V25h1V24h1V23h1h1h1h1h1h1h1h1V24h1h1h1h1h1h1h1h1h1h1h1h1h1h1h1h1h1V25h1V26h1V25h1V24h1h1h1h1h1h1h1h1h1h1h1h1h1V25h1V24h1h1h1h1V25h1h1h1V24h1h1h1h1h1h1h1h1h1h1h1h1h1h1h1h1h1h1h1h1h1h1h1h1h1h1h1h1h1h1h1h1h1h1V23h1h1h1h1h1V25h1h1h1V23h1V24h1h1h1h1h1h1h1h1h1h1h1h1h1h1h1h1h1h1h1h1h1V26h1h1h1V25h1h1h1h1h1h1h1h1V24h1h1h1h1h1V23h1h1h1h1h1V25h1h1h1V24h1h1h1h1h1h1h1h1h1h1h1h1h1h1V25h1h1h1V23h1h1h1h1h1h1h1h1h1h1h1V25h1h1h1V24h1h1h1h1h1h1V25h1h1h1h1h1h1h1V24h1h1h1h1h1h1h1h1h1h1h1V26h1V25h1V26h1V24h1h1h1h1h1h1h1h1h1h1h1h1h1h1h1h1h1V25h1V24h1h1h1h1h1h1h1h1h1h1h1h1h1h1h1h1h1h1h1h1V25h1h1h1V24h1h1h1h1h1h1h1h1h1h1h1h1h1h1h1h1V25h1V26h1h1V25h1h1h1h1h1h1h1h1h1h1h1h1h1V26h1h1V25h1V24h1h1V23h1h1h1h1h1h1h1h1h1h1h1h1h1V24h1h1h1h1h1h1h1h1h1h1h1h1h1h1h1V26h1h1h1V25h1h1h1h1h1h1h1h1h1h1h1h1h1h1h1V26h1h1h1V25h1h1h1h1h1h1h1h1h1h1h1h1h1h1h1h1h1h1h1h1h1h1h1h1h1h1h1h1h1h1h1h1h1h1h1h1h1h1V26h1V25h1V26h1V25h1h1h1h1V24h1h1h1h1h1h1h1h1h1h1h1h1h1h1h1h1h1h1h1h1h1h1h1h1h1h1h1h1h1h1h1V25h1h1V26h1V24h1h1h1h1h1h1h1V23h1h1h1h1h1h1h1h1h1V25h1h1h1V24h1h1h1h1h1h1h1h1h1h1h1h1h1V25h1h1h1h1h1h1h1V26h1V25h1h1V24h1h1h1h1h1h1h1h1h1h1h1h1h1h1h1h1h1V25h1h1h1V23h1h1h1h1V24h1h1h1h1h1h1h1h1h1h1h1h1V23h1h1h1h1h1h1h1V24h1h1h1h1V25h1h1h1V24h1h1V26h1V25h1h1V23h1h1h1h1h1h1h1h1V24h1h1h1h1h1h1h1h1V25h1h1V26h1V24h1h1h1h1h1h1h1h1h1h1V23h1h1V24h1h1h1h1h1h1h1h1h1h1h1h1h1h1V25h1h1h1h1h1V24h1h1V26h1h1V25h1V24h1h1h1h1h1h1h1h1h1h1h1h1h1h1h1h1h1V25h1h1h1h1h1h1h1h1h1h1h1h1h1h1V24h1h1h1h1h1h1h1h1V25h1h1h1V24h1h1h1h1h1h1h1h1h1h1h1V26h1V25h1h1V24h1h1h1h1h1h1h1h1h1h1h1h1h1h1V23h1h1V25h1V26h1h1V25h1h1h1h1h1h1h1h1h1h1h1h1h1h1h1V24h1h1h1h1V25h1V24h1V25h1V23h1h1h1h1h1h1h1h1h1h1h1V24h1h1h1h1h1h1h1h1h1V26h1h1h1V25h1h1h1h1h1h1h1h1h1h1h1h1h1h1h1h1h1h1h1h1h1h1h1h1h1h1h1h1h1V26h1V25h1V26h1V24h1h1h1h1h1h1h1h1h1h1h1h1h1h1h1h1h1h1V23h1h1h1h1h1h1h1h1h1h1h1h1h1V24h1V25h1h1V26h1V24h1h1h1h1h1h1h1h1h1h1h1h1h1V26h1V25h1h1V24h1h1h1h1h1h1h1h1V23h1h1h1h1h1h1h1h1h1h1h1h1h1h1h1h1h1V24h1h1h1h1h1h1h1h1h1h1h1h1V25h1h1h1V24h1V23h1h1h1h1h1h1h1h1h1h1h1h1h1h1h1h1h1h1h1h1h1h1h1V24h1h1h1h1h1h1h1h1h1V25h1h1h1V24h1h1h1h1h1h1h1h1h1h1h1h1h1h1h1V23h1h1h1h1h1h1h1h1h1h1V24h1V25h1V26h1h1V25h1h1h1h1h1h1h1h1h1h1h1h1h1h1h1h1V26h1V25h1V26h1V24h1h1h1h1h1h1h1h1h1h1h1V26h1V25h1V26h1V24h1h1h1h1h1h1h1h1h1V23h1h1h1h1h1h1h1h1h1h1h1h1h1V25h1h1V26h1V24h1h1h1h1h1h1h1h1h1h1h1V26h1h1h1V24h1h1h1h1h1h1V23h1h1h1h1h1V24h1h1h1h1h1V25h1h1h1V24h1h1h1h1h1h1h1h1V23h1h1h1h1h1h1h1h1h1h1h1h1h1h1h1h1h1h1h1h1h1h1h1h1h1h1h1h1h1V25h1h1V26h1V25h1h1h1h1h1h1h1h1h1h1h1h1V26h1V25h1h1h1h1h1h1h1V24h1h1h1h1V25h1h1h1h1V24h1h1h1h1h1h1h1V23h1h1h1h1h1h1h1h1h1V25h1h1h1V24h1h1h1h1h1h1h1h1V25h1h1h1h1h1h1h1h1h1V26h1V25h1h1V24h1h1h1h1h1h1h1h1h1h1h1h1h1h1V23h1h1h1h1V24h1V25h1h1V23h1h1h1h1h1h1V24h1h1h1h1h1h1h1h1h1h1h1h1h1V25h1h1h1h1h1h1h1V26h1V25h1V24h1h1h1h1h1h1h1h1V23h1h1h1h1h1h1h1h1h1h1h1h1h1h1V25h1h1h1V23h1h1h1h1h1h1h1h1h1h1h1h1h1h1h1h1h1h1h1V25h1h1h1V23h1h1h1h1h1h1h1h1h1h1h1h1h1h1V25h1h1h1V24h1h1h1h1h1h1h1h1h1h1h1h1h1h1h1h1h1h1V23h1h1h1h1h1h1h1h1h1h1h1h1h1h1h1h1V24h1V25h1V26h1V25h1V24h1h1h1h1h1h1h1V25h1h1h1h1h1h1h1V24h1h1h1h1h1h1h1h1h1h1h1h1h1h1h1h1h1h1h1h1h1h1h1h1V25h1h1h1V23h1V24h1h1h1h1h1h1h1h1h1h1h1h1h1h1h1h1h1h1h1h1h1h1V25h1h1V26h1h1V25h1h1h1h1h1h1h1h1h1h1h1V26h1h1h1h1h1h1h1h1h1h1h1h1h1h1h1h1V25h1h1h1h1h1h1h1h1h1h1h1V26h1h1h1h1h1h1h1h1V25h1h1h1h1h1h1h1h1h1h1h1h1h1h1h1V26h1h1h1V25h1h1h1h1h1h1h1h1h1h1h1h1h1h1h1h1h1h1V26h1h1h1h1h1h1h1h1h1h1h1h1h1h1h1h1h1V27h1V26h1h1h1h1h1h1h1h1h1h1h1h1h1h1h1h1h1h1h1h1h1h1h1h1h1h1h1h1h1h1h1h1h1h1h1h1h1h1h1h1h1h1h1h1h1h1V25h1h1h1h1h1V26h1h1h1h1h1h1h1h1V27h1h1h1V26h1h1h1V27h1h1h1h1h1h1h1h1h1h1h1h1h1h1h1h1h1h1h1h1h1h1h1h1h1h1h1h1h1h1h1h1h1h1h1h1h1h1h1h1h1h1h1h1h1h1h1h1h1h1h1h1h1h1h1h1h1h1V28h1h1h1h1h1h1h1h1h1h1h1h1h1h1h1h1h1h1h1h1h1h1h1h1h1h1h1h1h1h1h1h1h1h1h1h1h1h1h1h1h1h1h1h1h1h1h1h1h1h1h1h1V26h1h1h1h1h1h1h1h1h1h1h1h1h1h1h1h1h1h1h1h1h1h1h1h1h1h1h1h1h1h1h1h1h1h1h1h1h1h1h1h1h1h1h1h1h1h1h1h1h1h1h1h1h1h1h1h1h1h1h1h1h1h1h1h1h1h1h1h1h1h1h1h1h1h1h1h1h1h1h1h1h1h1h1h1V28h1h1h1h1h1h1h1h1V28V28h-1h-1h-1h-1h-1h-1h-1h-1V30h-1h-1h-1h-1h-1h-1h-1h-1h-1h-1h-1h-1h-1h-1h-1h-1h-1h-1h-1h-1h-1h-1h-1h-1h-1h-1h-1h-1h-1h-1h-1h-1h-1h-1h-1h-1h-1h-1h-1h-1h-1h-1h-1h-1h-1h-1h-1h-1h-1h-1h-1h-1h-1h-1h-1h-1h-1h-1h-1h-1h-1h-1h-1h-1h-1h-1h-1h-1h-1h-1h-1h-1h-1h-1h-1h-1h-1h-1h-1h-1h-1h-1h-1h-1V28h-1h-1h-1h-1h-1h-1h-1h-1h-1h-1h-1h-1h-1h-1h-1h-1h-1h-1h-1h-1h-1h-1h-1h-1h-1h-1h-1h-1h-1h-1h-1h-1h-1h-1h-1h-1h-1h-1h-1h-1h-1h-1h-1h-1h-1h-1h-1h-1h-1h-1h-1h-1V29h-1h-1h-1h-1h-1h-1h-1h-1h-1h-1h-1h-1h-1h-1h-1h-1h-1h-1h-1h-1h-1h-1h-1h-1h-1h-1h-1h-1h-1h-1h-1h-1h-1h-1h-1h-1h-1h-1h-1h-1h-1h-1h-1h-1h-1h-1h-1h-1h-1h-1h-1h-1h-1h-1h-1h-1h-1h-1V30h-1h-1h-1V29h-1h-1h-1V30h-1h-1h-1h-1h-1h-1h-1h-1V31h-1h-1h-1h-1h-1V30h-1h-1h-1h-1h-1h-1h-1h-1h-1h-1h-1h-1h-1h-1h-1h-1h-1h-1h-1h-1h-1h-1h-1h-1h-1h-1h-1h-1h-1h-1h-1h-1h-1h-1h-1h-1h-1h-1h-1h-1h-1h-1h-1h-1h-1h-1V29h-1V30h-1h-1h-1h-1h-1h-1h-1h-1h-1h-1h-1h-1h-1h-1h-1h-1h-1V31h-1h-1h-1h-1h-1h-1h-1h-1h-1h-1h-1h-1h-1h-1h-1h-1h-1h-1V30h-1h-1h-1V31h-1h-1h-1h-1h-1h-1h-1h-1h-1h-1h-1h-1h-1h-1h-1V30h-1h-1h-1h-1h-1h-1h-1h-1V31h-1h-1h-1h-1h-1h-1h-1h-1h-1h-1h-1V30h-1h-1h-1h-1h-1h-1h-1h-1h-1h-1h-1h-1h-1h-1h-1h-1V31h-1h-1h-1h-1h-1h-1h-1h-1h-1h-1h-1V30h-1h-1V31h-1h-1V32h-1h-1h-1h-1h-1h-1h-1h-1h-1h-1h-1h-1h-1h-1h-1h-1h-1h-1h-1h-1h-1h-1V33h-1V31h-1h-1h-1V32h-1h-1h-1h-1h-1h-1h-1h-1h-1h-1h-1h-1h-1h-1h-1h-1h-1h-1h-1h-1h-1h-1h-1h-1V31h-1h-1h-1h-1h-1h-1h-1V32h-1h-1h-1h-1h-1h-1h-1V31h-1V30h-1V31h-1V32h-1V33h-1h-1h-1h-1h-1h-1h-1h-1h-1h-1h-1h-1h-1h-1h-1h-1V32h-1h-1h-1h-1h-1h-1h-1h-1h-1h-1h-1h-1h-1h-1h-1h-1h-1h-1V31h-1h-1h-1V33h-1h-1h-1h-1h-1h-1h-1h-1h-1h-1h-1h-1h-1h-1V31h-1h-1h-1V33h-1h-1h-1h-1h-1h-1h-1h-1h-1h-1h-1h-1h-1h-1h-1h-1h-1h-1h-1V31h-1h-1h-1V33h-1h-1h-1h-1h-1h-1h-1h-1h-1h-1h-1h-1h-1h-1V32h-1h-1h-1h-1h-1h-1h-1h-1V31h-1V30h-1V31h-1h-1h-1h-1h-1h-1h-1V32h-1h-1h-1h-1h-1h-1h-1h-1h-1h-1h-1h-1h-1V33h-1h-1h-1h-1h-1h-1V31h-1h-1V32h-1V33h-1h-1h-1h-1V32h-1h-1h-1h-1h-1h-1h-1h-1h-1h-1h-1h-1h-1h-1V31h-1h-1V30h-1V31h-1h-1h-1h-1h-1h-1h-1h-1h-1V32h-1h-1h-1h-1h-1h-1h-1h-1V31h-1h-1h-1V33h-1h-1h-1h-1h-1h-1h-1h-1h-1V32h-1h-1h-1h-1h-1h-1h-1V31h-1h-1h-1h-1V32h-1h-1h-1h-1V31h-1h-1h-1h-1h-1h-1h-1V30h-1V31h-1h-1h-1h-1h-1h-1h-1h-1h-1h-1h-1h-1V30h-1V31h-1h-1V33h-1h-1h-1h-1h-1h-1h-1h-1h-1h-1h-1h-1h-1h-1h-1h-1h-1h-1h-1h-1h-1h-1h-1h-1h-1h-1h-1h-1h-1V32h-1h-1h-1h-1h-1h-1h-1h-1V31h-1h-1h-1V32h-1h-1h-1h-1h-1V33h-1h-1h-1h-1h-1V32h-1h-1h-1h-1h-1h-1V30h-1h-1h-1V32h-1h-1h-1h-1h-1h-1h-1h-1h-1h-1h-1V30h-1V31h-1h-1V33h-1h-1h-1h-1h-1h-1h-1h-1h-1h-1h-1h-1h-1V32h-1h-1h-1h-1h-1h-1h-1h-1h-1V30h-1V31h-1V30h-1V32h-1h-1h-1h-1h-1h-1h-1h-1h-1h-1h-1V30h-1V31h-1V30h-1V31h-1h-1h-1h-1h-1h-1h-1h-1h-1h-1h-1h-1h-1h-1h-1h-1V30h-1h-1V31h-1V32h-1V33h-1h-1h-1h-1h-1h-1h-1h-1h-1h-1V32h-1h-1h-1h-1h-1h-1h-1h-1h-1h-1h-1h-1h-1h-1h-1V31h-1h-1h-1V32h-1h-1h-1h-1h-1h-1h-1h-1h-1V33h-1h-1h-1h-1h-1h-1h-1h-1h-1h-1h-1h-1h-1h-1h-1h-1h-1h-1h-1h-1h-1h-1h-1V32h-1V31h-1h-1h-1V32h-1h-1h-1h-1h-1h-1h-1h-1h-1h-1h-1h-1V33h-1h-1h-1h-1h-1h-1h-1h-1h-1h-1h-1h-1h-1h-1h-1h-1h-1V32h-1h-1h-1h-1h-1h-1h-1h-1V31h-1h-1V30h-1V32h-1h-1h-1h-1h-1h-1h-1h-1h-1h-1h-1h-1h-1V30h-1V31h-1h-1V32h-1V33h-1h-1h-1h-1h-1h-1h-1h-1h-1h-1h-1h-1h-1V32h-1h-1h-1h-1h-1h-1h-1h-1h-1h-1h-1h-1h-1h-1h-1h-1h-1h-1V30h-1V31h-1V30h-1V31h-1h-1h-1h-1h-1h-1h-1h-1h-1h-1h-1h-1h-1h-1h-1h-1h-1h-1h-1h-1h-1h-1h-1h-1h-1h-1h-1h-1h-1V30h-1h-1h-1V32h-1h-1h-1h-1h-1h-1h-1h-1h-1V33h-1h-1h-1h-1h-1h-1h-1h-1h-1h-1h-1V31h-1V32h-1V31h-1V32h-1h-1h-1h-1V31h-1h-1h-1h-1h-1h-1h-1h-1h-1h-1h-1h-1h-1h-1h-1V30h-1h-1V31h-1V33h-1h-1V32h-1h-1h-1h-1h-1h-1h-1h-1h-1h-1h-1h-1h-1h-1V31h-1h-1V30h-1V32h-1h-1h-1h-1h-1h-1h-1h-1h-1h-1h-1V31h-1h-1h-1V32h-1h-1h-1h-1h-1h-1h-1h-1V31h-1h-1h-1h-1h-1h-1h-1h-1h-1h-1h-1h-1h-1h-1V32h-1h-1h-1h-1h-1h-1h-1h-1h-1h-1h-1h-1h-1h-1h-1h-1h-1V31h-1V30h-1h-1V32h-1h-1V31h-1h-1h-1h-1h-1V32h-1h-1h-1h-1h-1h-1h-1h-1h-1h-1h-1h-1h-1h-1V33h-1h-1V32h-1h-1h-1h-1h-1h-1h-1h-1h-1h-1V30h-1V31h-1h-1V32h-1h-1h-1h-1h-1h-1h-1h-1V33h-1h-1h-1h-1h-1h-1h-1h-1V31h-1h-1V30h-1V32h-1h-1V31h-1h-1h-1V32h-1h-1h-1h-1V33h-1h-1h-1h-1h-1h-1h-1V32h-1h-1h-1h-1h-1h-1h-1h-1h-1h-1h-1h-1V33h-1h-1h-1h-1V31h-1h-1h-1V32h-1h-1h-1h-1h-1h-1h-1h-1h-1h-1h-1h-1h-1h-1h-1h-1h-1V31h-1h-1V30h-1V31h-1h-1h-1h-1h-1h-1h-1V32h-1h-1h-1h-1h-1h-1h-1h-1h-1h-1h-1h-1h-1V31h-1h-1h-1V33h-1h-1h-1h-1h-1h-1h-1h-1h-1V32h-1h-1h-1h-1h-1h-1h-1V30h-1V31h-1h-1V32h-1h-1h-1h-1h-1h-1h-1h-1h-1h-1h-1h-1h-1h-1h-1h-1h-1h-1h-1h-1h-1h-1h-1h-1h-1h-1h-1h-1h-1h-1h-1V31h-1h-1h-1h-1V30h-1V31h-1V30h-1V31h-1h-1h-1h-1h-1h-1h-1h-1h-1h-1h-1h-1h-1h-1h-1h-1h-1h-1h-1h-1h-1h-1h-1h-1h-1h-1h-1h-1h-1h-1h-1h-1h-1h-1h-1h-1h-1h-1V30h-1h-1h-1V31h-1h-1h-1h-1h-1h-1h-1h-1h-1h-1h-1h-1h-1h-1h-1V30h-1h-1h-1V32h-1h-1h-1h-1h-1h-1h-1h-1h-1h-1h-1h-1h-1h-1h-1V33h-1h-1h-1h-1h-1h-1h-1h-1h-1h-1h-1h-1h-1V32h-1h-1V31h-1V30h-1h-1V31h-1h-1h-1h-1h-1h-1h-1h-1h-1h-1h-1h-1h-1V30h-1h-1V31h-1V32h-1h-1h-1h-1h-1h-1h-1h-1h-1h-1h-1h-1h-1h-1h-1h-1V31h-1h-1h-1V32h-1h-1h-1h-1h-1h-1h-1h-1h-1h-1h-1h-1h-1h-1h-1h-1h-1h-1h-1h-1V31h-1V32h-1h-1h-1h-1h-1h-1h-1h-1h-1h-1h-1h-1h-1h-1h-1h-1h-1V30h-1V31h-1V30h-1V32h-1h-1h-1h-1h-1h-1h-1h-1h-1h-1h-1V31h-1h-1h-1h-1h-1h-1h-1V32h-1h-1h-1h-1h-1h-1V31h-1h-1h-1V33h-1h-1h-1h-1h-1h-1h-1h-1h-1h-1h-1V31h-1h-1h-1V32h-1h-1h-1h-1h-1h-1h-1h-1h-1h-1h-1h-1h-1h-1V31h-1h-1h-1V33h-1h-1h-1h-1h-1V32h-1h-1h-1h-1h-1V31h-1h-1h-1h-1h-1h-1h-1h-1V30h-1h-1h-1V32h-1h-1h-1h-1h-1h-1h-1h-1h-1h-1h-1h-1h-1h-1h-1h-1h-1h-1h-1h-1h-1V33h-1V31h-1h-1h-1V33h-1h-1h-1h-1h-1V32h-1h-1h-1h-1h-1h-1h-1h-1h-1h-1h-1h-1h-1h-1h-1h-1h-1h-1h-1h-1h-1h-1h-1h-1h-1h-1h-1h-1h-1h-1h-1h-1h-1h-1V31h-1h-1h-1V32h-1h-1h-1h-1V31h-1V32h-1h-1h-1h-1h-1h-1h-1h-1h-1h-1h-1h-1h-1V31h-1V30h-1V31h-1V32h-1h-1h-1h-1h-1h-1h-1h-1h-1h-1h-1h-1h-1h-1h-1h-1h-1V33h-1h-1h-1h-1h-1h-1h-1h-1V32h-1V31h-1V30h-1V32h-1h-1h-1V31h-1h-1h-1h-1h-1h-1h-1h-1h-1h-1h-1h-1h-1h-1h-1h-1h-1h-1h-1h-1h-1h-1V32h-1h-1V31h-1V30h-1V31h-1V33h-1h-1h-1h-1V32h-1h-1h-1h-1h-1h-1h-1V33h-1h-1h-1h-1h-1h-1h-1h-1h-1h-1h-1h-1h-1h-1h-1h-1V32h-1h-1h-1h-1h-1h-1h-1h-1h-1h-1V31h-1h-1h-1V33h-1h-1h-1h-1h-1h-1h-1h-1h-1h-1h-1h-1h-1h-1h-1h-1h-1h-1h-1h-1h-1h-1V31h-1h-1h-1V32h-1h-1h-1h-1h-1h-1h-1h-1h-1h-1h-1h-1h-1h-1h-1h-1h-1h-1h-1h-1h-1h-1h-1h-1h-1h-1h-1h-1h-1h-1h-1h-1Z" fill="#6666de"/><rect x="255" y="0" width="2" height="56" fill="#000"/><rect x="1156" y="0" width="2" height="56" fill="#000"/></svg>
<div style="left:0px;top:943px;width:1920px;height:17px;background:#f0f0f0"></div>
<div style="left:153px;top:944px;width:1387px;height:15px;background:#cdcdcd"></div>
<svg style="left:138px;top:943px" width="14" height="17" viewBox="0 0 14 17"><path d="M8.6 5 L5 8.5 L8.6 12" fill="none" stroke="#505050" stroke-width="1.8"/></svg>
<svg style="left:1888px;top:943px" width="14" height="17" viewBox="0 0 14 17"><path d="M5.4 5 L9 8.5 L5.4 12" fill="none" stroke="#505050" stroke-width="1.8"/></svg>
<div style="left:0px;top:960px;width:1920px;height:56px;background:#f8f9fe"></div>
<div style="left:0px;top:960px;width:1920px;height:1px;background:#c4c4c4"></div>
<div style="left:0px;top:1015px;width:1920px;height:1px;background:#c8c8c8"></div>
<div style="left:0px;top:960px;width:540px;height:56px;border:1px solid #c6c6c9;background:#f8f9fe"></div>
<div style="left:4px;top:966px;width:4px;height:46px;"><div style="left:0;top:0px;width:4px;height:1px;background:#b4b4b8"></div><div style="left:0;top:4px;width:4px;height:1px;background:#b4b4b8"></div><div style="left:0;top:8px;width:4px;height:1px;background:#b4b4b8"></div><div style="left:0;top:12px;width:4px;height:1px;background:#b4b4b8"></div><div style="left:0;top:16px;width:4px;height:1px;background:#b4b4b8"></div><div style="left:0;top:20px;width:4px;height:1px;background:#b4b4b8"></div><div style="left:0;top:24px;width:4px;height:1px;background:#b4b4b8"></div><div style="left:0;top:28px;width:4px;height:1px;background:#b4b4b8"></div><div style="left:0;top:32px;width:4px;height:1px;background:#b4b4b8"></div><div style="left:0;top:36px;width:4px;height:1px;background:#b4b4b8"></div><div style="left:0;top:40px;width:4px;height:1px;background:#b4b4b8"></div><div style="left:0;top:44px;width:4px;height:1px;background:#b4b4b8"></div></div>
<div style="left:10px;top:961px;width:1px;height:54px;background:#dadade"></div>
<span style="left:17.2px;top:969.24px;font-size:12px;line-height:12px;color:#000;font-weight:normal;letter-spacing:0.007px;">Projekt-Rate (Hz)</span>
<span style="left:123.3px;top:969.24px;font-size:12px;line-height:12px;color:#000;font-weight:normal;letter-spacing:0.166px;">Einrasten</span>
<div style="left:116px;top:966px;width:1px;height:15px;background:#a0a0a0"></div>
<div style="left:116px;top:994px;width:1px;height:15px;background:#a0a0a0"></div>
<div style="left:208px;top:966px;width:1px;height:15px;background:#a0a0a0"></div>
<div style="left:208px;top:994px;width:1px;height:15px;background:#a0a0a0"></div>
<div style="left:17px;top:989px;width:93px;height:23px;background:#fff;border:1px solid #7a7a7a"></div>
<svg style="left:94.5px;top:996.8px" width="12" height="8" viewBox="-6 -4 12 8"><path d="M-4.2 -2 L0 2.2 L4.2 -2" fill="none" stroke="#444" stroke-width="1.1"/></svg>
<span style="left:23px;top:994.44px;font-size:12px;line-height:12px;color:#000;font-weight:normal;letter-spacing:-0.675px;">96000</span>
<div style="left:123px;top:989px;width:79px;height:23px;background:#e1e1e1;border:1px solid #adadad"></div>
<svg style="left:186.5px;top:996.8px" width="12" height="8" viewBox="-6 -4 12 8"><path d="M-4.2 -2 L0 2.2 L4.2 -2" fill="none" stroke="#444" stroke-width="1.1"/></svg>
<span style="left:127.5px;top:994.84px;font-size:12px;line-height:12px;color:#000;font-weight:normal;letter-spacing:-0.396px;">Aus</span>
<div style="left:215px;top:962px;width:318px;height:22px;background:#e1e1e1;border:1px solid #adadad"></div>
<svg style="left:517.5px;top:969.3px" width="12" height="8" viewBox="-6 -4 12 8"><path d="M-4.2 -2 L0 2.2 L4.2 -2" fill="none" stroke="#444" stroke-width="1.1"/></svg>
<span style="left:219.3px;top:967.34px;font-size:12px;line-height:12px;color:#000;font-weight:normal;letter-spacing:-0.145px;">Start und Ende der Auswahl</span>
<div style="left:215px;top:989px;width:156px;height:22px;background:#b3b6c9;border-top:2px solid #7e7e7e;border-left:2px solid #7e7e7e;border-bottom:1px solid #e4e4e4;border-right:1px solid #e4e4e4"></div>
<div style="left:217px;top:991px;width:1px;height:19px;background:#d2d2d6"></div>
<div style="left:218px;top:991px;width:11px;height:19px;background:#d2d2d6"></div>
<span style="left:218px;top:993.84px;width:11px;text-align:center;font-size:13px;line-height:14.91px;color:#1414c4">0</span>
<div style="left:229px;top:991px;width:11px;height:19px;background:#d2d2d6"></div>
<span style="left:229px;top:993.84px;width:11px;text-align:center;font-size:13px;line-height:14.91px;color:#1414c4">0</span>
<span style="left:240px;top:993.84px;width:13px;text-align:center;font-size:13px;line-height:14.91px;color:#1414c4">h</span>
<div style="left:253px;top:991px;width:11px;height:19px;background:#d2d2d6"></div>
<span style="left:253px;top:993.84px;width:11px;text-align:center;font-size:13px;line-height:14.91px;color:#1414c4">0</span>
<div style="left:264px;top:991px;width:11px;height:19px;background:#d2d2d6"></div>
<span style="left:264px;top:993.84px;width:11px;text-align:center;font-size:13px;line-height:14.91px;color:#1414c4">0</span>
<span style="left:275px;top:993.84px;width:16px;text-align:center;font-size:13px;line-height:14.91px;color:#1414c4">m</span>
<div style="left:291px;top:991px;width:11px;height:19px;background:#d2d2d6"></div>
<span style="left:291px;top:993.84px;width:11px;text-align:center;font-size:13px;line-height:14.91px;color:#1414c4">0</span>
<div style="left:302px;top:991px;width:11px;height:19px;background:#d2d2d6"></div>
<span style="left:302px;top:993.84px;width:11px;text-align:center;font-size:13px;line-height:14.91px;color:#1414c4">0</span>
<div style="left:313px;top:991px;width:5px;height:19px;background:#d2d2d6"></div>
<span style="left:313px;top:993.84px;width:5px;text-align:center;font-size:13px;line-height:14.91px;color:#1414c4">,</span>
<div style="left:318px;top:991px;width:11px;height:19px;background:#d2d2d6"></div>
<span style="left:318px;top:993.84px;width:11px;text-align:center;font-size:13px;line-height:14.91px;color:#1414c4">0</span>
<div style="left:329px;top:991px;width:11px;height:19px;background:#d2d2d6"></div>
<span style="left:329px;top:993.84px;width:11px;text-align:center;font-size:13px;line-height:14.91px;color:#1414c4">0</span>
<div style="left:340px;top:991px;width:11px;height:19px;background:#d2d2d6"></div>
<span style="left:340px;top:993.84px;width:11px;text-align:center;font-size:13px;line-height:14.91px;color:#1414c4">0</span>
<span style="left:351px;top:993.84px;width:11px;text-align:center;font-size:13px;line-height:14.91px;color:#1414c4">s</span>
<div style="left:362px;top:991px;width:1px;height:19px;background:#f4f4f8"></div>
<svg style="left:363px;top:997.5px" width="8" height="6" viewBox="0 0 8 6"><path d="M0.4 0.6 H7.6 L4 4.8 Z" fill="#000"/></svg>
<div style="left:377px;top:989px;width:156px;height:22px;background:#b3b6c9;border-top:2px solid #7e7e7e;border-left:2px solid #7e7e7e;border-bottom:1px solid #e4e4e4;border-right:1px solid #e4e4e4"></div>
<div style="left:379px;top:991px;width:1px;height:19px;background:#d2d2d6"></div>
<div style="left:380px;top:991px;width:11px;height:19px;background:#d2d2d6"></div>
<span style="left:380px;top:993.84px;width:11px;text-align:center;font-size:13px;line-height:14.91px;color:#1414c4">0</span>
<div style="left:391px;top:991px;width:11px;height:19px;background:#d2d2d6"></div>
<span style="left:391px;top:993.84px;width:11px;text-align:center;font-size:13px;line-height:14.91px;color:#1414c4">2</span>
<span style="left:402px;top:993.84px;width:13px;text-align:center;font-size:13px;line-height:14.91px;color:#1414c4">h</span>
<div style="left:415px;top:991px;width:11px;height:19px;background:#d2d2d6"></div>
<span style="left:415px;top:993.84px;width:11px;text-align:center;font-size:13px;line-height:14.91px;color:#1414c4">0</span>
<div style="left:426px;top:991px;width:11px;height:19px;background:#d2d2d6"></div>
<span style="left:426px;top:993.84px;width:11px;text-align:center;font-size:13px;line-height:14.91px;color:#1414c4">2</span>
<span style="left:437px;top:993.84px;width:16px;text-align:center;font-size:13px;line-height:14.91px;color:#1414c4">m</span>
<div style="left:453px;top:991px;width:11px;height:19px;background:#d2d2d6"></div>
<span style="left:453px;top:993.84px;width:11px;text-align:center;font-size:13px;line-height:14.91px;color:#1414c4">1</span>
<div style="left:464px;top:991px;width:11px;height:19px;background:#d2d2d6"></div>
<span style="left:464px;top:993.84px;width:11px;text-align:center;font-size:13px;line-height:14.91px;color:#1414c4">5</span>
<div style="left:475px;top:991px;width:5px;height:19px;background:#d2d2d6"></div>
<span style="left:475px;top:993.84px;width:5px;text-align:center;font-size:13px;line-height:14.91px;color:#1414c4">,</span>
<div style="left:480px;top:991px;width:11px;height:19px;background:#d2d2d6"></div>
<span style="left:480px;top:993.84px;width:11px;text-align:center;font-size:13px;line-height:14.91px;color:#1414c4">2</span>
<div style="left:491px;top:991px;width:11px;height:19px;background:#d2d2d6"></div>
<span style="left:491px;top:993.84px;width:11px;text-align:center;font-size:13px;line-height:14.91px;color:#1414c4">3</span>
<div style="left:502px;top:991px;width:11px;height:19px;background:#d2d2d6"></div>
<span style="left:502px;top:993.84px;width:11px;text-align:center;font-size:13px;line-height:14.91px;color:#1414c4">0</span>
<span style="left:513px;top:993.84px;width:11px;text-align:center;font-size:13px;line-height:14.91px;color:#1414c4">s</span>
<div style="left:524px;top:991px;width:1px;height:19px;background:#f4f4f8"></div>
<svg style="left:525px;top:997.5px" width="8" height="6" viewBox="0 0 8 6"><path d="M0.4 0.6 H7.6 L4 4.8 Z" fill="#000"/></svg>
<div style="left:540px;top:960px;width:247px;height:56px;border:1px solid #c6c6c9;background:#f8f9fe"></div>
<div style="left:544px;top:966px;width:4px;height:46px;"><div style="left:0;top:0px;width:4px;height:1px;background:#b4b4b8"></div><div style="left:0;top:4px;width:4px;height:1px;background:#b4b4b8"></div><div style="left:0;top:8px;width:4px;height:1px;background:#b4b4b8"></div><div style="left:0;top:12px;width:4px;height:1px;background:#b4b4b8"></div><div style="left:0;top:16px;width:4px;height:1px;background:#b4b4b8"></div><div style="left:0;top:20px;width:4px;height:1px;background:#b4b4b8"></div><div style="left:0;top:24px;width:4px;height:1px;background:#b4b4b8"></div><div style="left:0;top:28px;width:4px;height:1px;background:#b4b4b8"></div><div style="left:0;top:32px;width:4px;height:1px;background:#b4b4b8"></div><div style="left:0;top:36px;width:4px;height:1px;background:#b4b4b8"></div><div style="left:0;top:40px;width:4px;height:1px;background:#b4b4b8"></div><div style="left:0;top:44px;width:4px;height:1px;background:#b4b4b8"></div></div>
<div style="left:550px;top:961px;width:1px;height:54px;background:#dadade"></div>
<div style="left:551px;top:968px;width:224.5px;height:39px;background:#b3b6c9;border-top:2px solid #7e7e7e;border-left:2px solid #7e7e7e;border-bottom:1px solid #e4e4e4;border-right:1px solid #e4e4e4"></div>
<div style="left:553px;top:970px;width:0px;height:36px;background:#d2d2d6"></div>
<div style="left:553px;top:970px;width:20px;height:36px;background:#d2d2d6"></div>
<span style="left:553px;top:973.10px;width:20px;text-align:center;font-size:27.5px;line-height:31.54px;color:#1414c4">0</span>
<div style="left:573px;top:970px;width:20.5px;height:36px;background:#d2d2d6"></div>
<span style="left:573px;top:973.10px;width:20.5px;text-align:center;font-size:27.5px;line-height:31.54px;color:#1414c4">0</span>
<span style="left:593.5px;top:973.10px;width:31px;text-align:center;font-size:27.5px;line-height:31.54px;color:#1414c4">h</span>
<div style="left:624.5px;top:970px;width:20px;height:36px;background:#d2d2d6"></div>
<span style="left:624.5px;top:973.10px;width:20px;text-align:center;font-size:27.5px;line-height:31.54px;color:#1414c4">0</span>
<div style="left:644.5px;top:970px;width:20px;height:36px;background:#d2d2d6"></div>
<span style="left:644.5px;top:973.10px;width:20px;text-align:center;font-size:27.5px;line-height:31.54px;color:#1414c4">0</span>
<span style="left:664.5px;top:973.10px;width:38px;text-align:center;font-size:27.5px;line-height:31.54px;color:#1414c4">m</span>
<div style="left:702.5px;top:970px;width:20px;height:36px;background:#d2d2d6"></div>
<span style="left:702.5px;top:973.10px;width:20px;text-align:center;font-size:27.5px;line-height:31.54px;color:#1414c4">0</span>
<div style="left:722.5px;top:970px;width:20px;height:36px;background:#d2d2d6"></div>
<span style="left:722.5px;top:973.10px;width:20px;text-align:center;font-size:27.5px;line-height:31.54px;color:#1414c4">0</span>
<span style="left:745.9px;top:973.10px;width:23px;text-align:center;font-size:27.5px;line-height:31.54px;color:#1414c4">s</span>
<div style="left:765.5px;top:970px;width:1px;height:36px;background:#f4f4f8"></div>
<svg style="left:766.5px;top:985.0px" width="8" height="6" viewBox="0 0 8 6"><path d="M0.4 0.6 H7.6 L4 4.8 Z" fill="#000"/></svg>
<div style="left:789px;top:960px;width:1131px;height:56px;border:1px solid #c6c6c9;border-right:none;background:#f8f9fe"></div>
<div style="left:0px;top:1016px;width:1920px;height:22px;background:#f0f0f0"></div>
<div style="left:9px;top:1019px;width:1px;height:19px;background:#d7d7d7"></div>
<div style="left:271px;top:1019px;width:1px;height:19px;background:#d7d7d7"></div>
<div style="left:1741px;top:1019px;width:1px;height:19px;background:#d7d7d7"></div>
<span style="left:14.7px;top:1024.24px;font-size:12px;line-height:12px;color:#000;font-weight:normal;letter-spacing:-0.248px;">Gestoppt.</span>
<div style="left:647px;top:280px;width:626px;height:473px;background:#f0f0f0;border:1px solid #3c3e4a;box-shadow:inset 0 0 0 1px #fff, 0 2px 11px 1px rgba(0,0,0,0.34)"></div>
<div style="left:648px;top:281px;width:624px;height:30px;background:#fff"></div>
<span style="left:656.2px;top:289.84px;font-size:12px;line-height:12px;color:#000;font-weight:normal;letter-spacing:-0.004px;">Erweiterte Misch-Optionen</span>
<svg style="left:1250px;top:289px" width="14" height="14" viewBox="0 0 14 14"><path d="M2 2 L12 12 M12 2 L2 12" stroke="#111" stroke-width="1.1"/></svg>
<div style="left:653px;top:316px;width:614px;height:353px;background:#fff;border:1px solid #000"></div>
<svg style="left:653px;top:316px" width="614" height="353" viewBox="653 316 614 353">
<g stroke="#000" stroke-width="1" shape-rendering="crispEdges">
<path d="M896 373 L1049 423 M861 450 L1049 562 M861 535 L1049 423 M896 612 L1049 562"/></g></svg>
<div style="left:794px;top:358px;width:102px;height:30px;background:#7070dc;border:1px solid #000"></div>
<span style="left:795px;top:366.86px;font-size:16px;line-height:16px;color:#101020;font-weight:normal;letter-spacing:-0.026px;">4 Vinyl Mix - L</span>
<div style="left:759px;top:435px;width:102px;height:30px;background:#7070dc;border:1px solid #000"></div>
<span style="left:760px;top:443.86px;font-size:16px;line-height:16px;color:#101020;font-weight:normal;letter-spacing:-0.150px;">4 Vinyl Mix - R</span>
<div style="left:759px;top:520px;width:102px;height:30px;background:#7070dc;border:1px solid #000"></div>
<span style="left:770px;top:528.86px;font-size:16px;line-height:16px;color:#101020;font-weight:normal;letter-spacing:-0.257px;">Vocoder - L</span>
<div style="left:794px;top:597px;width:102px;height:30px;background:#7070dc;border:1px solid #f01414"></div>
<span style="left:795.5px;top:605.86px;font-size:16px;line-height:16px;color:#101020;font-weight:normal;letter-spacing:-0.530px;">Tuba SM58 - R</span>
<div style="left:1049px;top:408px;width:102px;height:30px;background:#c4c4c4;border:1px solid #000"></div>
<span style="left:1059px;top:416.86px;font-size:16px;line-height:16px;color:#101020;font-weight:normal;letter-spacing:-0.684px;">Kanal:  1</span>
<div style="left:1049px;top:547px;width:102px;height:30px;background:#c4c4c4;border:1px solid #f01414"></div>
<span style="left:1059px;top:555.86px;font-size:16px;line-height:16px;color:#101020;font-weight:normal;letter-spacing:-0.628px;">Kanal:  2</span>
<span style="left:754px;top:681.04px;font-size:12px;line-height:12px;color:#000;font-weight:normal;letter-spacing:-0.218px;">Ausgabe-Kanäle:  2</span>
<div style="left:865px;top:679px;width:300px;height:22px;border:1px dotted #000"></div>
<div style="left:873px;top:690px;width:284px;height:3px;background:#e7eaea;border:1px solid #d6d6d6"></div>
<svg style="left:911px;top:681.6px" width="13" height="20" viewBox="0 0 13 20"><path d="M1 0.5 H11.5 V14.5 L6.3 19.4 L1 14.5 Z" fill="#0078d7"/></svg>
<div style="left:1063px;top:717px;width:73px;height:21px;background:#e1e1e1;border:2px solid #0078d7"></div>
<span style="left:1091px;top:721.84px;font-size:12px;line-height:12px;color:#000;font-weight:normal;letter-spacing:-0.422px;">OK</span>
<div style="left:1146px;top:717px;width:77px;height:21px;background:#e1e1e1;border:1px solid #adadad"></div>
<span style="left:1155px;top:721.84px;font-size:12px;line-height:12px;color:#000;font-weight:normal;letter-spacing:-0.005px;">Abbrechen</span>
<div style="left:1233px;top:714px;width:27px;height:27px;background:#e1e1e1;border:1px solid #adadad"></div>
<div style="left:1235.9px;top:716.9px;width:21.2px;height:21.2px;border-radius:50%;background:#6699fd"></div>
<span style="left:1241.5px;top:718.96px;font-size:18px;line-height:18px;color:#fff;font-weight:normal;-webkit-text-stroke:0.5px #fff;">?</span>
<div style="left:1267px;top:742px;width:2px;height:2px;background:#bdbdbd"></div>
<div style="left:1267px;top:745px;width:2px;height:2px;background:#bdbdbd"></div>
<div style="left:1264px;top:745px;width:2px;height:2px;background:#bdbdbd"></div>
<div style="left:1267px;top:748px;width:2px;height:2px;background:#bdbdbd"></div>
<div style="left:1264px;top:748px;width:2px;height:2px;background:#bdbdbd"></div>
<div style="left:1261px;top:748px;width:2px;height:2px;background:#bdbdbd"></div></body></html>
